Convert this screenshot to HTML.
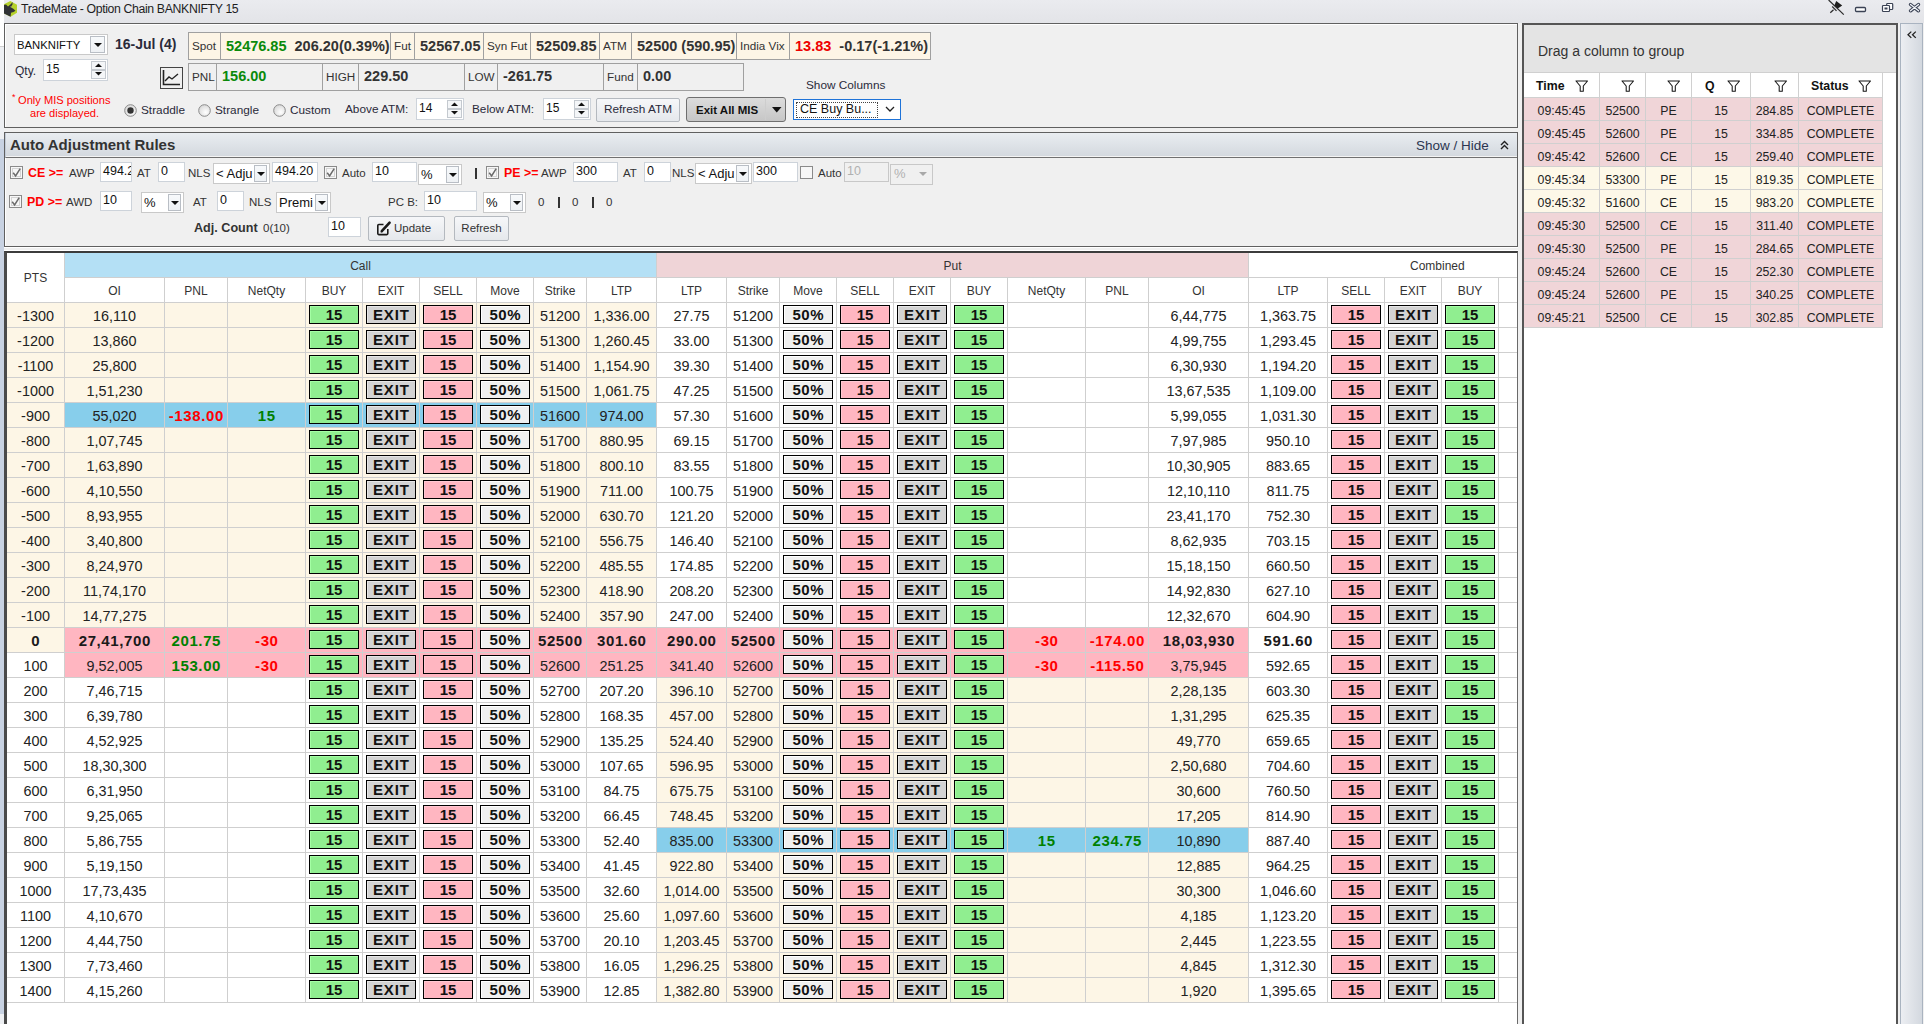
<!DOCTYPE html><html><head><meta charset="utf-8"><style>
*{box-sizing:border-box;margin:0;padding:0}
html,body{width:1924px;height:1024px;overflow:hidden;background:#f0f0f0;font-family:"Liberation Sans",sans-serif;color:#222}
body>div, .a{position:absolute}
div{position:absolute}
</style></head><body><div style="left:0px;top:0px;width:4px;height:1024px;background:#c8d2e2"></div>
<div style="left:0px;top:0px;width:4px;height:46px;background:#ffffff"></div>
<div style="left:0px;top:46px;width:4px;height:1px;background:#d0d0d0"></div>
<div style="left:0px;top:47px;width:4px;height:92px;background:#eef0f3"></div>
<div style="left:0px;top:1014px;width:4px;height:10px;background:#eef0f3"></div>
<div style="left:4px;top:0px;width:1920px;height:23px;background:linear-gradient(#eaebef,#e3e4e8)"></div>
<svg style="position:absolute;left:4px;top:1px" width="14" height="16" viewBox="0 0 14 16"><polygon points="6.3,0 13,3.8 13,11.8 6.6,15.8 0,12.5 0,3.2" fill="#b5d12c"/><path d="M0,4 L2,3.5 L4,5.5 L7,3 L8.5,1 L8.5,3.5 L6.5,6.2 L9,7.5 L11.5,9.8 L9.5,11 L7,11.8 L6.6,15.8 L0,12.5 Z" fill="#303236"/><path d="M6.5,5 L7.5,6.5" stroke="#777" stroke-width="1"/></svg>
<div style="left:21px;top:-0.5px;height:18px;line-height:18px;white-space:nowrap;text-align:left;font-size:12.3px;letter-spacing:-0.37px;color:#1e1e1e">TradeMate - Option Chain BANKNIFTY 15</div>
<svg style="position:absolute;left:1824px;top:0px" width="100" height="18" viewBox="0 0 100 18"><line x1="4.6" y1="0" x2="19.8" y2="14.6" stroke="#2a2a2a" stroke-width="1.2"/><path d="M12.2,1.1 L18.2,5.4 L13.8,8.6 L10.4,5.4 Z" fill="#1e1e1e"/><line x1="8.2" y1="6.5" x2="12.5" y2="10.8" stroke="#2a2a2a" stroke-width="1.2"/><line x1="6.3" y1="12.7" x2="9.5" y2="9.7" stroke="#2a2a2a" stroke-width="1.2"/><rect x="31.5" y="7.5" width="10" height="4" rx="1" fill="#fff" stroke="#3a4254" stroke-width="1.3"/><rect x="62.7" y="3.5" width="6" height="6" rx="0.8" fill="#fff" stroke="#3a4254" stroke-width="1.2"/><rect x="58.5" y="5.5" width="7" height="6" rx="0.8" fill="#fff" stroke="#3a4254" stroke-width="1.2"/><rect x="60.5" y="7.5" width="3" height="2" fill="#3a4254"/><path d="M86.5,4.5 L94.5,10.8 M94.5,4.5 L86.5,10.8" stroke="#3a4254" stroke-width="3.4" stroke-linecap="round"/><path d="M86.5,4.5 L94.5,10.8 M94.5,4.5 L86.5,10.8" stroke="#f4f6fb" stroke-width="1.3" stroke-linecap="round"/></svg>
<div style="left:4px;top:23px;width:1514px;height:105px;background:#f0f0f0;border:1px solid #606060;box-shadow:inset 1px 1px 0 #fff"></div>
<div style="left:14px;top:34px;width:94px;height:21px;background:#fff;border:1px solid #c9c9c9;"></div>
<div style="left:17px;top:36.5px;height:16px;line-height:16px;white-space:nowrap;text-align:left;font-size:11.3px;color:#111;">BANKNIFTY</div>
<div style="left:90px;top:36px;width:15px;height:17px;background:linear-gradient(#f7f9fb,#eef1f4);border:1px solid #b9bec5"></div>
<svg style="position:absolute;left:93.5px;top:42.5px" width="8" height="5"><path d="M0,0 L8,0 L4,4 Z" fill="#111"/></svg>
<div style="left:115px;top:35.0px;height:18px;line-height:18px;white-space:nowrap;text-align:left;font-size:14px;font-weight:bold;color:#2a2a3a">16-Jul (4)</div>
<div style="left:15px;top:62.0px;height:18px;line-height:18px;white-space:nowrap;text-align:left;font-size:12px;color:#2a2a3a">Qty.</div>
<div style="left:43px;top:59px;width:65px;height:22px;background:#fff;border:1px solid #cdd3da"></div>
<div style="left:46px;top:61.0px;height:16px;line-height:16px;white-space:nowrap;text-align:left;font-size:12px;color:#111">15</div>
<div style="left:91px;top:61px;width:15px;height:9px;background:#f4f6f8;border:1px solid #c4c9cf"></div>
<div style="left:91px;top:70px;width:15px;height:9px;background:#f4f6f8;border:1px solid #c4c9cf"></div>
<svg style="position:absolute;left:94px;top:63px" width="9" height="16"><path d="M1,4 L8,4 L4.5,0.5 Z" fill="#111"/><path d="M1,9 L8,9 L4.5,12.5 Z" fill="#111"/></svg>
<div style="left:12px;top:92.0px;height:10px;line-height:10px;white-space:nowrap;text-align:left;font-size:9px;color:#f00">*</div>
<div style="left:18px;top:93.0px;height:14px;line-height:14px;white-space:nowrap;text-align:left;font-size:11.1px;color:#f00">Only MIS positions</div>
<div style="left:30px;top:106.0px;height:14px;line-height:14px;white-space:nowrap;text-align:left;font-size:11.1px;color:#f00">are displayed.</div>
<div style="left:160px;top:67px;width:23px;height:22px;border:1px solid #444;background:#f0f0f0"></div>
<svg style="position:absolute;left:162px;top:69px" width="20" height="18"><path d="M1.5,1 L1.5,15.5 L18,15.5" stroke="#222" stroke-width="1.6" fill="none"/><path d="M3,12 L7,8 L10,10 L16,5" stroke="#222" stroke-width="1.4" fill="none"/></svg>
<div style="left:188px;top:32px;width:743px;height:28px;background:#fdf5e6;border:1px solid #a0a0a0"></div>
<div style="left:220px;top:32px;width:1px;height:28px;background:#a0a0a0"></div>
<div style="left:390px;top:32px;width:1px;height:28px;background:#a0a0a0"></div>
<div style="left:414px;top:32px;width:1px;height:28px;background:#a0a0a0"></div>
<div style="left:483px;top:32px;width:1px;height:28px;background:#a0a0a0"></div>
<div style="left:530px;top:32px;width:1px;height:28px;background:#a0a0a0"></div>
<div style="left:599px;top:32px;width:1px;height:28px;background:#a0a0a0"></div>
<div style="left:631px;top:32px;width:1px;height:28px;background:#a0a0a0"></div>
<div style="left:736px;top:32px;width:1px;height:28px;background:#a0a0a0"></div>
<div style="left:789px;top:32px;width:1px;height:28px;background:#a0a0a0"></div>
<div style="left:192px;top:37.0px;height:18px;line-height:18px;white-space:nowrap;text-align:left;font-size:11.7px;color:#333">Spot</div>
<div style="left:226px;top:37.0px;height:18px;line-height:18px;white-space:nowrap;text-align:left;font-size:14.5px;font-weight:bold;color:#333"><span style="color:#0a8a0a">52476.85</span>&nbsp; 206.20(0.39%)</div>
<div style="left:394px;top:37.0px;height:18px;line-height:18px;white-space:nowrap;text-align:left;font-size:11.7px;color:#333">Fut</div>
<div style="left:420px;top:37.0px;height:18px;line-height:18px;white-space:nowrap;text-align:left;font-size:14.5px;font-weight:bold;color:#333">52567.05</div>
<div style="left:487px;top:37.0px;height:18px;line-height:18px;white-space:nowrap;text-align:left;font-size:11.7px;color:#333">Syn Fut</div>
<div style="left:536px;top:37.0px;height:18px;line-height:18px;white-space:nowrap;text-align:left;font-size:14.5px;font-weight:bold;color:#333">52509.85</div>
<div style="left:603px;top:37.0px;height:18px;line-height:18px;white-space:nowrap;text-align:left;font-size:11.7px;color:#333">ATM</div>
<div style="left:637px;top:37.0px;height:18px;line-height:18px;white-space:nowrap;text-align:left;font-size:14.5px;font-weight:bold;color:#333">52500 (590.95)</div>
<div style="left:740px;top:37.0px;height:18px;line-height:18px;white-space:nowrap;text-align:left;font-size:11.7px;color:#333">India Vix</div>
<div style="left:795px;top:37.0px;height:18px;line-height:18px;white-space:nowrap;text-align:left;font-size:14.5px;font-weight:bold;color:#333"><span style="color:#e00">13.83</span>&nbsp; -0.17(-1.21%)</div>
<div style="left:188px;top:63px;width:556px;height:28px;background:#f0f0f0;border:1px solid #a0a0a0"></div>
<div style="left:216px;top:63px;width:1px;height:28px;background:#a0a0a0"></div>
<div style="left:322px;top:63px;width:1px;height:28px;background:#a0a0a0"></div>
<div style="left:358px;top:63px;width:1px;height:28px;background:#a0a0a0"></div>
<div style="left:464px;top:63px;width:1px;height:28px;background:#a0a0a0"></div>
<div style="left:497px;top:63px;width:1px;height:28px;background:#a0a0a0"></div>
<div style="left:603px;top:63px;width:1px;height:28px;background:#a0a0a0"></div>
<div style="left:637px;top:63px;width:1px;height:28px;background:#a0a0a0"></div>
<div style="left:192px;top:68.0px;height:18px;line-height:18px;white-space:nowrap;text-align:left;font-size:11.7px;color:#333">PNL</div>
<div style="left:222px;top:67.0px;height:18px;line-height:18px;white-space:nowrap;text-align:left;font-size:14.5px;font-weight:bold;color:#0a8a0a">156.00</div>
<div style="left:326px;top:68.0px;height:18px;line-height:18px;white-space:nowrap;text-align:left;font-size:11.7px;color:#333">HIGH</div>
<div style="left:364px;top:67.0px;height:18px;line-height:18px;white-space:nowrap;text-align:left;font-size:14.5px;font-weight:bold;color:#333">229.50</div>
<div style="left:468px;top:68.0px;height:18px;line-height:18px;white-space:nowrap;text-align:left;font-size:11.7px;color:#333">LOW</div>
<div style="left:503px;top:67.0px;height:18px;line-height:18px;white-space:nowrap;text-align:left;font-size:14.5px;font-weight:bold;color:#333">-261.75</div>
<div style="left:607px;top:68.0px;height:18px;line-height:18px;white-space:nowrap;text-align:left;font-size:11.7px;color:#333">Fund</div>
<div style="left:643px;top:67.0px;height:18px;line-height:18px;white-space:nowrap;text-align:left;font-size:14.5px;font-weight:bold;color:#333">0.00</div>
<svg style="position:absolute;left:123.5px;top:103.5px" width="13" height="13"><defs><radialGradient id="rg" cx="0.6" cy="0.65" r="0.6"><stop offset="0" stop-color="#ffffff"/><stop offset="1" stop-color="#dcdcdc"/></radialGradient></defs><circle cx="6.5" cy="6.5" r="5.8" fill="url(#rg)" stroke="#8a8a8a" stroke-width="1"/><circle cx="6.5" cy="6.5" r="3.2" fill="#333"/></svg>
<div style="left:141px;top:101.0px;height:18px;line-height:18px;white-space:nowrap;text-align:left;font-size:11.8px;color:#2a2a3a">Straddle</div>
<svg style="position:absolute;left:197.5px;top:103.5px" width="13" height="13"><defs><radialGradient id="rg" cx="0.6" cy="0.65" r="0.6"><stop offset="0" stop-color="#ffffff"/><stop offset="1" stop-color="#dcdcdc"/></radialGradient></defs><circle cx="6.5" cy="6.5" r="5.8" fill="url(#rg)" stroke="#8a8a8a" stroke-width="1"/></svg>
<div style="left:215px;top:101.0px;height:18px;line-height:18px;white-space:nowrap;text-align:left;font-size:11.8px;color:#2a2a3a">Strangle</div>
<svg style="position:absolute;left:272.5px;top:103.5px" width="13" height="13"><defs><radialGradient id="rg" cx="0.6" cy="0.65" r="0.6"><stop offset="0" stop-color="#ffffff"/><stop offset="1" stop-color="#dcdcdc"/></radialGradient></defs><circle cx="6.5" cy="6.5" r="5.8" fill="url(#rg)" stroke="#8a8a8a" stroke-width="1"/></svg>
<div style="left:290px;top:101.0px;height:18px;line-height:18px;white-space:nowrap;text-align:left;font-size:11.8px;color:#2a2a3a">Custom</div>
<div style="left:345px;top:100.0px;height:18px;line-height:18px;white-space:nowrap;text-align:left;font-size:11.8px;color:#2a2a3a">Above ATM:</div>
<div style="left:416px;top:98px;width:48px;height:22px;background:#fff;border:1px solid #cdd3da"></div>
<div style="left:419px;top:100.0px;height:16px;line-height:16px;white-space:nowrap;text-align:left;font-size:12px;color:#111">14</div>
<div style="left:447px;top:100px;width:15px;height:9px;background:#f4f6f8;border:1px solid #c4c9cf"></div>
<div style="left:447px;top:109px;width:15px;height:9px;background:#f4f6f8;border:1px solid #c4c9cf"></div>
<svg style="position:absolute;left:450px;top:102px" width="9" height="16"><path d="M1,4 L8,4 L4.5,0.5 Z" fill="#111"/><path d="M1,9 L8,9 L4.5,12.5 Z" fill="#111"/></svg>
<div style="left:472px;top:100.0px;height:18px;line-height:18px;white-space:nowrap;text-align:left;font-size:11.8px;color:#2a2a3a">Below ATM:</div>
<div style="left:543px;top:98px;width:48px;height:22px;background:#fff;border:1px solid #cdd3da"></div>
<div style="left:546px;top:100.0px;height:16px;line-height:16px;white-space:nowrap;text-align:left;font-size:12px;color:#111">15</div>
<div style="left:574px;top:100px;width:15px;height:9px;background:#f4f6f8;border:1px solid #c4c9cf"></div>
<div style="left:574px;top:109px;width:15px;height:9px;background:#f4f6f8;border:1px solid #c4c9cf"></div>
<svg style="position:absolute;left:577px;top:102px" width="9" height="16"><path d="M1,4 L8,4 L4.5,0.5 Z" fill="#111"/><path d="M1,9 L8,9 L4.5,12.5 Z" fill="#111"/></svg>
<div style="left:596px;top:98px;width:84px;height:24px;background:linear-gradient(#f6f7f9,#e5e8ec);border:1px solid #b4b9bf;border-radius:2px"></div>
<div style="left:596px;top:100.0px;height:18px;line-height:18px;width:84px;text-align:center;font-size:11.8px;color:#2a2a3a">Refresh ATM</div>
<div style="left:686px;top:97px;width:100px;height:25px;background:linear-gradient(#dcdcdc,#c6c6c6);border:1px solid #6f6f6f;border-radius:3px"></div>
<div style="left:765px;top:99px;width:1px;height:21px;background:#cdcdcd"></div>
<div style="left:696px;top:101.0px;height:18px;line-height:18px;white-space:nowrap;text-align:left;font-size:11.5px;font-weight:bold;color:#111">Exit All MIS</div>
<svg style="position:absolute;left:772px;top:107px" width="10" height="6"><path d="M0,0 L9.5,0 L4.75,5.5 Z" fill="#111"/></svg>
<div style="left:806px;top:76.0px;height:18px;line-height:18px;white-space:nowrap;text-align:left;font-size:11.8px;color:#2a2a3a">Show Columns</div>
<div style="left:793px;top:99px;width:108px;height:21px;background:#fff;border:1px solid #1e73d8"></div>
<div style="left:796px;top:102px;width:82px;height:16px;border:1px dotted #444"></div>
<div style="left:800px;top:100.0px;height:18px;line-height:18px;white-space:nowrap;text-align:left;font-size:12.5px;color:#111">CE Buy Bu...</div>
<svg style="position:absolute;left:885px;top:106px" width="10" height="7"><path d="M1,1 L5,5 L9,1" stroke="#222" stroke-width="1.3" fill="none"/></svg>
<div style="left:4px;top:132px;width:1514px;height:115px;background:#f0f0f0;border:1px solid #606060;box-shadow:inset 1px 1px 0 #fff"></div>
<div style="left:5px;top:133px;width:1512px;height:25px;background:linear-gradient(#e9edf1,#d3d8de);border-left:1px solid #c3ccd8;border-bottom:1px solid #707070;box-shadow:inset 0 -1px 0 #f4f4f4"></div>
<div style="left:10px;top:135.0px;height:20px;line-height:20px;white-space:nowrap;text-align:left;font-size:15px;font-weight:bold;color:#333">Auto Adjustment Rules</div>
<div style="left:1416px;top:137.0px;height:18px;line-height:18px;white-space:nowrap;text-align:left;font-size:13.5px;color:#2b3550">Show / Hide</div>
<svg style="position:absolute;left:1500px;top:140px" width="9" height="10"><path d="M1,5 L4.5,1.5 L8,5 M1,9 L4.5,5.5 L8,9" stroke="#222" stroke-width="1.4" fill="none"/></svg>
<svg style="position:absolute;left:10px;top:166px" width="13" height="13"><rect x="0.5" y="0.5" width="12" height="12" fill="#f7f7f7" stroke="#8a8a8a"/><rect x="2.5" y="2.5" width="8" height="8" fill="none" stroke="#d4d4d4"/><path d="M3.2,6.8 L5.6,10 L10.2,2.6" stroke="#6a6a6a" stroke-width="1.5" fill="none"/></svg>
<div style="left:28px;top:164.0px;height:18px;line-height:18px;white-space:nowrap;text-align:left;font-size:12.4px;font-weight:bold;color:#f00">CE &gt;=</div>
<div style="left:69px;top:164.0px;height:18px;line-height:18px;white-space:nowrap;text-align:left;font-size:11.5px;color:#333">AWP</div>
<div style="left:100px;top:162px;width:32px;height:20px;background:#fff;border:1px solid #cdd3da;overflow:hidden"><div style="left:2px;top:0.0px;line-height:16px;height:16px;font-size:12.5px;color:#111;white-space:nowrap">494.2</div></div>
<div style="left:137px;top:164.0px;height:18px;line-height:18px;white-space:nowrap;text-align:left;font-size:11.5px;color:#333">AT</div>
<div style="left:158px;top:162px;width:27px;height:20px;background:#fff;border:1px solid #cdd3da;overflow:hidden"><div style="left:2px;top:0.0px;line-height:16px;height:16px;font-size:12.5px;color:#111;white-space:nowrap">0</div></div>
<div style="left:188px;top:164.0px;height:18px;line-height:18px;white-space:nowrap;text-align:left;font-size:11.5px;color:#333">NLS</div>
<div style="left:213px;top:163px;width:57px;height:21px;background:#fff;border:1px solid #c9c9c9;"></div>
<div style="left:216px;top:165.5px;height:16px;line-height:16px;white-space:nowrap;text-align:left;font-size:13px;color:#111;width:38px;overflow:hidden">&lt; Adju</div>
<div style="left:254px;top:165px;width:13px;height:17px;background:linear-gradient(#f7f9fb,#eef1f4);border:1px solid #b9bec5"></div>
<svg style="position:absolute;left:256.5px;top:171.5px" width="8" height="5"><path d="M0,0 L8,0 L4,4 Z" fill="#111"/></svg>
<div style="left:272px;top:162px;width:46px;height:20px;background:#fff;border:1px solid #cdd3da;overflow:hidden"><div style="left:2px;top:0.0px;line-height:16px;height:16px;font-size:12.5px;color:#111;white-space:nowrap">494.20</div></div>
<svg style="position:absolute;left:324px;top:166px" width="13" height="13"><rect x="0.5" y="0.5" width="12" height="12" fill="#f7f7f7" stroke="#8a8a8a"/><rect x="2.5" y="2.5" width="8" height="8" fill="none" stroke="#d4d4d4"/><path d="M3.2,6.8 L5.6,10 L10.2,2.6" stroke="#6a6a6a" stroke-width="1.5" fill="none"/></svg>
<div style="left:342px;top:164.0px;height:18px;line-height:18px;white-space:nowrap;text-align:left;font-size:11.5px;color:#333">Auto</div>
<div style="left:372px;top:162px;width:45px;height:20px;background:#fff;border:1px solid #cdd3da;overflow:hidden"><div style="left:2px;top:0.0px;line-height:16px;height:16px;font-size:12.5px;color:#111;white-space:nowrap">10</div></div>
<div style="left:418px;top:164px;width:44px;height:21px;background:#fff;border:1px solid #c9c9c9;"></div>
<div style="left:421px;top:166.5px;height:16px;line-height:16px;white-space:nowrap;text-align:left;font-size:13px;color:#111;">%</div>
<div style="left:446px;top:166px;width:13px;height:17px;background:linear-gradient(#f7f9fb,#eef1f4);border:1px solid #b9bec5"></div>
<svg style="position:absolute;left:448.5px;top:172.5px" width="8" height="5"><path d="M0,0 L8,0 L4,4 Z" fill="#111"/></svg>
<div style="left:475px;top:168px;width:2px;height:11px;background:#333"></div>
<svg style="position:absolute;left:486px;top:166px" width="13" height="13"><rect x="0.5" y="0.5" width="12" height="12" fill="#f7f7f7" stroke="#8a8a8a"/><rect x="2.5" y="2.5" width="8" height="8" fill="none" stroke="#d4d4d4"/><path d="M3.2,6.8 L5.6,10 L10.2,2.6" stroke="#6a6a6a" stroke-width="1.5" fill="none"/></svg>
<div style="left:504px;top:164.0px;height:18px;line-height:18px;white-space:nowrap;text-align:left;font-size:12.4px;font-weight:bold;color:#f00">PE &gt;=</div>
<div style="left:541px;top:164.0px;height:18px;line-height:18px;white-space:nowrap;text-align:left;font-size:11.5px;color:#333">AWP</div>
<div style="left:573px;top:162px;width:45px;height:20px;background:#fff;border:1px solid #cdd3da;overflow:hidden"><div style="left:2px;top:0.0px;line-height:16px;height:16px;font-size:12.5px;color:#111;white-space:nowrap">300</div></div>
<div style="left:623px;top:164.0px;height:18px;line-height:18px;white-space:nowrap;text-align:left;font-size:11.5px;color:#333">AT</div>
<div style="left:644px;top:162px;width:27px;height:20px;background:#fff;border:1px solid #cdd3da;overflow:hidden"><div style="left:2px;top:0.0px;line-height:16px;height:16px;font-size:12.5px;color:#111;white-space:nowrap">0</div></div>
<div style="left:672px;top:164.0px;height:18px;line-height:18px;white-space:nowrap;text-align:left;font-size:11.5px;color:#333">NLS</div>
<div style="left:695px;top:163px;width:57px;height:21px;background:#fff;border:1px solid #c9c9c9;"></div>
<div style="left:698px;top:165.5px;height:16px;line-height:16px;white-space:nowrap;text-align:left;font-size:13px;color:#111;">&lt; Adju</div>
<div style="left:736px;top:165px;width:13px;height:17px;background:linear-gradient(#f7f9fb,#eef1f4);border:1px solid #b9bec5"></div>
<svg style="position:absolute;left:738.5px;top:171.5px" width="8" height="5"><path d="M0,0 L8,0 L4,4 Z" fill="#111"/></svg>
<div style="left:753px;top:162px;width:45px;height:20px;background:#fff;border:1px solid #cdd3da;overflow:hidden"><div style="left:2px;top:0.0px;line-height:16px;height:16px;font-size:12.5px;color:#111;white-space:nowrap">300</div></div>
<svg style="position:absolute;left:800px;top:166px" width="13" height="13"><rect x="0.5" y="0.5" width="12" height="12" fill="#f7f7f7" stroke="#8a8a8a"/></svg>
<div style="left:818px;top:164.0px;height:18px;line-height:18px;white-space:nowrap;text-align:left;font-size:11.5px;color:#333">Auto</div>
<div style="left:844px;top:162px;width:45px;height:20px;background:#f0f0f0;border:1px solid #c8c8c8;overflow:hidden"><div style="left:2px;top:0.0px;line-height:16px;height:16px;font-size:12.5px;color:#b0b0b0;white-space:nowrap">10</div></div>
<div style="left:890px;top:164px;width:43px;height:21px;background:#f0f0f0;border:1px solid #c8c8c8"></div>
<div style="left:894px;top:165.0px;height:18px;line-height:18px;white-space:nowrap;text-align:left;font-size:13px;color:#b0b0b0">%</div>
<svg style="position:absolute;left:919px;top:172px" width="8" height="5"><path d="M0,0 L8,0 L4,4 Z" fill="#a8a8a8"/></svg>
<svg style="position:absolute;left:9px;top:195px" width="13" height="13"><rect x="0.5" y="0.5" width="12" height="12" fill="#f7f7f7" stroke="#8a8a8a"/><rect x="2.5" y="2.5" width="8" height="8" fill="none" stroke="#d4d4d4"/><path d="M3.2,6.8 L5.6,10 L10.2,2.6" stroke="#6a6a6a" stroke-width="1.5" fill="none"/></svg>
<div style="left:27px;top:193.0px;height:18px;line-height:18px;white-space:nowrap;text-align:left;font-size:12.4px;font-weight:bold;color:#f00">PD &gt;=</div>
<div style="left:66px;top:193.0px;height:18px;line-height:18px;white-space:nowrap;text-align:left;font-size:11.5px;color:#333">AWD</div>
<div style="left:100px;top:191px;width:32px;height:20px;background:#fff;border:1px solid #cdd3da;overflow:hidden"><div style="left:2px;top:0.0px;line-height:16px;height:16px;font-size:12.5px;color:#111;white-space:nowrap">10</div></div>
<div style="left:141px;top:192px;width:43px;height:21px;background:#fff;border:1px solid #c9c9c9;"></div>
<div style="left:144px;top:194.5px;height:16px;line-height:16px;white-space:nowrap;text-align:left;font-size:13px;color:#111;">%</div>
<div style="left:168px;top:194px;width:13px;height:17px;background:linear-gradient(#f7f9fb,#eef1f4);border:1px solid #b9bec5"></div>
<svg style="position:absolute;left:170.5px;top:200.5px" width="8" height="5"><path d="M0,0 L8,0 L4,4 Z" fill="#111"/></svg>
<div style="left:193px;top:193.0px;height:18px;line-height:18px;white-space:nowrap;text-align:left;font-size:11.5px;color:#333">AT</div>
<div style="left:217px;top:191px;width:27px;height:20px;background:#fff;border:1px solid #cdd3da;overflow:hidden"><div style="left:2px;top:0.0px;line-height:16px;height:16px;font-size:12.5px;color:#111;white-space:nowrap">0</div></div>
<div style="left:249px;top:193.0px;height:18px;line-height:18px;white-space:nowrap;text-align:left;font-size:11.5px;color:#333">NLS</div>
<div style="left:276px;top:192px;width:55px;height:21px;background:#fff;border:1px solid #c9c9c9;"></div>
<div style="left:279px;top:194.5px;height:16px;line-height:16px;white-space:nowrap;text-align:left;font-size:13px;color:#111;">Premi</div>
<div style="left:315px;top:194px;width:13px;height:17px;background:linear-gradient(#f7f9fb,#eef1f4);border:1px solid #b9bec5"></div>
<svg style="position:absolute;left:317.5px;top:200.5px" width="8" height="5"><path d="M0,0 L8,0 L4,4 Z" fill="#111"/></svg>
<div style="left:388px;top:193.0px;height:18px;line-height:18px;white-space:nowrap;text-align:left;font-size:11.5px;color:#333">PC B:</div>
<div style="left:424px;top:191px;width:53px;height:20px;background:#fff;border:1px solid #cdd3da;overflow:hidden"><div style="left:2px;top:0.0px;line-height:16px;height:16px;font-size:12.5px;color:#111;white-space:nowrap">10</div></div>
<div style="left:483px;top:192px;width:43px;height:21px;background:#fff;border:1px solid #c9c9c9;"></div>
<div style="left:486px;top:194.5px;height:16px;line-height:16px;white-space:nowrap;text-align:left;font-size:13px;color:#111;">%</div>
<div style="left:510px;top:194px;width:13px;height:17px;background:linear-gradient(#f7f9fb,#eef1f4);border:1px solid #b9bec5"></div>
<svg style="position:absolute;left:512.5px;top:200.5px" width="8" height="5"><path d="M0,0 L8,0 L4,4 Z" fill="#111"/></svg>
<div style="left:538px;top:193.0px;height:18px;line-height:18px;white-space:nowrap;text-align:left;font-size:11.5px;color:#333">0</div>
<div style="left:558px;top:197px;width:2px;height:11px;background:#333"></div>
<div style="left:572px;top:193.0px;height:18px;line-height:18px;white-space:nowrap;text-align:left;font-size:11.5px;color:#333">0</div>
<div style="left:592px;top:197px;width:2px;height:11px;background:#333"></div>
<div style="left:606px;top:193.0px;height:18px;line-height:18px;white-space:nowrap;text-align:left;font-size:11.5px;color:#333">0</div>
<div style="left:194px;top:219.0px;height:18px;line-height:18px;white-space:nowrap;text-align:left;font-size:12.6px;font-weight:bold;color:#333">Adj. Count</div>
<div style="left:263px;top:219.0px;height:18px;line-height:18px;white-space:nowrap;text-align:left;font-size:11.5px;color:#333">0(10)</div>
<div style="left:328px;top:217px;width:33px;height:20px;background:#fff;border:1px solid #cdd3da;overflow:hidden"><div style="left:2px;top:0.0px;line-height:16px;height:16px;font-size:12.5px;color:#111;white-space:nowrap">10</div></div>
<div style="left:368px;top:216px;width:77px;height:25px;background:linear-gradient(#f6f7f9,#e5e8ec);border:1px solid #b4b9bf;border-radius:2px"></div>
<svg style="position:absolute;left:375px;top:219px" width="17" height="17"><path d="M8.5,5.5 H3.8 Q2.8,5.5 2.8,6.5 V14.6 Q2.8,15.6 3.8,15.6 H11.8 Q12.8,15.6 12.8,14.6 V10" fill="none" stroke="#1a1a1a" stroke-width="1.6"/><path d="M6.8,12.2 L14.6,3.6" stroke="#1a1a1a" stroke-width="2.6" stroke-linecap="round"/><path d="M5.6,13.6 L6.4,11.4 L7.9,12.8 Z" fill="#1a1a1a"/></svg>
<div style="left:394px;top:219.0px;height:18px;line-height:18px;white-space:nowrap;text-align:left;font-size:11.5px;color:#333">Update</div>
<div style="left:454px;top:216px;width:55px;height:25px;background:linear-gradient(#f6f7f9,#e5e8ec);border:1px solid #b4b9bf;border-radius:2px"></div>
<div style="left:454px;top:219.0px;height:18px;line-height:18px;width:55px;text-align:center;font-size:11.5px;color:#333">Refresh</div>
<div style="left:4px;top:247px;width:1514px;height:4px;background:#f0f0f0;border-top:1px solid #fff;border-bottom:1px solid #fff"></div>
<div style="left:4px;top:251px;width:1514px;height:773px;background:#fff;border-top:2px solid #3c3c3c;border-left:3px solid #4a4a4a;border-right:1px solid #6a6a6a"></div>
<div style="left:65px;top:253px;width:591px;height:24px;background:#b4e0f5"></div>
<div style="left:657px;top:253px;width:591px;height:24px;background:#efd4d7"></div>
<div style="left:65px;top:258.0px;height:16px;line-height:16px;width:591px;text-align:center;font-size:12px;color:#333">Call</div>
<div style="left:657px;top:258.0px;height:16px;line-height:16px;width:591px;text-align:center;font-size:12px;color:#333">Put</div>
<div style="left:1410px;top:258.0px;height:16px;line-height:16px;white-space:nowrap;text-align:left;font-size:12px;color:#333">Combined</div>
<div style="left:65px;top:277px;width:1452px;height:1px;background:#cfcfcf"></div>
<div style="left:7px;top:270.0px;height:16px;line-height:16px;width:57px;text-align:center;font-size:12px;color:#333">PTS</div>
<div style="left:65px;top:283.0px;height:16px;line-height:16px;width:99px;text-align:center;font-size:12px;color:#333">OI</div>
<div style="left:165px;top:283.0px;height:16px;line-height:16px;width:62px;text-align:center;font-size:12px;color:#333">PNL</div>
<div style="left:228px;top:283.0px;height:16px;line-height:16px;width:77px;text-align:center;font-size:12px;color:#333">NetQty</div>
<div style="left:306px;top:283.0px;height:16px;line-height:16px;width:56px;text-align:center;font-size:12px;color:#333">BUY</div>
<div style="left:363px;top:283.0px;height:16px;line-height:16px;width:56px;text-align:center;font-size:12px;color:#333">EXIT</div>
<div style="left:420px;top:283.0px;height:16px;line-height:16px;width:56px;text-align:center;font-size:12px;color:#333">SELL</div>
<div style="left:477px;top:283.0px;height:16px;line-height:16px;width:56px;text-align:center;font-size:12px;color:#333">Move</div>
<div style="left:534px;top:283.0px;height:16px;line-height:16px;width:52px;text-align:center;font-size:12px;color:#333">Strike</div>
<div style="left:587px;top:283.0px;height:16px;line-height:16px;width:69px;text-align:center;font-size:12px;color:#333">LTP</div>
<div style="left:657px;top:283.0px;height:16px;line-height:16px;width:69px;text-align:center;font-size:12px;color:#333">LTP</div>
<div style="left:727px;top:283.0px;height:16px;line-height:16px;width:52px;text-align:center;font-size:12px;color:#333">Strike</div>
<div style="left:780px;top:283.0px;height:16px;line-height:16px;width:56px;text-align:center;font-size:12px;color:#333">Move</div>
<div style="left:837px;top:283.0px;height:16px;line-height:16px;width:56px;text-align:center;font-size:12px;color:#333">SELL</div>
<div style="left:894px;top:283.0px;height:16px;line-height:16px;width:56px;text-align:center;font-size:12px;color:#333">EXIT</div>
<div style="left:951px;top:283.0px;height:16px;line-height:16px;width:56px;text-align:center;font-size:12px;color:#333">BUY</div>
<div style="left:1008px;top:283.0px;height:16px;line-height:16px;width:77px;text-align:center;font-size:12px;color:#333">NetQty</div>
<div style="left:1086px;top:283.0px;height:16px;line-height:16px;width:62px;text-align:center;font-size:12px;color:#333">PNL</div>
<div style="left:1149px;top:283.0px;height:16px;line-height:16px;width:99px;text-align:center;font-size:12px;color:#333">OI</div>
<div style="left:1249px;top:283.0px;height:16px;line-height:16px;width:78px;text-align:center;font-size:12px;color:#333">LTP</div>
<div style="left:1328px;top:283.0px;height:16px;line-height:16px;width:56px;text-align:center;font-size:12px;color:#333">SELL</div>
<div style="left:1385px;top:283.0px;height:16px;line-height:16px;width:56px;text-align:center;font-size:12px;color:#333">EXIT</div>
<div style="left:1442px;top:283.0px;height:16px;line-height:16px;width:56px;text-align:center;font-size:12px;color:#333">BUY</div>
<div style="left:1499px;top:283.0px;height:16px;line-height:16px;width:18px;text-align:center;font-size:12px;color:#333"></div>
<div style="left:7px;top:303px;width:57px;height:24px;background:#fdf6e6"></div>
<div style="left:65px;top:303px;width:591px;height:24px;background:#fdf6e6"></div>
<div style="left:7px;top:327px;width:1510px;height:1px;background:#cfcfcf"></div>
<div style="left:7px;top:305.5px;height:20px;line-height:20px;width:57px;text-align:center;font-size:14.4px;color:#222">-1300</div>
<div style="left:65px;top:305.5px;height:20px;line-height:20px;width:99px;text-align:center;font-size:14.4px;color:#222">16,110</div>
<div style="left:534px;top:305.5px;height:20px;line-height:20px;width:52px;text-align:center;font-size:14.4px;color:#222">51200</div>
<div style="left:587px;top:305.5px;height:20px;line-height:20px;width:69px;text-align:center;font-size:14.4px;color:#222">1,336.00</div>
<div style="left:657px;top:305.5px;height:20px;line-height:20px;width:69px;text-align:center;font-size:14.4px;color:#222">27.75</div>
<div style="left:727px;top:305.5px;height:20px;line-height:20px;width:52px;text-align:center;font-size:14.4px;color:#222">51200</div>
<div style="left:1149px;top:305.5px;height:20px;line-height:20px;width:99px;text-align:center;font-size:14.4px;color:#222">6,44,775</div>
<div style="left:1249px;top:305.5px;height:20px;line-height:20px;width:78px;text-align:center;font-size:14.4px;color:#222">1,363.75</div>
<div style="left:309px;top:305px;width:50px;height:19px;background:#90ee90;border:1px solid #000;box-shadow:inset 1px 1px 0 #a4ffa4"></div>
<div style="left:309px;top:304.5px;height:19px;line-height:19px;width:50px;text-align:center;font-size:15px;font-weight:bold;color:#111;">15</div>
<div style="left:366px;top:305px;width:50px;height:19px;background:#d3d3d3;border:1px solid #000;box-shadow:inset 1px 1px 0 #e6e6e6"></div>
<div style="left:366px;top:304.5px;height:19px;line-height:19px;width:50px;text-align:center;font-size:15px;font-weight:bold;color:#111;letter-spacing:0.9px;text-indent:0.9px;">EXIT</div>
<div style="left:423px;top:305px;width:50px;height:19px;background:#ffb6c1;border:1px solid #000;box-shadow:inset 1px 1px 0 #ffc8d2"></div>
<div style="left:423px;top:304.5px;height:19px;line-height:19px;width:50px;text-align:center;font-size:15px;font-weight:bold;color:#111;">15</div>
<div style="left:480px;top:305px;width:50px;height:19px;background:#f0f0f0;border:1px solid #000;box-shadow:inset 1px 1px 0 #ffffff"></div>
<div style="left:480px;top:304.5px;height:19px;line-height:19px;width:50px;text-align:center;font-size:15px;font-weight:bold;color:#111;letter-spacing:0.5px;text-indent:0.5px;">50%</div>
<div style="left:783px;top:305px;width:50px;height:19px;background:#f0f0f0;border:1px solid #000;box-shadow:inset 1px 1px 0 #ffffff"></div>
<div style="left:783px;top:304.5px;height:19px;line-height:19px;width:50px;text-align:center;font-size:15px;font-weight:bold;color:#111;letter-spacing:0.5px;text-indent:0.5px;">50%</div>
<div style="left:840px;top:305px;width:50px;height:19px;background:#ffb6c1;border:1px solid #000;box-shadow:inset 1px 1px 0 #ffc8d2"></div>
<div style="left:840px;top:304.5px;height:19px;line-height:19px;width:50px;text-align:center;font-size:15px;font-weight:bold;color:#111;">15</div>
<div style="left:897px;top:305px;width:50px;height:19px;background:#d3d3d3;border:1px solid #000;box-shadow:inset 1px 1px 0 #e6e6e6"></div>
<div style="left:897px;top:304.5px;height:19px;line-height:19px;width:50px;text-align:center;font-size:15px;font-weight:bold;color:#111;letter-spacing:0.9px;text-indent:0.9px;">EXIT</div>
<div style="left:954px;top:305px;width:50px;height:19px;background:#90ee90;border:1px solid #000;box-shadow:inset 1px 1px 0 #a4ffa4"></div>
<div style="left:954px;top:304.5px;height:19px;line-height:19px;width:50px;text-align:center;font-size:15px;font-weight:bold;color:#111;">15</div>
<div style="left:1331px;top:305px;width:50px;height:19px;background:#ffb6c1;border:1px solid #000;box-shadow:inset 1px 1px 0 #ffc8d2"></div>
<div style="left:1331px;top:304.5px;height:19px;line-height:19px;width:50px;text-align:center;font-size:15px;font-weight:bold;color:#111;">15</div>
<div style="left:1388px;top:305px;width:50px;height:19px;background:#d3d3d3;border:1px solid #000;box-shadow:inset 1px 1px 0 #e6e6e6"></div>
<div style="left:1388px;top:304.5px;height:19px;line-height:19px;width:50px;text-align:center;font-size:15px;font-weight:bold;color:#111;letter-spacing:0.9px;text-indent:0.9px;">EXIT</div>
<div style="left:1445px;top:305px;width:50px;height:19px;background:#90ee90;border:1px solid #000;box-shadow:inset 1px 1px 0 #a4ffa4"></div>
<div style="left:1445px;top:304.5px;height:19px;line-height:19px;width:50px;text-align:center;font-size:15px;font-weight:bold;color:#111;">15</div>
<div style="left:7px;top:328px;width:57px;height:24px;background:#fdf6e6"></div>
<div style="left:65px;top:328px;width:591px;height:24px;background:#fdf6e6"></div>
<div style="left:7px;top:352px;width:1510px;height:1px;background:#cfcfcf"></div>
<div style="left:7px;top:330.5px;height:20px;line-height:20px;width:57px;text-align:center;font-size:14.4px;color:#222">-1200</div>
<div style="left:65px;top:330.5px;height:20px;line-height:20px;width:99px;text-align:center;font-size:14.4px;color:#222">13,860</div>
<div style="left:534px;top:330.5px;height:20px;line-height:20px;width:52px;text-align:center;font-size:14.4px;color:#222">51300</div>
<div style="left:587px;top:330.5px;height:20px;line-height:20px;width:69px;text-align:center;font-size:14.4px;color:#222">1,260.45</div>
<div style="left:657px;top:330.5px;height:20px;line-height:20px;width:69px;text-align:center;font-size:14.4px;color:#222">33.00</div>
<div style="left:727px;top:330.5px;height:20px;line-height:20px;width:52px;text-align:center;font-size:14.4px;color:#222">51300</div>
<div style="left:1149px;top:330.5px;height:20px;line-height:20px;width:99px;text-align:center;font-size:14.4px;color:#222">4,99,755</div>
<div style="left:1249px;top:330.5px;height:20px;line-height:20px;width:78px;text-align:center;font-size:14.4px;color:#222">1,293.45</div>
<div style="left:309px;top:330px;width:50px;height:19px;background:#90ee90;border:1px solid #000;box-shadow:inset 1px 1px 0 #a4ffa4"></div>
<div style="left:309px;top:329.5px;height:19px;line-height:19px;width:50px;text-align:center;font-size:15px;font-weight:bold;color:#111;">15</div>
<div style="left:366px;top:330px;width:50px;height:19px;background:#d3d3d3;border:1px solid #000;box-shadow:inset 1px 1px 0 #e6e6e6"></div>
<div style="left:366px;top:329.5px;height:19px;line-height:19px;width:50px;text-align:center;font-size:15px;font-weight:bold;color:#111;letter-spacing:0.9px;text-indent:0.9px;">EXIT</div>
<div style="left:423px;top:330px;width:50px;height:19px;background:#ffb6c1;border:1px solid #000;box-shadow:inset 1px 1px 0 #ffc8d2"></div>
<div style="left:423px;top:329.5px;height:19px;line-height:19px;width:50px;text-align:center;font-size:15px;font-weight:bold;color:#111;">15</div>
<div style="left:480px;top:330px;width:50px;height:19px;background:#f0f0f0;border:1px solid #000;box-shadow:inset 1px 1px 0 #ffffff"></div>
<div style="left:480px;top:329.5px;height:19px;line-height:19px;width:50px;text-align:center;font-size:15px;font-weight:bold;color:#111;letter-spacing:0.5px;text-indent:0.5px;">50%</div>
<div style="left:783px;top:330px;width:50px;height:19px;background:#f0f0f0;border:1px solid #000;box-shadow:inset 1px 1px 0 #ffffff"></div>
<div style="left:783px;top:329.5px;height:19px;line-height:19px;width:50px;text-align:center;font-size:15px;font-weight:bold;color:#111;letter-spacing:0.5px;text-indent:0.5px;">50%</div>
<div style="left:840px;top:330px;width:50px;height:19px;background:#ffb6c1;border:1px solid #000;box-shadow:inset 1px 1px 0 #ffc8d2"></div>
<div style="left:840px;top:329.5px;height:19px;line-height:19px;width:50px;text-align:center;font-size:15px;font-weight:bold;color:#111;">15</div>
<div style="left:897px;top:330px;width:50px;height:19px;background:#d3d3d3;border:1px solid #000;box-shadow:inset 1px 1px 0 #e6e6e6"></div>
<div style="left:897px;top:329.5px;height:19px;line-height:19px;width:50px;text-align:center;font-size:15px;font-weight:bold;color:#111;letter-spacing:0.9px;text-indent:0.9px;">EXIT</div>
<div style="left:954px;top:330px;width:50px;height:19px;background:#90ee90;border:1px solid #000;box-shadow:inset 1px 1px 0 #a4ffa4"></div>
<div style="left:954px;top:329.5px;height:19px;line-height:19px;width:50px;text-align:center;font-size:15px;font-weight:bold;color:#111;">15</div>
<div style="left:1331px;top:330px;width:50px;height:19px;background:#ffb6c1;border:1px solid #000;box-shadow:inset 1px 1px 0 #ffc8d2"></div>
<div style="left:1331px;top:329.5px;height:19px;line-height:19px;width:50px;text-align:center;font-size:15px;font-weight:bold;color:#111;">15</div>
<div style="left:1388px;top:330px;width:50px;height:19px;background:#d3d3d3;border:1px solid #000;box-shadow:inset 1px 1px 0 #e6e6e6"></div>
<div style="left:1388px;top:329.5px;height:19px;line-height:19px;width:50px;text-align:center;font-size:15px;font-weight:bold;color:#111;letter-spacing:0.9px;text-indent:0.9px;">EXIT</div>
<div style="left:1445px;top:330px;width:50px;height:19px;background:#90ee90;border:1px solid #000;box-shadow:inset 1px 1px 0 #a4ffa4"></div>
<div style="left:1445px;top:329.5px;height:19px;line-height:19px;width:50px;text-align:center;font-size:15px;font-weight:bold;color:#111;">15</div>
<div style="left:7px;top:353px;width:57px;height:24px;background:#fdf6e6"></div>
<div style="left:65px;top:353px;width:591px;height:24px;background:#fdf6e6"></div>
<div style="left:7px;top:377px;width:1510px;height:1px;background:#cfcfcf"></div>
<div style="left:7px;top:355.5px;height:20px;line-height:20px;width:57px;text-align:center;font-size:14.4px;color:#222">-1100</div>
<div style="left:65px;top:355.5px;height:20px;line-height:20px;width:99px;text-align:center;font-size:14.4px;color:#222">25,800</div>
<div style="left:534px;top:355.5px;height:20px;line-height:20px;width:52px;text-align:center;font-size:14.4px;color:#222">51400</div>
<div style="left:587px;top:355.5px;height:20px;line-height:20px;width:69px;text-align:center;font-size:14.4px;color:#222">1,154.90</div>
<div style="left:657px;top:355.5px;height:20px;line-height:20px;width:69px;text-align:center;font-size:14.4px;color:#222">39.30</div>
<div style="left:727px;top:355.5px;height:20px;line-height:20px;width:52px;text-align:center;font-size:14.4px;color:#222">51400</div>
<div style="left:1149px;top:355.5px;height:20px;line-height:20px;width:99px;text-align:center;font-size:14.4px;color:#222">6,30,930</div>
<div style="left:1249px;top:355.5px;height:20px;line-height:20px;width:78px;text-align:center;font-size:14.4px;color:#222">1,194.20</div>
<div style="left:309px;top:355px;width:50px;height:19px;background:#90ee90;border:1px solid #000;box-shadow:inset 1px 1px 0 #a4ffa4"></div>
<div style="left:309px;top:354.5px;height:19px;line-height:19px;width:50px;text-align:center;font-size:15px;font-weight:bold;color:#111;">15</div>
<div style="left:366px;top:355px;width:50px;height:19px;background:#d3d3d3;border:1px solid #000;box-shadow:inset 1px 1px 0 #e6e6e6"></div>
<div style="left:366px;top:354.5px;height:19px;line-height:19px;width:50px;text-align:center;font-size:15px;font-weight:bold;color:#111;letter-spacing:0.9px;text-indent:0.9px;">EXIT</div>
<div style="left:423px;top:355px;width:50px;height:19px;background:#ffb6c1;border:1px solid #000;box-shadow:inset 1px 1px 0 #ffc8d2"></div>
<div style="left:423px;top:354.5px;height:19px;line-height:19px;width:50px;text-align:center;font-size:15px;font-weight:bold;color:#111;">15</div>
<div style="left:480px;top:355px;width:50px;height:19px;background:#f0f0f0;border:1px solid #000;box-shadow:inset 1px 1px 0 #ffffff"></div>
<div style="left:480px;top:354.5px;height:19px;line-height:19px;width:50px;text-align:center;font-size:15px;font-weight:bold;color:#111;letter-spacing:0.5px;text-indent:0.5px;">50%</div>
<div style="left:783px;top:355px;width:50px;height:19px;background:#f0f0f0;border:1px solid #000;box-shadow:inset 1px 1px 0 #ffffff"></div>
<div style="left:783px;top:354.5px;height:19px;line-height:19px;width:50px;text-align:center;font-size:15px;font-weight:bold;color:#111;letter-spacing:0.5px;text-indent:0.5px;">50%</div>
<div style="left:840px;top:355px;width:50px;height:19px;background:#ffb6c1;border:1px solid #000;box-shadow:inset 1px 1px 0 #ffc8d2"></div>
<div style="left:840px;top:354.5px;height:19px;line-height:19px;width:50px;text-align:center;font-size:15px;font-weight:bold;color:#111;">15</div>
<div style="left:897px;top:355px;width:50px;height:19px;background:#d3d3d3;border:1px solid #000;box-shadow:inset 1px 1px 0 #e6e6e6"></div>
<div style="left:897px;top:354.5px;height:19px;line-height:19px;width:50px;text-align:center;font-size:15px;font-weight:bold;color:#111;letter-spacing:0.9px;text-indent:0.9px;">EXIT</div>
<div style="left:954px;top:355px;width:50px;height:19px;background:#90ee90;border:1px solid #000;box-shadow:inset 1px 1px 0 #a4ffa4"></div>
<div style="left:954px;top:354.5px;height:19px;line-height:19px;width:50px;text-align:center;font-size:15px;font-weight:bold;color:#111;">15</div>
<div style="left:1331px;top:355px;width:50px;height:19px;background:#ffb6c1;border:1px solid #000;box-shadow:inset 1px 1px 0 #ffc8d2"></div>
<div style="left:1331px;top:354.5px;height:19px;line-height:19px;width:50px;text-align:center;font-size:15px;font-weight:bold;color:#111;">15</div>
<div style="left:1388px;top:355px;width:50px;height:19px;background:#d3d3d3;border:1px solid #000;box-shadow:inset 1px 1px 0 #e6e6e6"></div>
<div style="left:1388px;top:354.5px;height:19px;line-height:19px;width:50px;text-align:center;font-size:15px;font-weight:bold;color:#111;letter-spacing:0.9px;text-indent:0.9px;">EXIT</div>
<div style="left:1445px;top:355px;width:50px;height:19px;background:#90ee90;border:1px solid #000;box-shadow:inset 1px 1px 0 #a4ffa4"></div>
<div style="left:1445px;top:354.5px;height:19px;line-height:19px;width:50px;text-align:center;font-size:15px;font-weight:bold;color:#111;">15</div>
<div style="left:7px;top:378px;width:57px;height:24px;background:#fdf6e6"></div>
<div style="left:65px;top:378px;width:591px;height:24px;background:#fdf6e6"></div>
<div style="left:7px;top:402px;width:1510px;height:1px;background:#cfcfcf"></div>
<div style="left:7px;top:380.5px;height:20px;line-height:20px;width:57px;text-align:center;font-size:14.4px;color:#222">-1000</div>
<div style="left:65px;top:380.5px;height:20px;line-height:20px;width:99px;text-align:center;font-size:14.4px;color:#222">1,51,230</div>
<div style="left:534px;top:380.5px;height:20px;line-height:20px;width:52px;text-align:center;font-size:14.4px;color:#222">51500</div>
<div style="left:587px;top:380.5px;height:20px;line-height:20px;width:69px;text-align:center;font-size:14.4px;color:#222">1,061.75</div>
<div style="left:657px;top:380.5px;height:20px;line-height:20px;width:69px;text-align:center;font-size:14.4px;color:#222">47.25</div>
<div style="left:727px;top:380.5px;height:20px;line-height:20px;width:52px;text-align:center;font-size:14.4px;color:#222">51500</div>
<div style="left:1149px;top:380.5px;height:20px;line-height:20px;width:99px;text-align:center;font-size:14.4px;color:#222">13,67,535</div>
<div style="left:1249px;top:380.5px;height:20px;line-height:20px;width:78px;text-align:center;font-size:14.4px;color:#222">1,109.00</div>
<div style="left:309px;top:380px;width:50px;height:19px;background:#90ee90;border:1px solid #000;box-shadow:inset 1px 1px 0 #a4ffa4"></div>
<div style="left:309px;top:379.5px;height:19px;line-height:19px;width:50px;text-align:center;font-size:15px;font-weight:bold;color:#111;">15</div>
<div style="left:366px;top:380px;width:50px;height:19px;background:#d3d3d3;border:1px solid #000;box-shadow:inset 1px 1px 0 #e6e6e6"></div>
<div style="left:366px;top:379.5px;height:19px;line-height:19px;width:50px;text-align:center;font-size:15px;font-weight:bold;color:#111;letter-spacing:0.9px;text-indent:0.9px;">EXIT</div>
<div style="left:423px;top:380px;width:50px;height:19px;background:#ffb6c1;border:1px solid #000;box-shadow:inset 1px 1px 0 #ffc8d2"></div>
<div style="left:423px;top:379.5px;height:19px;line-height:19px;width:50px;text-align:center;font-size:15px;font-weight:bold;color:#111;">15</div>
<div style="left:480px;top:380px;width:50px;height:19px;background:#f0f0f0;border:1px solid #000;box-shadow:inset 1px 1px 0 #ffffff"></div>
<div style="left:480px;top:379.5px;height:19px;line-height:19px;width:50px;text-align:center;font-size:15px;font-weight:bold;color:#111;letter-spacing:0.5px;text-indent:0.5px;">50%</div>
<div style="left:783px;top:380px;width:50px;height:19px;background:#f0f0f0;border:1px solid #000;box-shadow:inset 1px 1px 0 #ffffff"></div>
<div style="left:783px;top:379.5px;height:19px;line-height:19px;width:50px;text-align:center;font-size:15px;font-weight:bold;color:#111;letter-spacing:0.5px;text-indent:0.5px;">50%</div>
<div style="left:840px;top:380px;width:50px;height:19px;background:#ffb6c1;border:1px solid #000;box-shadow:inset 1px 1px 0 #ffc8d2"></div>
<div style="left:840px;top:379.5px;height:19px;line-height:19px;width:50px;text-align:center;font-size:15px;font-weight:bold;color:#111;">15</div>
<div style="left:897px;top:380px;width:50px;height:19px;background:#d3d3d3;border:1px solid #000;box-shadow:inset 1px 1px 0 #e6e6e6"></div>
<div style="left:897px;top:379.5px;height:19px;line-height:19px;width:50px;text-align:center;font-size:15px;font-weight:bold;color:#111;letter-spacing:0.9px;text-indent:0.9px;">EXIT</div>
<div style="left:954px;top:380px;width:50px;height:19px;background:#90ee90;border:1px solid #000;box-shadow:inset 1px 1px 0 #a4ffa4"></div>
<div style="left:954px;top:379.5px;height:19px;line-height:19px;width:50px;text-align:center;font-size:15px;font-weight:bold;color:#111;">15</div>
<div style="left:1331px;top:380px;width:50px;height:19px;background:#ffb6c1;border:1px solid #000;box-shadow:inset 1px 1px 0 #ffc8d2"></div>
<div style="left:1331px;top:379.5px;height:19px;line-height:19px;width:50px;text-align:center;font-size:15px;font-weight:bold;color:#111;">15</div>
<div style="left:1388px;top:380px;width:50px;height:19px;background:#d3d3d3;border:1px solid #000;box-shadow:inset 1px 1px 0 #e6e6e6"></div>
<div style="left:1388px;top:379.5px;height:19px;line-height:19px;width:50px;text-align:center;font-size:15px;font-weight:bold;color:#111;letter-spacing:0.9px;text-indent:0.9px;">EXIT</div>
<div style="left:1445px;top:380px;width:50px;height:19px;background:#90ee90;border:1px solid #000;box-shadow:inset 1px 1px 0 #a4ffa4"></div>
<div style="left:1445px;top:379.5px;height:19px;line-height:19px;width:50px;text-align:center;font-size:15px;font-weight:bold;color:#111;">15</div>
<div style="left:7px;top:403px;width:57px;height:24px;background:#fdf6e6"></div>
<div style="left:65px;top:403px;width:591px;height:24px;background:#87ceeb"></div>
<div style="left:7px;top:427px;width:1510px;height:1px;background:#cfcfcf"></div>
<div style="left:7px;top:405.5px;height:20px;line-height:20px;width:57px;text-align:center;font-size:14.4px;color:#222">-900</div>
<div style="left:65px;top:405.5px;height:20px;line-height:20px;width:99px;text-align:center;font-size:14.4px;color:#222">55,020</div>
<div style="left:165px;top:406.0px;height:20px;line-height:20px;width:62px;text-align:center;font-size:15px;letter-spacing:0.6px;text-indent:0.6px;font-weight:bold;color:#f00">-138.00</div>
<div style="left:228px;top:406.0px;height:20px;line-height:20px;width:77px;text-align:center;font-size:15px;letter-spacing:0.6px;text-indent:0.6px;font-weight:bold;color:#008000">15</div>
<div style="left:534px;top:405.5px;height:20px;line-height:20px;width:52px;text-align:center;font-size:14.4px;color:#222">51600</div>
<div style="left:587px;top:405.5px;height:20px;line-height:20px;width:69px;text-align:center;font-size:14.4px;color:#222">974.00</div>
<div style="left:657px;top:405.5px;height:20px;line-height:20px;width:69px;text-align:center;font-size:14.4px;color:#222">57.30</div>
<div style="left:727px;top:405.5px;height:20px;line-height:20px;width:52px;text-align:center;font-size:14.4px;color:#222">51600</div>
<div style="left:1149px;top:405.5px;height:20px;line-height:20px;width:99px;text-align:center;font-size:14.4px;color:#222">5,99,055</div>
<div style="left:1249px;top:405.5px;height:20px;line-height:20px;width:78px;text-align:center;font-size:14.4px;color:#222">1,031.30</div>
<div style="left:309px;top:405px;width:50px;height:19px;background:#90ee90;border:1px solid #000;box-shadow:inset 1px 1px 0 #a4ffa4"></div>
<div style="left:309px;top:404.5px;height:19px;line-height:19px;width:50px;text-align:center;font-size:15px;font-weight:bold;color:#111;">15</div>
<div style="left:366px;top:405px;width:50px;height:19px;background:#d3d3d3;border:1px solid #000;box-shadow:inset 1px 1px 0 #e6e6e6"></div>
<div style="left:366px;top:404.5px;height:19px;line-height:19px;width:50px;text-align:center;font-size:15px;font-weight:bold;color:#111;letter-spacing:0.9px;text-indent:0.9px;">EXIT</div>
<div style="left:423px;top:405px;width:50px;height:19px;background:#ffb6c1;border:1px solid #000;box-shadow:inset 1px 1px 0 #ffc8d2"></div>
<div style="left:423px;top:404.5px;height:19px;line-height:19px;width:50px;text-align:center;font-size:15px;font-weight:bold;color:#111;">15</div>
<div style="left:480px;top:405px;width:50px;height:19px;background:#f0f0f0;border:1px solid #000;box-shadow:inset 1px 1px 0 #ffffff"></div>
<div style="left:480px;top:404.5px;height:19px;line-height:19px;width:50px;text-align:center;font-size:15px;font-weight:bold;color:#111;letter-spacing:0.5px;text-indent:0.5px;">50%</div>
<div style="left:783px;top:405px;width:50px;height:19px;background:#f0f0f0;border:1px solid #000;box-shadow:inset 1px 1px 0 #ffffff"></div>
<div style="left:783px;top:404.5px;height:19px;line-height:19px;width:50px;text-align:center;font-size:15px;font-weight:bold;color:#111;letter-spacing:0.5px;text-indent:0.5px;">50%</div>
<div style="left:840px;top:405px;width:50px;height:19px;background:#ffb6c1;border:1px solid #000;box-shadow:inset 1px 1px 0 #ffc8d2"></div>
<div style="left:840px;top:404.5px;height:19px;line-height:19px;width:50px;text-align:center;font-size:15px;font-weight:bold;color:#111;">15</div>
<div style="left:897px;top:405px;width:50px;height:19px;background:#d3d3d3;border:1px solid #000;box-shadow:inset 1px 1px 0 #e6e6e6"></div>
<div style="left:897px;top:404.5px;height:19px;line-height:19px;width:50px;text-align:center;font-size:15px;font-weight:bold;color:#111;letter-spacing:0.9px;text-indent:0.9px;">EXIT</div>
<div style="left:954px;top:405px;width:50px;height:19px;background:#90ee90;border:1px solid #000;box-shadow:inset 1px 1px 0 #a4ffa4"></div>
<div style="left:954px;top:404.5px;height:19px;line-height:19px;width:50px;text-align:center;font-size:15px;font-weight:bold;color:#111;">15</div>
<div style="left:1331px;top:405px;width:50px;height:19px;background:#ffb6c1;border:1px solid #000;box-shadow:inset 1px 1px 0 #ffc8d2"></div>
<div style="left:1331px;top:404.5px;height:19px;line-height:19px;width:50px;text-align:center;font-size:15px;font-weight:bold;color:#111;">15</div>
<div style="left:1388px;top:405px;width:50px;height:19px;background:#d3d3d3;border:1px solid #000;box-shadow:inset 1px 1px 0 #e6e6e6"></div>
<div style="left:1388px;top:404.5px;height:19px;line-height:19px;width:50px;text-align:center;font-size:15px;font-weight:bold;color:#111;letter-spacing:0.9px;text-indent:0.9px;">EXIT</div>
<div style="left:1445px;top:405px;width:50px;height:19px;background:#90ee90;border:1px solid #000;box-shadow:inset 1px 1px 0 #a4ffa4"></div>
<div style="left:1445px;top:404.5px;height:19px;line-height:19px;width:50px;text-align:center;font-size:15px;font-weight:bold;color:#111;">15</div>
<div style="left:7px;top:428px;width:57px;height:24px;background:#fdf6e6"></div>
<div style="left:65px;top:428px;width:591px;height:24px;background:#fdf6e6"></div>
<div style="left:7px;top:452px;width:1510px;height:1px;background:#cfcfcf"></div>
<div style="left:7px;top:430.5px;height:20px;line-height:20px;width:57px;text-align:center;font-size:14.4px;color:#222">-800</div>
<div style="left:65px;top:430.5px;height:20px;line-height:20px;width:99px;text-align:center;font-size:14.4px;color:#222">1,07,745</div>
<div style="left:534px;top:430.5px;height:20px;line-height:20px;width:52px;text-align:center;font-size:14.4px;color:#222">51700</div>
<div style="left:587px;top:430.5px;height:20px;line-height:20px;width:69px;text-align:center;font-size:14.4px;color:#222">880.95</div>
<div style="left:657px;top:430.5px;height:20px;line-height:20px;width:69px;text-align:center;font-size:14.4px;color:#222">69.15</div>
<div style="left:727px;top:430.5px;height:20px;line-height:20px;width:52px;text-align:center;font-size:14.4px;color:#222">51700</div>
<div style="left:1149px;top:430.5px;height:20px;line-height:20px;width:99px;text-align:center;font-size:14.4px;color:#222">7,97,985</div>
<div style="left:1249px;top:430.5px;height:20px;line-height:20px;width:78px;text-align:center;font-size:14.4px;color:#222">950.10</div>
<div style="left:309px;top:430px;width:50px;height:19px;background:#90ee90;border:1px solid #000;box-shadow:inset 1px 1px 0 #a4ffa4"></div>
<div style="left:309px;top:429.5px;height:19px;line-height:19px;width:50px;text-align:center;font-size:15px;font-weight:bold;color:#111;">15</div>
<div style="left:366px;top:430px;width:50px;height:19px;background:#d3d3d3;border:1px solid #000;box-shadow:inset 1px 1px 0 #e6e6e6"></div>
<div style="left:366px;top:429.5px;height:19px;line-height:19px;width:50px;text-align:center;font-size:15px;font-weight:bold;color:#111;letter-spacing:0.9px;text-indent:0.9px;">EXIT</div>
<div style="left:423px;top:430px;width:50px;height:19px;background:#ffb6c1;border:1px solid #000;box-shadow:inset 1px 1px 0 #ffc8d2"></div>
<div style="left:423px;top:429.5px;height:19px;line-height:19px;width:50px;text-align:center;font-size:15px;font-weight:bold;color:#111;">15</div>
<div style="left:480px;top:430px;width:50px;height:19px;background:#f0f0f0;border:1px solid #000;box-shadow:inset 1px 1px 0 #ffffff"></div>
<div style="left:480px;top:429.5px;height:19px;line-height:19px;width:50px;text-align:center;font-size:15px;font-weight:bold;color:#111;letter-spacing:0.5px;text-indent:0.5px;">50%</div>
<div style="left:783px;top:430px;width:50px;height:19px;background:#f0f0f0;border:1px solid #000;box-shadow:inset 1px 1px 0 #ffffff"></div>
<div style="left:783px;top:429.5px;height:19px;line-height:19px;width:50px;text-align:center;font-size:15px;font-weight:bold;color:#111;letter-spacing:0.5px;text-indent:0.5px;">50%</div>
<div style="left:840px;top:430px;width:50px;height:19px;background:#ffb6c1;border:1px solid #000;box-shadow:inset 1px 1px 0 #ffc8d2"></div>
<div style="left:840px;top:429.5px;height:19px;line-height:19px;width:50px;text-align:center;font-size:15px;font-weight:bold;color:#111;">15</div>
<div style="left:897px;top:430px;width:50px;height:19px;background:#d3d3d3;border:1px solid #000;box-shadow:inset 1px 1px 0 #e6e6e6"></div>
<div style="left:897px;top:429.5px;height:19px;line-height:19px;width:50px;text-align:center;font-size:15px;font-weight:bold;color:#111;letter-spacing:0.9px;text-indent:0.9px;">EXIT</div>
<div style="left:954px;top:430px;width:50px;height:19px;background:#90ee90;border:1px solid #000;box-shadow:inset 1px 1px 0 #a4ffa4"></div>
<div style="left:954px;top:429.5px;height:19px;line-height:19px;width:50px;text-align:center;font-size:15px;font-weight:bold;color:#111;">15</div>
<div style="left:1331px;top:430px;width:50px;height:19px;background:#ffb6c1;border:1px solid #000;box-shadow:inset 1px 1px 0 #ffc8d2"></div>
<div style="left:1331px;top:429.5px;height:19px;line-height:19px;width:50px;text-align:center;font-size:15px;font-weight:bold;color:#111;">15</div>
<div style="left:1388px;top:430px;width:50px;height:19px;background:#d3d3d3;border:1px solid #000;box-shadow:inset 1px 1px 0 #e6e6e6"></div>
<div style="left:1388px;top:429.5px;height:19px;line-height:19px;width:50px;text-align:center;font-size:15px;font-weight:bold;color:#111;letter-spacing:0.9px;text-indent:0.9px;">EXIT</div>
<div style="left:1445px;top:430px;width:50px;height:19px;background:#90ee90;border:1px solid #000;box-shadow:inset 1px 1px 0 #a4ffa4"></div>
<div style="left:1445px;top:429.5px;height:19px;line-height:19px;width:50px;text-align:center;font-size:15px;font-weight:bold;color:#111;">15</div>
<div style="left:7px;top:453px;width:57px;height:24px;background:#fdf6e6"></div>
<div style="left:65px;top:453px;width:591px;height:24px;background:#fdf6e6"></div>
<div style="left:7px;top:477px;width:1510px;height:1px;background:#cfcfcf"></div>
<div style="left:7px;top:455.5px;height:20px;line-height:20px;width:57px;text-align:center;font-size:14.4px;color:#222">-700</div>
<div style="left:65px;top:455.5px;height:20px;line-height:20px;width:99px;text-align:center;font-size:14.4px;color:#222">1,63,890</div>
<div style="left:534px;top:455.5px;height:20px;line-height:20px;width:52px;text-align:center;font-size:14.4px;color:#222">51800</div>
<div style="left:587px;top:455.5px;height:20px;line-height:20px;width:69px;text-align:center;font-size:14.4px;color:#222">800.10</div>
<div style="left:657px;top:455.5px;height:20px;line-height:20px;width:69px;text-align:center;font-size:14.4px;color:#222">83.55</div>
<div style="left:727px;top:455.5px;height:20px;line-height:20px;width:52px;text-align:center;font-size:14.4px;color:#222">51800</div>
<div style="left:1149px;top:455.5px;height:20px;line-height:20px;width:99px;text-align:center;font-size:14.4px;color:#222">10,30,905</div>
<div style="left:1249px;top:455.5px;height:20px;line-height:20px;width:78px;text-align:center;font-size:14.4px;color:#222">883.65</div>
<div style="left:309px;top:455px;width:50px;height:19px;background:#90ee90;border:1px solid #000;box-shadow:inset 1px 1px 0 #a4ffa4"></div>
<div style="left:309px;top:454.5px;height:19px;line-height:19px;width:50px;text-align:center;font-size:15px;font-weight:bold;color:#111;">15</div>
<div style="left:366px;top:455px;width:50px;height:19px;background:#d3d3d3;border:1px solid #000;box-shadow:inset 1px 1px 0 #e6e6e6"></div>
<div style="left:366px;top:454.5px;height:19px;line-height:19px;width:50px;text-align:center;font-size:15px;font-weight:bold;color:#111;letter-spacing:0.9px;text-indent:0.9px;">EXIT</div>
<div style="left:423px;top:455px;width:50px;height:19px;background:#ffb6c1;border:1px solid #000;box-shadow:inset 1px 1px 0 #ffc8d2"></div>
<div style="left:423px;top:454.5px;height:19px;line-height:19px;width:50px;text-align:center;font-size:15px;font-weight:bold;color:#111;">15</div>
<div style="left:480px;top:455px;width:50px;height:19px;background:#f0f0f0;border:1px solid #000;box-shadow:inset 1px 1px 0 #ffffff"></div>
<div style="left:480px;top:454.5px;height:19px;line-height:19px;width:50px;text-align:center;font-size:15px;font-weight:bold;color:#111;letter-spacing:0.5px;text-indent:0.5px;">50%</div>
<div style="left:783px;top:455px;width:50px;height:19px;background:#f0f0f0;border:1px solid #000;box-shadow:inset 1px 1px 0 #ffffff"></div>
<div style="left:783px;top:454.5px;height:19px;line-height:19px;width:50px;text-align:center;font-size:15px;font-weight:bold;color:#111;letter-spacing:0.5px;text-indent:0.5px;">50%</div>
<div style="left:840px;top:455px;width:50px;height:19px;background:#ffb6c1;border:1px solid #000;box-shadow:inset 1px 1px 0 #ffc8d2"></div>
<div style="left:840px;top:454.5px;height:19px;line-height:19px;width:50px;text-align:center;font-size:15px;font-weight:bold;color:#111;">15</div>
<div style="left:897px;top:455px;width:50px;height:19px;background:#d3d3d3;border:1px solid #000;box-shadow:inset 1px 1px 0 #e6e6e6"></div>
<div style="left:897px;top:454.5px;height:19px;line-height:19px;width:50px;text-align:center;font-size:15px;font-weight:bold;color:#111;letter-spacing:0.9px;text-indent:0.9px;">EXIT</div>
<div style="left:954px;top:455px;width:50px;height:19px;background:#90ee90;border:1px solid #000;box-shadow:inset 1px 1px 0 #a4ffa4"></div>
<div style="left:954px;top:454.5px;height:19px;line-height:19px;width:50px;text-align:center;font-size:15px;font-weight:bold;color:#111;">15</div>
<div style="left:1331px;top:455px;width:50px;height:19px;background:#ffb6c1;border:1px solid #000;box-shadow:inset 1px 1px 0 #ffc8d2"></div>
<div style="left:1331px;top:454.5px;height:19px;line-height:19px;width:50px;text-align:center;font-size:15px;font-weight:bold;color:#111;">15</div>
<div style="left:1388px;top:455px;width:50px;height:19px;background:#d3d3d3;border:1px solid #000;box-shadow:inset 1px 1px 0 #e6e6e6"></div>
<div style="left:1388px;top:454.5px;height:19px;line-height:19px;width:50px;text-align:center;font-size:15px;font-weight:bold;color:#111;letter-spacing:0.9px;text-indent:0.9px;">EXIT</div>
<div style="left:1445px;top:455px;width:50px;height:19px;background:#90ee90;border:1px solid #000;box-shadow:inset 1px 1px 0 #a4ffa4"></div>
<div style="left:1445px;top:454.5px;height:19px;line-height:19px;width:50px;text-align:center;font-size:15px;font-weight:bold;color:#111;">15</div>
<div style="left:7px;top:478px;width:57px;height:24px;background:#fdf6e6"></div>
<div style="left:65px;top:478px;width:591px;height:24px;background:#fdf6e6"></div>
<div style="left:7px;top:502px;width:1510px;height:1px;background:#cfcfcf"></div>
<div style="left:7px;top:480.5px;height:20px;line-height:20px;width:57px;text-align:center;font-size:14.4px;color:#222">-600</div>
<div style="left:65px;top:480.5px;height:20px;line-height:20px;width:99px;text-align:center;font-size:14.4px;color:#222">4,10,550</div>
<div style="left:534px;top:480.5px;height:20px;line-height:20px;width:52px;text-align:center;font-size:14.4px;color:#222">51900</div>
<div style="left:587px;top:480.5px;height:20px;line-height:20px;width:69px;text-align:center;font-size:14.4px;color:#222">711.00</div>
<div style="left:657px;top:480.5px;height:20px;line-height:20px;width:69px;text-align:center;font-size:14.4px;color:#222">100.75</div>
<div style="left:727px;top:480.5px;height:20px;line-height:20px;width:52px;text-align:center;font-size:14.4px;color:#222">51900</div>
<div style="left:1149px;top:480.5px;height:20px;line-height:20px;width:99px;text-align:center;font-size:14.4px;color:#222">12,10,110</div>
<div style="left:1249px;top:480.5px;height:20px;line-height:20px;width:78px;text-align:center;font-size:14.4px;color:#222">811.75</div>
<div style="left:309px;top:480px;width:50px;height:19px;background:#90ee90;border:1px solid #000;box-shadow:inset 1px 1px 0 #a4ffa4"></div>
<div style="left:309px;top:479.5px;height:19px;line-height:19px;width:50px;text-align:center;font-size:15px;font-weight:bold;color:#111;">15</div>
<div style="left:366px;top:480px;width:50px;height:19px;background:#d3d3d3;border:1px solid #000;box-shadow:inset 1px 1px 0 #e6e6e6"></div>
<div style="left:366px;top:479.5px;height:19px;line-height:19px;width:50px;text-align:center;font-size:15px;font-weight:bold;color:#111;letter-spacing:0.9px;text-indent:0.9px;">EXIT</div>
<div style="left:423px;top:480px;width:50px;height:19px;background:#ffb6c1;border:1px solid #000;box-shadow:inset 1px 1px 0 #ffc8d2"></div>
<div style="left:423px;top:479.5px;height:19px;line-height:19px;width:50px;text-align:center;font-size:15px;font-weight:bold;color:#111;">15</div>
<div style="left:480px;top:480px;width:50px;height:19px;background:#f0f0f0;border:1px solid #000;box-shadow:inset 1px 1px 0 #ffffff"></div>
<div style="left:480px;top:479.5px;height:19px;line-height:19px;width:50px;text-align:center;font-size:15px;font-weight:bold;color:#111;letter-spacing:0.5px;text-indent:0.5px;">50%</div>
<div style="left:783px;top:480px;width:50px;height:19px;background:#f0f0f0;border:1px solid #000;box-shadow:inset 1px 1px 0 #ffffff"></div>
<div style="left:783px;top:479.5px;height:19px;line-height:19px;width:50px;text-align:center;font-size:15px;font-weight:bold;color:#111;letter-spacing:0.5px;text-indent:0.5px;">50%</div>
<div style="left:840px;top:480px;width:50px;height:19px;background:#ffb6c1;border:1px solid #000;box-shadow:inset 1px 1px 0 #ffc8d2"></div>
<div style="left:840px;top:479.5px;height:19px;line-height:19px;width:50px;text-align:center;font-size:15px;font-weight:bold;color:#111;">15</div>
<div style="left:897px;top:480px;width:50px;height:19px;background:#d3d3d3;border:1px solid #000;box-shadow:inset 1px 1px 0 #e6e6e6"></div>
<div style="left:897px;top:479.5px;height:19px;line-height:19px;width:50px;text-align:center;font-size:15px;font-weight:bold;color:#111;letter-spacing:0.9px;text-indent:0.9px;">EXIT</div>
<div style="left:954px;top:480px;width:50px;height:19px;background:#90ee90;border:1px solid #000;box-shadow:inset 1px 1px 0 #a4ffa4"></div>
<div style="left:954px;top:479.5px;height:19px;line-height:19px;width:50px;text-align:center;font-size:15px;font-weight:bold;color:#111;">15</div>
<div style="left:1331px;top:480px;width:50px;height:19px;background:#ffb6c1;border:1px solid #000;box-shadow:inset 1px 1px 0 #ffc8d2"></div>
<div style="left:1331px;top:479.5px;height:19px;line-height:19px;width:50px;text-align:center;font-size:15px;font-weight:bold;color:#111;">15</div>
<div style="left:1388px;top:480px;width:50px;height:19px;background:#d3d3d3;border:1px solid #000;box-shadow:inset 1px 1px 0 #e6e6e6"></div>
<div style="left:1388px;top:479.5px;height:19px;line-height:19px;width:50px;text-align:center;font-size:15px;font-weight:bold;color:#111;letter-spacing:0.9px;text-indent:0.9px;">EXIT</div>
<div style="left:1445px;top:480px;width:50px;height:19px;background:#90ee90;border:1px solid #000;box-shadow:inset 1px 1px 0 #a4ffa4"></div>
<div style="left:1445px;top:479.5px;height:19px;line-height:19px;width:50px;text-align:center;font-size:15px;font-weight:bold;color:#111;">15</div>
<div style="left:7px;top:503px;width:57px;height:24px;background:#fdf6e6"></div>
<div style="left:65px;top:503px;width:591px;height:24px;background:#fdf6e6"></div>
<div style="left:7px;top:527px;width:1510px;height:1px;background:#cfcfcf"></div>
<div style="left:7px;top:505.5px;height:20px;line-height:20px;width:57px;text-align:center;font-size:14.4px;color:#222">-500</div>
<div style="left:65px;top:505.5px;height:20px;line-height:20px;width:99px;text-align:center;font-size:14.4px;color:#222">8,93,955</div>
<div style="left:534px;top:505.5px;height:20px;line-height:20px;width:52px;text-align:center;font-size:14.4px;color:#222">52000</div>
<div style="left:587px;top:505.5px;height:20px;line-height:20px;width:69px;text-align:center;font-size:14.4px;color:#222">630.70</div>
<div style="left:657px;top:505.5px;height:20px;line-height:20px;width:69px;text-align:center;font-size:14.4px;color:#222">121.20</div>
<div style="left:727px;top:505.5px;height:20px;line-height:20px;width:52px;text-align:center;font-size:14.4px;color:#222">52000</div>
<div style="left:1149px;top:505.5px;height:20px;line-height:20px;width:99px;text-align:center;font-size:14.4px;color:#222">23,41,170</div>
<div style="left:1249px;top:505.5px;height:20px;line-height:20px;width:78px;text-align:center;font-size:14.4px;color:#222">752.30</div>
<div style="left:309px;top:505px;width:50px;height:19px;background:#90ee90;border:1px solid #000;box-shadow:inset 1px 1px 0 #a4ffa4"></div>
<div style="left:309px;top:504.5px;height:19px;line-height:19px;width:50px;text-align:center;font-size:15px;font-weight:bold;color:#111;">15</div>
<div style="left:366px;top:505px;width:50px;height:19px;background:#d3d3d3;border:1px solid #000;box-shadow:inset 1px 1px 0 #e6e6e6"></div>
<div style="left:366px;top:504.5px;height:19px;line-height:19px;width:50px;text-align:center;font-size:15px;font-weight:bold;color:#111;letter-spacing:0.9px;text-indent:0.9px;">EXIT</div>
<div style="left:423px;top:505px;width:50px;height:19px;background:#ffb6c1;border:1px solid #000;box-shadow:inset 1px 1px 0 #ffc8d2"></div>
<div style="left:423px;top:504.5px;height:19px;line-height:19px;width:50px;text-align:center;font-size:15px;font-weight:bold;color:#111;">15</div>
<div style="left:480px;top:505px;width:50px;height:19px;background:#f0f0f0;border:1px solid #000;box-shadow:inset 1px 1px 0 #ffffff"></div>
<div style="left:480px;top:504.5px;height:19px;line-height:19px;width:50px;text-align:center;font-size:15px;font-weight:bold;color:#111;letter-spacing:0.5px;text-indent:0.5px;">50%</div>
<div style="left:783px;top:505px;width:50px;height:19px;background:#f0f0f0;border:1px solid #000;box-shadow:inset 1px 1px 0 #ffffff"></div>
<div style="left:783px;top:504.5px;height:19px;line-height:19px;width:50px;text-align:center;font-size:15px;font-weight:bold;color:#111;letter-spacing:0.5px;text-indent:0.5px;">50%</div>
<div style="left:840px;top:505px;width:50px;height:19px;background:#ffb6c1;border:1px solid #000;box-shadow:inset 1px 1px 0 #ffc8d2"></div>
<div style="left:840px;top:504.5px;height:19px;line-height:19px;width:50px;text-align:center;font-size:15px;font-weight:bold;color:#111;">15</div>
<div style="left:897px;top:505px;width:50px;height:19px;background:#d3d3d3;border:1px solid #000;box-shadow:inset 1px 1px 0 #e6e6e6"></div>
<div style="left:897px;top:504.5px;height:19px;line-height:19px;width:50px;text-align:center;font-size:15px;font-weight:bold;color:#111;letter-spacing:0.9px;text-indent:0.9px;">EXIT</div>
<div style="left:954px;top:505px;width:50px;height:19px;background:#90ee90;border:1px solid #000;box-shadow:inset 1px 1px 0 #a4ffa4"></div>
<div style="left:954px;top:504.5px;height:19px;line-height:19px;width:50px;text-align:center;font-size:15px;font-weight:bold;color:#111;">15</div>
<div style="left:1331px;top:505px;width:50px;height:19px;background:#ffb6c1;border:1px solid #000;box-shadow:inset 1px 1px 0 #ffc8d2"></div>
<div style="left:1331px;top:504.5px;height:19px;line-height:19px;width:50px;text-align:center;font-size:15px;font-weight:bold;color:#111;">15</div>
<div style="left:1388px;top:505px;width:50px;height:19px;background:#d3d3d3;border:1px solid #000;box-shadow:inset 1px 1px 0 #e6e6e6"></div>
<div style="left:1388px;top:504.5px;height:19px;line-height:19px;width:50px;text-align:center;font-size:15px;font-weight:bold;color:#111;letter-spacing:0.9px;text-indent:0.9px;">EXIT</div>
<div style="left:1445px;top:505px;width:50px;height:19px;background:#90ee90;border:1px solid #000;box-shadow:inset 1px 1px 0 #a4ffa4"></div>
<div style="left:1445px;top:504.5px;height:19px;line-height:19px;width:50px;text-align:center;font-size:15px;font-weight:bold;color:#111;">15</div>
<div style="left:7px;top:528px;width:57px;height:24px;background:#fdf6e6"></div>
<div style="left:65px;top:528px;width:591px;height:24px;background:#fdf6e6"></div>
<div style="left:7px;top:552px;width:1510px;height:1px;background:#cfcfcf"></div>
<div style="left:7px;top:530.5px;height:20px;line-height:20px;width:57px;text-align:center;font-size:14.4px;color:#222">-400</div>
<div style="left:65px;top:530.5px;height:20px;line-height:20px;width:99px;text-align:center;font-size:14.4px;color:#222">3,40,800</div>
<div style="left:534px;top:530.5px;height:20px;line-height:20px;width:52px;text-align:center;font-size:14.4px;color:#222">52100</div>
<div style="left:587px;top:530.5px;height:20px;line-height:20px;width:69px;text-align:center;font-size:14.4px;color:#222">556.75</div>
<div style="left:657px;top:530.5px;height:20px;line-height:20px;width:69px;text-align:center;font-size:14.4px;color:#222">146.40</div>
<div style="left:727px;top:530.5px;height:20px;line-height:20px;width:52px;text-align:center;font-size:14.4px;color:#222">52100</div>
<div style="left:1149px;top:530.5px;height:20px;line-height:20px;width:99px;text-align:center;font-size:14.4px;color:#222">8,62,935</div>
<div style="left:1249px;top:530.5px;height:20px;line-height:20px;width:78px;text-align:center;font-size:14.4px;color:#222">703.15</div>
<div style="left:309px;top:530px;width:50px;height:19px;background:#90ee90;border:1px solid #000;box-shadow:inset 1px 1px 0 #a4ffa4"></div>
<div style="left:309px;top:529.5px;height:19px;line-height:19px;width:50px;text-align:center;font-size:15px;font-weight:bold;color:#111;">15</div>
<div style="left:366px;top:530px;width:50px;height:19px;background:#d3d3d3;border:1px solid #000;box-shadow:inset 1px 1px 0 #e6e6e6"></div>
<div style="left:366px;top:529.5px;height:19px;line-height:19px;width:50px;text-align:center;font-size:15px;font-weight:bold;color:#111;letter-spacing:0.9px;text-indent:0.9px;">EXIT</div>
<div style="left:423px;top:530px;width:50px;height:19px;background:#ffb6c1;border:1px solid #000;box-shadow:inset 1px 1px 0 #ffc8d2"></div>
<div style="left:423px;top:529.5px;height:19px;line-height:19px;width:50px;text-align:center;font-size:15px;font-weight:bold;color:#111;">15</div>
<div style="left:480px;top:530px;width:50px;height:19px;background:#f0f0f0;border:1px solid #000;box-shadow:inset 1px 1px 0 #ffffff"></div>
<div style="left:480px;top:529.5px;height:19px;line-height:19px;width:50px;text-align:center;font-size:15px;font-weight:bold;color:#111;letter-spacing:0.5px;text-indent:0.5px;">50%</div>
<div style="left:783px;top:530px;width:50px;height:19px;background:#f0f0f0;border:1px solid #000;box-shadow:inset 1px 1px 0 #ffffff"></div>
<div style="left:783px;top:529.5px;height:19px;line-height:19px;width:50px;text-align:center;font-size:15px;font-weight:bold;color:#111;letter-spacing:0.5px;text-indent:0.5px;">50%</div>
<div style="left:840px;top:530px;width:50px;height:19px;background:#ffb6c1;border:1px solid #000;box-shadow:inset 1px 1px 0 #ffc8d2"></div>
<div style="left:840px;top:529.5px;height:19px;line-height:19px;width:50px;text-align:center;font-size:15px;font-weight:bold;color:#111;">15</div>
<div style="left:897px;top:530px;width:50px;height:19px;background:#d3d3d3;border:1px solid #000;box-shadow:inset 1px 1px 0 #e6e6e6"></div>
<div style="left:897px;top:529.5px;height:19px;line-height:19px;width:50px;text-align:center;font-size:15px;font-weight:bold;color:#111;letter-spacing:0.9px;text-indent:0.9px;">EXIT</div>
<div style="left:954px;top:530px;width:50px;height:19px;background:#90ee90;border:1px solid #000;box-shadow:inset 1px 1px 0 #a4ffa4"></div>
<div style="left:954px;top:529.5px;height:19px;line-height:19px;width:50px;text-align:center;font-size:15px;font-weight:bold;color:#111;">15</div>
<div style="left:1331px;top:530px;width:50px;height:19px;background:#ffb6c1;border:1px solid #000;box-shadow:inset 1px 1px 0 #ffc8d2"></div>
<div style="left:1331px;top:529.5px;height:19px;line-height:19px;width:50px;text-align:center;font-size:15px;font-weight:bold;color:#111;">15</div>
<div style="left:1388px;top:530px;width:50px;height:19px;background:#d3d3d3;border:1px solid #000;box-shadow:inset 1px 1px 0 #e6e6e6"></div>
<div style="left:1388px;top:529.5px;height:19px;line-height:19px;width:50px;text-align:center;font-size:15px;font-weight:bold;color:#111;letter-spacing:0.9px;text-indent:0.9px;">EXIT</div>
<div style="left:1445px;top:530px;width:50px;height:19px;background:#90ee90;border:1px solid #000;box-shadow:inset 1px 1px 0 #a4ffa4"></div>
<div style="left:1445px;top:529.5px;height:19px;line-height:19px;width:50px;text-align:center;font-size:15px;font-weight:bold;color:#111;">15</div>
<div style="left:7px;top:553px;width:57px;height:24px;background:#fdf6e6"></div>
<div style="left:65px;top:553px;width:591px;height:24px;background:#fdf6e6"></div>
<div style="left:7px;top:577px;width:1510px;height:1px;background:#cfcfcf"></div>
<div style="left:7px;top:555.5px;height:20px;line-height:20px;width:57px;text-align:center;font-size:14.4px;color:#222">-300</div>
<div style="left:65px;top:555.5px;height:20px;line-height:20px;width:99px;text-align:center;font-size:14.4px;color:#222">8,24,970</div>
<div style="left:534px;top:555.5px;height:20px;line-height:20px;width:52px;text-align:center;font-size:14.4px;color:#222">52200</div>
<div style="left:587px;top:555.5px;height:20px;line-height:20px;width:69px;text-align:center;font-size:14.4px;color:#222">485.55</div>
<div style="left:657px;top:555.5px;height:20px;line-height:20px;width:69px;text-align:center;font-size:14.4px;color:#222">174.85</div>
<div style="left:727px;top:555.5px;height:20px;line-height:20px;width:52px;text-align:center;font-size:14.4px;color:#222">52200</div>
<div style="left:1149px;top:555.5px;height:20px;line-height:20px;width:99px;text-align:center;font-size:14.4px;color:#222">15,18,150</div>
<div style="left:1249px;top:555.5px;height:20px;line-height:20px;width:78px;text-align:center;font-size:14.4px;color:#222">660.50</div>
<div style="left:309px;top:555px;width:50px;height:19px;background:#90ee90;border:1px solid #000;box-shadow:inset 1px 1px 0 #a4ffa4"></div>
<div style="left:309px;top:554.5px;height:19px;line-height:19px;width:50px;text-align:center;font-size:15px;font-weight:bold;color:#111;">15</div>
<div style="left:366px;top:555px;width:50px;height:19px;background:#d3d3d3;border:1px solid #000;box-shadow:inset 1px 1px 0 #e6e6e6"></div>
<div style="left:366px;top:554.5px;height:19px;line-height:19px;width:50px;text-align:center;font-size:15px;font-weight:bold;color:#111;letter-spacing:0.9px;text-indent:0.9px;">EXIT</div>
<div style="left:423px;top:555px;width:50px;height:19px;background:#ffb6c1;border:1px solid #000;box-shadow:inset 1px 1px 0 #ffc8d2"></div>
<div style="left:423px;top:554.5px;height:19px;line-height:19px;width:50px;text-align:center;font-size:15px;font-weight:bold;color:#111;">15</div>
<div style="left:480px;top:555px;width:50px;height:19px;background:#f0f0f0;border:1px solid #000;box-shadow:inset 1px 1px 0 #ffffff"></div>
<div style="left:480px;top:554.5px;height:19px;line-height:19px;width:50px;text-align:center;font-size:15px;font-weight:bold;color:#111;letter-spacing:0.5px;text-indent:0.5px;">50%</div>
<div style="left:783px;top:555px;width:50px;height:19px;background:#f0f0f0;border:1px solid #000;box-shadow:inset 1px 1px 0 #ffffff"></div>
<div style="left:783px;top:554.5px;height:19px;line-height:19px;width:50px;text-align:center;font-size:15px;font-weight:bold;color:#111;letter-spacing:0.5px;text-indent:0.5px;">50%</div>
<div style="left:840px;top:555px;width:50px;height:19px;background:#ffb6c1;border:1px solid #000;box-shadow:inset 1px 1px 0 #ffc8d2"></div>
<div style="left:840px;top:554.5px;height:19px;line-height:19px;width:50px;text-align:center;font-size:15px;font-weight:bold;color:#111;">15</div>
<div style="left:897px;top:555px;width:50px;height:19px;background:#d3d3d3;border:1px solid #000;box-shadow:inset 1px 1px 0 #e6e6e6"></div>
<div style="left:897px;top:554.5px;height:19px;line-height:19px;width:50px;text-align:center;font-size:15px;font-weight:bold;color:#111;letter-spacing:0.9px;text-indent:0.9px;">EXIT</div>
<div style="left:954px;top:555px;width:50px;height:19px;background:#90ee90;border:1px solid #000;box-shadow:inset 1px 1px 0 #a4ffa4"></div>
<div style="left:954px;top:554.5px;height:19px;line-height:19px;width:50px;text-align:center;font-size:15px;font-weight:bold;color:#111;">15</div>
<div style="left:1331px;top:555px;width:50px;height:19px;background:#ffb6c1;border:1px solid #000;box-shadow:inset 1px 1px 0 #ffc8d2"></div>
<div style="left:1331px;top:554.5px;height:19px;line-height:19px;width:50px;text-align:center;font-size:15px;font-weight:bold;color:#111;">15</div>
<div style="left:1388px;top:555px;width:50px;height:19px;background:#d3d3d3;border:1px solid #000;box-shadow:inset 1px 1px 0 #e6e6e6"></div>
<div style="left:1388px;top:554.5px;height:19px;line-height:19px;width:50px;text-align:center;font-size:15px;font-weight:bold;color:#111;letter-spacing:0.9px;text-indent:0.9px;">EXIT</div>
<div style="left:1445px;top:555px;width:50px;height:19px;background:#90ee90;border:1px solid #000;box-shadow:inset 1px 1px 0 #a4ffa4"></div>
<div style="left:1445px;top:554.5px;height:19px;line-height:19px;width:50px;text-align:center;font-size:15px;font-weight:bold;color:#111;">15</div>
<div style="left:7px;top:578px;width:57px;height:24px;background:#fdf6e6"></div>
<div style="left:65px;top:578px;width:591px;height:24px;background:#fdf6e6"></div>
<div style="left:7px;top:602px;width:1510px;height:1px;background:#cfcfcf"></div>
<div style="left:7px;top:580.5px;height:20px;line-height:20px;width:57px;text-align:center;font-size:14.4px;color:#222">-200</div>
<div style="left:65px;top:580.5px;height:20px;line-height:20px;width:99px;text-align:center;font-size:14.4px;color:#222">11,74,170</div>
<div style="left:534px;top:580.5px;height:20px;line-height:20px;width:52px;text-align:center;font-size:14.4px;color:#222">52300</div>
<div style="left:587px;top:580.5px;height:20px;line-height:20px;width:69px;text-align:center;font-size:14.4px;color:#222">418.90</div>
<div style="left:657px;top:580.5px;height:20px;line-height:20px;width:69px;text-align:center;font-size:14.4px;color:#222">208.20</div>
<div style="left:727px;top:580.5px;height:20px;line-height:20px;width:52px;text-align:center;font-size:14.4px;color:#222">52300</div>
<div style="left:1149px;top:580.5px;height:20px;line-height:20px;width:99px;text-align:center;font-size:14.4px;color:#222">14,92,830</div>
<div style="left:1249px;top:580.5px;height:20px;line-height:20px;width:78px;text-align:center;font-size:14.4px;color:#222">627.10</div>
<div style="left:309px;top:580px;width:50px;height:19px;background:#90ee90;border:1px solid #000;box-shadow:inset 1px 1px 0 #a4ffa4"></div>
<div style="left:309px;top:579.5px;height:19px;line-height:19px;width:50px;text-align:center;font-size:15px;font-weight:bold;color:#111;">15</div>
<div style="left:366px;top:580px;width:50px;height:19px;background:#d3d3d3;border:1px solid #000;box-shadow:inset 1px 1px 0 #e6e6e6"></div>
<div style="left:366px;top:579.5px;height:19px;line-height:19px;width:50px;text-align:center;font-size:15px;font-weight:bold;color:#111;letter-spacing:0.9px;text-indent:0.9px;">EXIT</div>
<div style="left:423px;top:580px;width:50px;height:19px;background:#ffb6c1;border:1px solid #000;box-shadow:inset 1px 1px 0 #ffc8d2"></div>
<div style="left:423px;top:579.5px;height:19px;line-height:19px;width:50px;text-align:center;font-size:15px;font-weight:bold;color:#111;">15</div>
<div style="left:480px;top:580px;width:50px;height:19px;background:#f0f0f0;border:1px solid #000;box-shadow:inset 1px 1px 0 #ffffff"></div>
<div style="left:480px;top:579.5px;height:19px;line-height:19px;width:50px;text-align:center;font-size:15px;font-weight:bold;color:#111;letter-spacing:0.5px;text-indent:0.5px;">50%</div>
<div style="left:783px;top:580px;width:50px;height:19px;background:#f0f0f0;border:1px solid #000;box-shadow:inset 1px 1px 0 #ffffff"></div>
<div style="left:783px;top:579.5px;height:19px;line-height:19px;width:50px;text-align:center;font-size:15px;font-weight:bold;color:#111;letter-spacing:0.5px;text-indent:0.5px;">50%</div>
<div style="left:840px;top:580px;width:50px;height:19px;background:#ffb6c1;border:1px solid #000;box-shadow:inset 1px 1px 0 #ffc8d2"></div>
<div style="left:840px;top:579.5px;height:19px;line-height:19px;width:50px;text-align:center;font-size:15px;font-weight:bold;color:#111;">15</div>
<div style="left:897px;top:580px;width:50px;height:19px;background:#d3d3d3;border:1px solid #000;box-shadow:inset 1px 1px 0 #e6e6e6"></div>
<div style="left:897px;top:579.5px;height:19px;line-height:19px;width:50px;text-align:center;font-size:15px;font-weight:bold;color:#111;letter-spacing:0.9px;text-indent:0.9px;">EXIT</div>
<div style="left:954px;top:580px;width:50px;height:19px;background:#90ee90;border:1px solid #000;box-shadow:inset 1px 1px 0 #a4ffa4"></div>
<div style="left:954px;top:579.5px;height:19px;line-height:19px;width:50px;text-align:center;font-size:15px;font-weight:bold;color:#111;">15</div>
<div style="left:1331px;top:580px;width:50px;height:19px;background:#ffb6c1;border:1px solid #000;box-shadow:inset 1px 1px 0 #ffc8d2"></div>
<div style="left:1331px;top:579.5px;height:19px;line-height:19px;width:50px;text-align:center;font-size:15px;font-weight:bold;color:#111;">15</div>
<div style="left:1388px;top:580px;width:50px;height:19px;background:#d3d3d3;border:1px solid #000;box-shadow:inset 1px 1px 0 #e6e6e6"></div>
<div style="left:1388px;top:579.5px;height:19px;line-height:19px;width:50px;text-align:center;font-size:15px;font-weight:bold;color:#111;letter-spacing:0.9px;text-indent:0.9px;">EXIT</div>
<div style="left:1445px;top:580px;width:50px;height:19px;background:#90ee90;border:1px solid #000;box-shadow:inset 1px 1px 0 #a4ffa4"></div>
<div style="left:1445px;top:579.5px;height:19px;line-height:19px;width:50px;text-align:center;font-size:15px;font-weight:bold;color:#111;">15</div>
<div style="left:7px;top:603px;width:57px;height:24px;background:#fdf6e6"></div>
<div style="left:65px;top:603px;width:591px;height:24px;background:#fdf6e6"></div>
<div style="left:7px;top:627px;width:1510px;height:1px;background:#cfcfcf"></div>
<div style="left:7px;top:605.5px;height:20px;line-height:20px;width:57px;text-align:center;font-size:14.4px;color:#222">-100</div>
<div style="left:65px;top:605.5px;height:20px;line-height:20px;width:99px;text-align:center;font-size:14.4px;color:#222">14,77,275</div>
<div style="left:534px;top:605.5px;height:20px;line-height:20px;width:52px;text-align:center;font-size:14.4px;color:#222">52400</div>
<div style="left:587px;top:605.5px;height:20px;line-height:20px;width:69px;text-align:center;font-size:14.4px;color:#222">357.90</div>
<div style="left:657px;top:605.5px;height:20px;line-height:20px;width:69px;text-align:center;font-size:14.4px;color:#222">247.00</div>
<div style="left:727px;top:605.5px;height:20px;line-height:20px;width:52px;text-align:center;font-size:14.4px;color:#222">52400</div>
<div style="left:1149px;top:605.5px;height:20px;line-height:20px;width:99px;text-align:center;font-size:14.4px;color:#222">12,32,670</div>
<div style="left:1249px;top:605.5px;height:20px;line-height:20px;width:78px;text-align:center;font-size:14.4px;color:#222">604.90</div>
<div style="left:309px;top:605px;width:50px;height:19px;background:#90ee90;border:1px solid #000;box-shadow:inset 1px 1px 0 #a4ffa4"></div>
<div style="left:309px;top:604.5px;height:19px;line-height:19px;width:50px;text-align:center;font-size:15px;font-weight:bold;color:#111;">15</div>
<div style="left:366px;top:605px;width:50px;height:19px;background:#d3d3d3;border:1px solid #000;box-shadow:inset 1px 1px 0 #e6e6e6"></div>
<div style="left:366px;top:604.5px;height:19px;line-height:19px;width:50px;text-align:center;font-size:15px;font-weight:bold;color:#111;letter-spacing:0.9px;text-indent:0.9px;">EXIT</div>
<div style="left:423px;top:605px;width:50px;height:19px;background:#ffb6c1;border:1px solid #000;box-shadow:inset 1px 1px 0 #ffc8d2"></div>
<div style="left:423px;top:604.5px;height:19px;line-height:19px;width:50px;text-align:center;font-size:15px;font-weight:bold;color:#111;">15</div>
<div style="left:480px;top:605px;width:50px;height:19px;background:#f0f0f0;border:1px solid #000;box-shadow:inset 1px 1px 0 #ffffff"></div>
<div style="left:480px;top:604.5px;height:19px;line-height:19px;width:50px;text-align:center;font-size:15px;font-weight:bold;color:#111;letter-spacing:0.5px;text-indent:0.5px;">50%</div>
<div style="left:783px;top:605px;width:50px;height:19px;background:#f0f0f0;border:1px solid #000;box-shadow:inset 1px 1px 0 #ffffff"></div>
<div style="left:783px;top:604.5px;height:19px;line-height:19px;width:50px;text-align:center;font-size:15px;font-weight:bold;color:#111;letter-spacing:0.5px;text-indent:0.5px;">50%</div>
<div style="left:840px;top:605px;width:50px;height:19px;background:#ffb6c1;border:1px solid #000;box-shadow:inset 1px 1px 0 #ffc8d2"></div>
<div style="left:840px;top:604.5px;height:19px;line-height:19px;width:50px;text-align:center;font-size:15px;font-weight:bold;color:#111;">15</div>
<div style="left:897px;top:605px;width:50px;height:19px;background:#d3d3d3;border:1px solid #000;box-shadow:inset 1px 1px 0 #e6e6e6"></div>
<div style="left:897px;top:604.5px;height:19px;line-height:19px;width:50px;text-align:center;font-size:15px;font-weight:bold;color:#111;letter-spacing:0.9px;text-indent:0.9px;">EXIT</div>
<div style="left:954px;top:605px;width:50px;height:19px;background:#90ee90;border:1px solid #000;box-shadow:inset 1px 1px 0 #a4ffa4"></div>
<div style="left:954px;top:604.5px;height:19px;line-height:19px;width:50px;text-align:center;font-size:15px;font-weight:bold;color:#111;">15</div>
<div style="left:1331px;top:605px;width:50px;height:19px;background:#ffb6c1;border:1px solid #000;box-shadow:inset 1px 1px 0 #ffc8d2"></div>
<div style="left:1331px;top:604.5px;height:19px;line-height:19px;width:50px;text-align:center;font-size:15px;font-weight:bold;color:#111;">15</div>
<div style="left:1388px;top:605px;width:50px;height:19px;background:#d3d3d3;border:1px solid #000;box-shadow:inset 1px 1px 0 #e6e6e6"></div>
<div style="left:1388px;top:604.5px;height:19px;line-height:19px;width:50px;text-align:center;font-size:15px;font-weight:bold;color:#111;letter-spacing:0.9px;text-indent:0.9px;">EXIT</div>
<div style="left:1445px;top:605px;width:50px;height:19px;background:#90ee90;border:1px solid #000;box-shadow:inset 1px 1px 0 #a4ffa4"></div>
<div style="left:1445px;top:604.5px;height:19px;line-height:19px;width:50px;text-align:center;font-size:15px;font-weight:bold;color:#111;">15</div>
<div style="left:7px;top:628px;width:57px;height:24px;background:#fdf6e6"></div>
<div style="left:65px;top:628px;width:591px;height:24px;background:#ffb6c1"></div>
<div style="left:657px;top:628px;width:591px;height:24px;background:#ffb6c1"></div>
<div style="left:7px;top:652px;width:1510px;height:1px;background:#cfcfcf"></div>
<div style="left:7px;top:630.5px;height:20px;line-height:20px;width:57px;text-align:center;font-size:15px;letter-spacing:0.6px;text-indent:0.6px;font-weight:bold;color:#1a1a1a">0</div>
<div style="left:65px;top:630.5px;height:20px;line-height:20px;width:99px;text-align:center;font-size:15px;letter-spacing:0.6px;text-indent:0.6px;font-weight:bold;color:#1a1a1a">27,41,700</div>
<div style="left:165px;top:631.0px;height:20px;line-height:20px;width:62px;text-align:center;font-size:15px;letter-spacing:0.6px;text-indent:0.6px;font-weight:bold;color:#008000">201.75</div>
<div style="left:228px;top:631.0px;height:20px;line-height:20px;width:77px;text-align:center;font-size:15px;letter-spacing:0.6px;text-indent:0.6px;font-weight:bold;color:#f00">-30</div>
<div style="left:534px;top:630.5px;height:20px;line-height:20px;width:52px;text-align:center;font-size:15px;letter-spacing:0.6px;text-indent:0.6px;font-weight:bold;color:#1a1a1a">52500</div>
<div style="left:587px;top:630.5px;height:20px;line-height:20px;width:69px;text-align:center;font-size:15px;letter-spacing:0.6px;text-indent:0.6px;font-weight:bold;color:#1a1a1a">301.60</div>
<div style="left:657px;top:630.5px;height:20px;line-height:20px;width:69px;text-align:center;font-size:15px;letter-spacing:0.6px;text-indent:0.6px;font-weight:bold;color:#1a1a1a">290.00</div>
<div style="left:727px;top:630.5px;height:20px;line-height:20px;width:52px;text-align:center;font-size:15px;letter-spacing:0.6px;text-indent:0.6px;font-weight:bold;color:#1a1a1a">52500</div>
<div style="left:1008px;top:631.0px;height:20px;line-height:20px;width:77px;text-align:center;font-size:15px;letter-spacing:0.6px;text-indent:0.6px;font-weight:bold;color:#f00">-30</div>
<div style="left:1086px;top:631.0px;height:20px;line-height:20px;width:62px;text-align:center;font-size:15px;letter-spacing:0.6px;text-indent:0.6px;font-weight:bold;color:#f00">-174.00</div>
<div style="left:1149px;top:630.5px;height:20px;line-height:20px;width:99px;text-align:center;font-size:15px;letter-spacing:0.6px;text-indent:0.6px;font-weight:bold;color:#1a1a1a">18,03,930</div>
<div style="left:1249px;top:630.5px;height:20px;line-height:20px;width:78px;text-align:center;font-size:15px;letter-spacing:0.6px;text-indent:0.6px;font-weight:bold;color:#1a1a1a">591.60</div>
<div style="left:309px;top:630px;width:50px;height:19px;background:#90ee90;border:1px solid #000;box-shadow:inset 1px 1px 0 #a4ffa4"></div>
<div style="left:309px;top:629.5px;height:19px;line-height:19px;width:50px;text-align:center;font-size:15px;font-weight:bold;color:#111;">15</div>
<div style="left:366px;top:630px;width:50px;height:19px;background:#d3d3d3;border:1px solid #000;box-shadow:inset 1px 1px 0 #e6e6e6"></div>
<div style="left:366px;top:629.5px;height:19px;line-height:19px;width:50px;text-align:center;font-size:15px;font-weight:bold;color:#111;letter-spacing:0.9px;text-indent:0.9px;">EXIT</div>
<div style="left:423px;top:630px;width:50px;height:19px;background:#ffb6c1;border:1px solid #000;box-shadow:inset 1px 1px 0 #ffc8d2"></div>
<div style="left:423px;top:629.5px;height:19px;line-height:19px;width:50px;text-align:center;font-size:15px;font-weight:bold;color:#111;">15</div>
<div style="left:480px;top:630px;width:50px;height:19px;background:#f0f0f0;border:1px solid #000;box-shadow:inset 1px 1px 0 #ffffff"></div>
<div style="left:480px;top:629.5px;height:19px;line-height:19px;width:50px;text-align:center;font-size:15px;font-weight:bold;color:#111;letter-spacing:0.5px;text-indent:0.5px;">50%</div>
<div style="left:783px;top:630px;width:50px;height:19px;background:#f0f0f0;border:1px solid #000;box-shadow:inset 1px 1px 0 #ffffff"></div>
<div style="left:783px;top:629.5px;height:19px;line-height:19px;width:50px;text-align:center;font-size:15px;font-weight:bold;color:#111;letter-spacing:0.5px;text-indent:0.5px;">50%</div>
<div style="left:840px;top:630px;width:50px;height:19px;background:#ffb6c1;border:1px solid #000;box-shadow:inset 1px 1px 0 #ffc8d2"></div>
<div style="left:840px;top:629.5px;height:19px;line-height:19px;width:50px;text-align:center;font-size:15px;font-weight:bold;color:#111;">15</div>
<div style="left:897px;top:630px;width:50px;height:19px;background:#d3d3d3;border:1px solid #000;box-shadow:inset 1px 1px 0 #e6e6e6"></div>
<div style="left:897px;top:629.5px;height:19px;line-height:19px;width:50px;text-align:center;font-size:15px;font-weight:bold;color:#111;letter-spacing:0.9px;text-indent:0.9px;">EXIT</div>
<div style="left:954px;top:630px;width:50px;height:19px;background:#90ee90;border:1px solid #000;box-shadow:inset 1px 1px 0 #a4ffa4"></div>
<div style="left:954px;top:629.5px;height:19px;line-height:19px;width:50px;text-align:center;font-size:15px;font-weight:bold;color:#111;">15</div>
<div style="left:1331px;top:630px;width:50px;height:19px;background:#ffb6c1;border:1px solid #000;box-shadow:inset 1px 1px 0 #ffc8d2"></div>
<div style="left:1331px;top:629.5px;height:19px;line-height:19px;width:50px;text-align:center;font-size:15px;font-weight:bold;color:#111;">15</div>
<div style="left:1388px;top:630px;width:50px;height:19px;background:#d3d3d3;border:1px solid #000;box-shadow:inset 1px 1px 0 #e6e6e6"></div>
<div style="left:1388px;top:629.5px;height:19px;line-height:19px;width:50px;text-align:center;font-size:15px;font-weight:bold;color:#111;letter-spacing:0.9px;text-indent:0.9px;">EXIT</div>
<div style="left:1445px;top:630px;width:50px;height:19px;background:#90ee90;border:1px solid #000;box-shadow:inset 1px 1px 0 #a4ffa4"></div>
<div style="left:1445px;top:629.5px;height:19px;line-height:19px;width:50px;text-align:center;font-size:15px;font-weight:bold;color:#111;">15</div>
<div style="left:65px;top:653px;width:591px;height:24px;background:#ffb6c1"></div>
<div style="left:657px;top:653px;width:591px;height:24px;background:#ffb6c1"></div>
<div style="left:7px;top:677px;width:1510px;height:1px;background:#cfcfcf"></div>
<div style="left:7px;top:655.5px;height:20px;line-height:20px;width:57px;text-align:center;font-size:14.4px;color:#222">100</div>
<div style="left:65px;top:655.5px;height:20px;line-height:20px;width:99px;text-align:center;font-size:14.4px;color:#222">9,52,005</div>
<div style="left:165px;top:656.0px;height:20px;line-height:20px;width:62px;text-align:center;font-size:15px;letter-spacing:0.6px;text-indent:0.6px;font-weight:bold;color:#008000">153.00</div>
<div style="left:228px;top:656.0px;height:20px;line-height:20px;width:77px;text-align:center;font-size:15px;letter-spacing:0.6px;text-indent:0.6px;font-weight:bold;color:#f00">-30</div>
<div style="left:534px;top:655.5px;height:20px;line-height:20px;width:52px;text-align:center;font-size:14.4px;color:#222">52600</div>
<div style="left:587px;top:655.5px;height:20px;line-height:20px;width:69px;text-align:center;font-size:14.4px;color:#222">251.25</div>
<div style="left:657px;top:655.5px;height:20px;line-height:20px;width:69px;text-align:center;font-size:14.4px;color:#222">341.40</div>
<div style="left:727px;top:655.5px;height:20px;line-height:20px;width:52px;text-align:center;font-size:14.4px;color:#222">52600</div>
<div style="left:1008px;top:656.0px;height:20px;line-height:20px;width:77px;text-align:center;font-size:15px;letter-spacing:0.6px;text-indent:0.6px;font-weight:bold;color:#f00">-30</div>
<div style="left:1086px;top:656.0px;height:20px;line-height:20px;width:62px;text-align:center;font-size:15px;letter-spacing:0.6px;text-indent:0.6px;font-weight:bold;color:#f00">-115.50</div>
<div style="left:1149px;top:655.5px;height:20px;line-height:20px;width:99px;text-align:center;font-size:14.4px;color:#222">3,75,945</div>
<div style="left:1249px;top:655.5px;height:20px;line-height:20px;width:78px;text-align:center;font-size:14.4px;color:#222">592.65</div>
<div style="left:309px;top:655px;width:50px;height:19px;background:#90ee90;border:1px solid #000;box-shadow:inset 1px 1px 0 #a4ffa4"></div>
<div style="left:309px;top:654.5px;height:19px;line-height:19px;width:50px;text-align:center;font-size:15px;font-weight:bold;color:#111;">15</div>
<div style="left:366px;top:655px;width:50px;height:19px;background:#d3d3d3;border:1px solid #000;box-shadow:inset 1px 1px 0 #e6e6e6"></div>
<div style="left:366px;top:654.5px;height:19px;line-height:19px;width:50px;text-align:center;font-size:15px;font-weight:bold;color:#111;letter-spacing:0.9px;text-indent:0.9px;">EXIT</div>
<div style="left:423px;top:655px;width:50px;height:19px;background:#ffb6c1;border:1px solid #000;box-shadow:inset 1px 1px 0 #ffc8d2"></div>
<div style="left:423px;top:654.5px;height:19px;line-height:19px;width:50px;text-align:center;font-size:15px;font-weight:bold;color:#111;">15</div>
<div style="left:480px;top:655px;width:50px;height:19px;background:#f0f0f0;border:1px solid #000;box-shadow:inset 1px 1px 0 #ffffff"></div>
<div style="left:480px;top:654.5px;height:19px;line-height:19px;width:50px;text-align:center;font-size:15px;font-weight:bold;color:#111;letter-spacing:0.5px;text-indent:0.5px;">50%</div>
<div style="left:783px;top:655px;width:50px;height:19px;background:#f0f0f0;border:1px solid #000;box-shadow:inset 1px 1px 0 #ffffff"></div>
<div style="left:783px;top:654.5px;height:19px;line-height:19px;width:50px;text-align:center;font-size:15px;font-weight:bold;color:#111;letter-spacing:0.5px;text-indent:0.5px;">50%</div>
<div style="left:840px;top:655px;width:50px;height:19px;background:#ffb6c1;border:1px solid #000;box-shadow:inset 1px 1px 0 #ffc8d2"></div>
<div style="left:840px;top:654.5px;height:19px;line-height:19px;width:50px;text-align:center;font-size:15px;font-weight:bold;color:#111;">15</div>
<div style="left:897px;top:655px;width:50px;height:19px;background:#d3d3d3;border:1px solid #000;box-shadow:inset 1px 1px 0 #e6e6e6"></div>
<div style="left:897px;top:654.5px;height:19px;line-height:19px;width:50px;text-align:center;font-size:15px;font-weight:bold;color:#111;letter-spacing:0.9px;text-indent:0.9px;">EXIT</div>
<div style="left:954px;top:655px;width:50px;height:19px;background:#90ee90;border:1px solid #000;box-shadow:inset 1px 1px 0 #a4ffa4"></div>
<div style="left:954px;top:654.5px;height:19px;line-height:19px;width:50px;text-align:center;font-size:15px;font-weight:bold;color:#111;">15</div>
<div style="left:1331px;top:655px;width:50px;height:19px;background:#ffb6c1;border:1px solid #000;box-shadow:inset 1px 1px 0 #ffc8d2"></div>
<div style="left:1331px;top:654.5px;height:19px;line-height:19px;width:50px;text-align:center;font-size:15px;font-weight:bold;color:#111;">15</div>
<div style="left:1388px;top:655px;width:50px;height:19px;background:#d3d3d3;border:1px solid #000;box-shadow:inset 1px 1px 0 #e6e6e6"></div>
<div style="left:1388px;top:654.5px;height:19px;line-height:19px;width:50px;text-align:center;font-size:15px;font-weight:bold;color:#111;letter-spacing:0.9px;text-indent:0.9px;">EXIT</div>
<div style="left:1445px;top:655px;width:50px;height:19px;background:#90ee90;border:1px solid #000;box-shadow:inset 1px 1px 0 #a4ffa4"></div>
<div style="left:1445px;top:654.5px;height:19px;line-height:19px;width:50px;text-align:center;font-size:15px;font-weight:bold;color:#111;">15</div>
<div style="left:657px;top:678px;width:591px;height:24px;background:#fdf6e6"></div>
<div style="left:7px;top:702px;width:1510px;height:1px;background:#cfcfcf"></div>
<div style="left:7px;top:680.5px;height:20px;line-height:20px;width:57px;text-align:center;font-size:14.4px;color:#222">200</div>
<div style="left:65px;top:680.5px;height:20px;line-height:20px;width:99px;text-align:center;font-size:14.4px;color:#222">7,46,715</div>
<div style="left:534px;top:680.5px;height:20px;line-height:20px;width:52px;text-align:center;font-size:14.4px;color:#222">52700</div>
<div style="left:587px;top:680.5px;height:20px;line-height:20px;width:69px;text-align:center;font-size:14.4px;color:#222">207.20</div>
<div style="left:657px;top:680.5px;height:20px;line-height:20px;width:69px;text-align:center;font-size:14.4px;color:#222">396.10</div>
<div style="left:727px;top:680.5px;height:20px;line-height:20px;width:52px;text-align:center;font-size:14.4px;color:#222">52700</div>
<div style="left:1149px;top:680.5px;height:20px;line-height:20px;width:99px;text-align:center;font-size:14.4px;color:#222">2,28,135</div>
<div style="left:1249px;top:680.5px;height:20px;line-height:20px;width:78px;text-align:center;font-size:14.4px;color:#222">603.30</div>
<div style="left:309px;top:680px;width:50px;height:19px;background:#90ee90;border:1px solid #000;box-shadow:inset 1px 1px 0 #a4ffa4"></div>
<div style="left:309px;top:679.5px;height:19px;line-height:19px;width:50px;text-align:center;font-size:15px;font-weight:bold;color:#111;">15</div>
<div style="left:366px;top:680px;width:50px;height:19px;background:#d3d3d3;border:1px solid #000;box-shadow:inset 1px 1px 0 #e6e6e6"></div>
<div style="left:366px;top:679.5px;height:19px;line-height:19px;width:50px;text-align:center;font-size:15px;font-weight:bold;color:#111;letter-spacing:0.9px;text-indent:0.9px;">EXIT</div>
<div style="left:423px;top:680px;width:50px;height:19px;background:#ffb6c1;border:1px solid #000;box-shadow:inset 1px 1px 0 #ffc8d2"></div>
<div style="left:423px;top:679.5px;height:19px;line-height:19px;width:50px;text-align:center;font-size:15px;font-weight:bold;color:#111;">15</div>
<div style="left:480px;top:680px;width:50px;height:19px;background:#f0f0f0;border:1px solid #000;box-shadow:inset 1px 1px 0 #ffffff"></div>
<div style="left:480px;top:679.5px;height:19px;line-height:19px;width:50px;text-align:center;font-size:15px;font-weight:bold;color:#111;letter-spacing:0.5px;text-indent:0.5px;">50%</div>
<div style="left:783px;top:680px;width:50px;height:19px;background:#f0f0f0;border:1px solid #000;box-shadow:inset 1px 1px 0 #ffffff"></div>
<div style="left:783px;top:679.5px;height:19px;line-height:19px;width:50px;text-align:center;font-size:15px;font-weight:bold;color:#111;letter-spacing:0.5px;text-indent:0.5px;">50%</div>
<div style="left:840px;top:680px;width:50px;height:19px;background:#ffb6c1;border:1px solid #000;box-shadow:inset 1px 1px 0 #ffc8d2"></div>
<div style="left:840px;top:679.5px;height:19px;line-height:19px;width:50px;text-align:center;font-size:15px;font-weight:bold;color:#111;">15</div>
<div style="left:897px;top:680px;width:50px;height:19px;background:#d3d3d3;border:1px solid #000;box-shadow:inset 1px 1px 0 #e6e6e6"></div>
<div style="left:897px;top:679.5px;height:19px;line-height:19px;width:50px;text-align:center;font-size:15px;font-weight:bold;color:#111;letter-spacing:0.9px;text-indent:0.9px;">EXIT</div>
<div style="left:954px;top:680px;width:50px;height:19px;background:#90ee90;border:1px solid #000;box-shadow:inset 1px 1px 0 #a4ffa4"></div>
<div style="left:954px;top:679.5px;height:19px;line-height:19px;width:50px;text-align:center;font-size:15px;font-weight:bold;color:#111;">15</div>
<div style="left:1331px;top:680px;width:50px;height:19px;background:#ffb6c1;border:1px solid #000;box-shadow:inset 1px 1px 0 #ffc8d2"></div>
<div style="left:1331px;top:679.5px;height:19px;line-height:19px;width:50px;text-align:center;font-size:15px;font-weight:bold;color:#111;">15</div>
<div style="left:1388px;top:680px;width:50px;height:19px;background:#d3d3d3;border:1px solid #000;box-shadow:inset 1px 1px 0 #e6e6e6"></div>
<div style="left:1388px;top:679.5px;height:19px;line-height:19px;width:50px;text-align:center;font-size:15px;font-weight:bold;color:#111;letter-spacing:0.9px;text-indent:0.9px;">EXIT</div>
<div style="left:1445px;top:680px;width:50px;height:19px;background:#90ee90;border:1px solid #000;box-shadow:inset 1px 1px 0 #a4ffa4"></div>
<div style="left:1445px;top:679.5px;height:19px;line-height:19px;width:50px;text-align:center;font-size:15px;font-weight:bold;color:#111;">15</div>
<div style="left:657px;top:703px;width:591px;height:24px;background:#fdf6e6"></div>
<div style="left:7px;top:727px;width:1510px;height:1px;background:#cfcfcf"></div>
<div style="left:7px;top:705.5px;height:20px;line-height:20px;width:57px;text-align:center;font-size:14.4px;color:#222">300</div>
<div style="left:65px;top:705.5px;height:20px;line-height:20px;width:99px;text-align:center;font-size:14.4px;color:#222">6,39,780</div>
<div style="left:534px;top:705.5px;height:20px;line-height:20px;width:52px;text-align:center;font-size:14.4px;color:#222">52800</div>
<div style="left:587px;top:705.5px;height:20px;line-height:20px;width:69px;text-align:center;font-size:14.4px;color:#222">168.35</div>
<div style="left:657px;top:705.5px;height:20px;line-height:20px;width:69px;text-align:center;font-size:14.4px;color:#222">457.00</div>
<div style="left:727px;top:705.5px;height:20px;line-height:20px;width:52px;text-align:center;font-size:14.4px;color:#222">52800</div>
<div style="left:1149px;top:705.5px;height:20px;line-height:20px;width:99px;text-align:center;font-size:14.4px;color:#222">1,31,295</div>
<div style="left:1249px;top:705.5px;height:20px;line-height:20px;width:78px;text-align:center;font-size:14.4px;color:#222">625.35</div>
<div style="left:309px;top:705px;width:50px;height:19px;background:#90ee90;border:1px solid #000;box-shadow:inset 1px 1px 0 #a4ffa4"></div>
<div style="left:309px;top:704.5px;height:19px;line-height:19px;width:50px;text-align:center;font-size:15px;font-weight:bold;color:#111;">15</div>
<div style="left:366px;top:705px;width:50px;height:19px;background:#d3d3d3;border:1px solid #000;box-shadow:inset 1px 1px 0 #e6e6e6"></div>
<div style="left:366px;top:704.5px;height:19px;line-height:19px;width:50px;text-align:center;font-size:15px;font-weight:bold;color:#111;letter-spacing:0.9px;text-indent:0.9px;">EXIT</div>
<div style="left:423px;top:705px;width:50px;height:19px;background:#ffb6c1;border:1px solid #000;box-shadow:inset 1px 1px 0 #ffc8d2"></div>
<div style="left:423px;top:704.5px;height:19px;line-height:19px;width:50px;text-align:center;font-size:15px;font-weight:bold;color:#111;">15</div>
<div style="left:480px;top:705px;width:50px;height:19px;background:#f0f0f0;border:1px solid #000;box-shadow:inset 1px 1px 0 #ffffff"></div>
<div style="left:480px;top:704.5px;height:19px;line-height:19px;width:50px;text-align:center;font-size:15px;font-weight:bold;color:#111;letter-spacing:0.5px;text-indent:0.5px;">50%</div>
<div style="left:783px;top:705px;width:50px;height:19px;background:#f0f0f0;border:1px solid #000;box-shadow:inset 1px 1px 0 #ffffff"></div>
<div style="left:783px;top:704.5px;height:19px;line-height:19px;width:50px;text-align:center;font-size:15px;font-weight:bold;color:#111;letter-spacing:0.5px;text-indent:0.5px;">50%</div>
<div style="left:840px;top:705px;width:50px;height:19px;background:#ffb6c1;border:1px solid #000;box-shadow:inset 1px 1px 0 #ffc8d2"></div>
<div style="left:840px;top:704.5px;height:19px;line-height:19px;width:50px;text-align:center;font-size:15px;font-weight:bold;color:#111;">15</div>
<div style="left:897px;top:705px;width:50px;height:19px;background:#d3d3d3;border:1px solid #000;box-shadow:inset 1px 1px 0 #e6e6e6"></div>
<div style="left:897px;top:704.5px;height:19px;line-height:19px;width:50px;text-align:center;font-size:15px;font-weight:bold;color:#111;letter-spacing:0.9px;text-indent:0.9px;">EXIT</div>
<div style="left:954px;top:705px;width:50px;height:19px;background:#90ee90;border:1px solid #000;box-shadow:inset 1px 1px 0 #a4ffa4"></div>
<div style="left:954px;top:704.5px;height:19px;line-height:19px;width:50px;text-align:center;font-size:15px;font-weight:bold;color:#111;">15</div>
<div style="left:1331px;top:705px;width:50px;height:19px;background:#ffb6c1;border:1px solid #000;box-shadow:inset 1px 1px 0 #ffc8d2"></div>
<div style="left:1331px;top:704.5px;height:19px;line-height:19px;width:50px;text-align:center;font-size:15px;font-weight:bold;color:#111;">15</div>
<div style="left:1388px;top:705px;width:50px;height:19px;background:#d3d3d3;border:1px solid #000;box-shadow:inset 1px 1px 0 #e6e6e6"></div>
<div style="left:1388px;top:704.5px;height:19px;line-height:19px;width:50px;text-align:center;font-size:15px;font-weight:bold;color:#111;letter-spacing:0.9px;text-indent:0.9px;">EXIT</div>
<div style="left:1445px;top:705px;width:50px;height:19px;background:#90ee90;border:1px solid #000;box-shadow:inset 1px 1px 0 #a4ffa4"></div>
<div style="left:1445px;top:704.5px;height:19px;line-height:19px;width:50px;text-align:center;font-size:15px;font-weight:bold;color:#111;">15</div>
<div style="left:657px;top:728px;width:591px;height:24px;background:#fdf6e6"></div>
<div style="left:7px;top:752px;width:1510px;height:1px;background:#cfcfcf"></div>
<div style="left:7px;top:730.5px;height:20px;line-height:20px;width:57px;text-align:center;font-size:14.4px;color:#222">400</div>
<div style="left:65px;top:730.5px;height:20px;line-height:20px;width:99px;text-align:center;font-size:14.4px;color:#222">4,52,925</div>
<div style="left:534px;top:730.5px;height:20px;line-height:20px;width:52px;text-align:center;font-size:14.4px;color:#222">52900</div>
<div style="left:587px;top:730.5px;height:20px;line-height:20px;width:69px;text-align:center;font-size:14.4px;color:#222">135.25</div>
<div style="left:657px;top:730.5px;height:20px;line-height:20px;width:69px;text-align:center;font-size:14.4px;color:#222">524.40</div>
<div style="left:727px;top:730.5px;height:20px;line-height:20px;width:52px;text-align:center;font-size:14.4px;color:#222">52900</div>
<div style="left:1149px;top:730.5px;height:20px;line-height:20px;width:99px;text-align:center;font-size:14.4px;color:#222">49,770</div>
<div style="left:1249px;top:730.5px;height:20px;line-height:20px;width:78px;text-align:center;font-size:14.4px;color:#222">659.65</div>
<div style="left:309px;top:730px;width:50px;height:19px;background:#90ee90;border:1px solid #000;box-shadow:inset 1px 1px 0 #a4ffa4"></div>
<div style="left:309px;top:729.5px;height:19px;line-height:19px;width:50px;text-align:center;font-size:15px;font-weight:bold;color:#111;">15</div>
<div style="left:366px;top:730px;width:50px;height:19px;background:#d3d3d3;border:1px solid #000;box-shadow:inset 1px 1px 0 #e6e6e6"></div>
<div style="left:366px;top:729.5px;height:19px;line-height:19px;width:50px;text-align:center;font-size:15px;font-weight:bold;color:#111;letter-spacing:0.9px;text-indent:0.9px;">EXIT</div>
<div style="left:423px;top:730px;width:50px;height:19px;background:#ffb6c1;border:1px solid #000;box-shadow:inset 1px 1px 0 #ffc8d2"></div>
<div style="left:423px;top:729.5px;height:19px;line-height:19px;width:50px;text-align:center;font-size:15px;font-weight:bold;color:#111;">15</div>
<div style="left:480px;top:730px;width:50px;height:19px;background:#f0f0f0;border:1px solid #000;box-shadow:inset 1px 1px 0 #ffffff"></div>
<div style="left:480px;top:729.5px;height:19px;line-height:19px;width:50px;text-align:center;font-size:15px;font-weight:bold;color:#111;letter-spacing:0.5px;text-indent:0.5px;">50%</div>
<div style="left:783px;top:730px;width:50px;height:19px;background:#f0f0f0;border:1px solid #000;box-shadow:inset 1px 1px 0 #ffffff"></div>
<div style="left:783px;top:729.5px;height:19px;line-height:19px;width:50px;text-align:center;font-size:15px;font-weight:bold;color:#111;letter-spacing:0.5px;text-indent:0.5px;">50%</div>
<div style="left:840px;top:730px;width:50px;height:19px;background:#ffb6c1;border:1px solid #000;box-shadow:inset 1px 1px 0 #ffc8d2"></div>
<div style="left:840px;top:729.5px;height:19px;line-height:19px;width:50px;text-align:center;font-size:15px;font-weight:bold;color:#111;">15</div>
<div style="left:897px;top:730px;width:50px;height:19px;background:#d3d3d3;border:1px solid #000;box-shadow:inset 1px 1px 0 #e6e6e6"></div>
<div style="left:897px;top:729.5px;height:19px;line-height:19px;width:50px;text-align:center;font-size:15px;font-weight:bold;color:#111;letter-spacing:0.9px;text-indent:0.9px;">EXIT</div>
<div style="left:954px;top:730px;width:50px;height:19px;background:#90ee90;border:1px solid #000;box-shadow:inset 1px 1px 0 #a4ffa4"></div>
<div style="left:954px;top:729.5px;height:19px;line-height:19px;width:50px;text-align:center;font-size:15px;font-weight:bold;color:#111;">15</div>
<div style="left:1331px;top:730px;width:50px;height:19px;background:#ffb6c1;border:1px solid #000;box-shadow:inset 1px 1px 0 #ffc8d2"></div>
<div style="left:1331px;top:729.5px;height:19px;line-height:19px;width:50px;text-align:center;font-size:15px;font-weight:bold;color:#111;">15</div>
<div style="left:1388px;top:730px;width:50px;height:19px;background:#d3d3d3;border:1px solid #000;box-shadow:inset 1px 1px 0 #e6e6e6"></div>
<div style="left:1388px;top:729.5px;height:19px;line-height:19px;width:50px;text-align:center;font-size:15px;font-weight:bold;color:#111;letter-spacing:0.9px;text-indent:0.9px;">EXIT</div>
<div style="left:1445px;top:730px;width:50px;height:19px;background:#90ee90;border:1px solid #000;box-shadow:inset 1px 1px 0 #a4ffa4"></div>
<div style="left:1445px;top:729.5px;height:19px;line-height:19px;width:50px;text-align:center;font-size:15px;font-weight:bold;color:#111;">15</div>
<div style="left:657px;top:753px;width:591px;height:24px;background:#fdf6e6"></div>
<div style="left:7px;top:777px;width:1510px;height:1px;background:#cfcfcf"></div>
<div style="left:7px;top:755.5px;height:20px;line-height:20px;width:57px;text-align:center;font-size:14.4px;color:#222">500</div>
<div style="left:65px;top:755.5px;height:20px;line-height:20px;width:99px;text-align:center;font-size:14.4px;color:#222">18,30,300</div>
<div style="left:534px;top:755.5px;height:20px;line-height:20px;width:52px;text-align:center;font-size:14.4px;color:#222">53000</div>
<div style="left:587px;top:755.5px;height:20px;line-height:20px;width:69px;text-align:center;font-size:14.4px;color:#222">107.65</div>
<div style="left:657px;top:755.5px;height:20px;line-height:20px;width:69px;text-align:center;font-size:14.4px;color:#222">596.95</div>
<div style="left:727px;top:755.5px;height:20px;line-height:20px;width:52px;text-align:center;font-size:14.4px;color:#222">53000</div>
<div style="left:1149px;top:755.5px;height:20px;line-height:20px;width:99px;text-align:center;font-size:14.4px;color:#222">2,50,680</div>
<div style="left:1249px;top:755.5px;height:20px;line-height:20px;width:78px;text-align:center;font-size:14.4px;color:#222">704.60</div>
<div style="left:309px;top:755px;width:50px;height:19px;background:#90ee90;border:1px solid #000;box-shadow:inset 1px 1px 0 #a4ffa4"></div>
<div style="left:309px;top:754.5px;height:19px;line-height:19px;width:50px;text-align:center;font-size:15px;font-weight:bold;color:#111;">15</div>
<div style="left:366px;top:755px;width:50px;height:19px;background:#d3d3d3;border:1px solid #000;box-shadow:inset 1px 1px 0 #e6e6e6"></div>
<div style="left:366px;top:754.5px;height:19px;line-height:19px;width:50px;text-align:center;font-size:15px;font-weight:bold;color:#111;letter-spacing:0.9px;text-indent:0.9px;">EXIT</div>
<div style="left:423px;top:755px;width:50px;height:19px;background:#ffb6c1;border:1px solid #000;box-shadow:inset 1px 1px 0 #ffc8d2"></div>
<div style="left:423px;top:754.5px;height:19px;line-height:19px;width:50px;text-align:center;font-size:15px;font-weight:bold;color:#111;">15</div>
<div style="left:480px;top:755px;width:50px;height:19px;background:#f0f0f0;border:1px solid #000;box-shadow:inset 1px 1px 0 #ffffff"></div>
<div style="left:480px;top:754.5px;height:19px;line-height:19px;width:50px;text-align:center;font-size:15px;font-weight:bold;color:#111;letter-spacing:0.5px;text-indent:0.5px;">50%</div>
<div style="left:783px;top:755px;width:50px;height:19px;background:#f0f0f0;border:1px solid #000;box-shadow:inset 1px 1px 0 #ffffff"></div>
<div style="left:783px;top:754.5px;height:19px;line-height:19px;width:50px;text-align:center;font-size:15px;font-weight:bold;color:#111;letter-spacing:0.5px;text-indent:0.5px;">50%</div>
<div style="left:840px;top:755px;width:50px;height:19px;background:#ffb6c1;border:1px solid #000;box-shadow:inset 1px 1px 0 #ffc8d2"></div>
<div style="left:840px;top:754.5px;height:19px;line-height:19px;width:50px;text-align:center;font-size:15px;font-weight:bold;color:#111;">15</div>
<div style="left:897px;top:755px;width:50px;height:19px;background:#d3d3d3;border:1px solid #000;box-shadow:inset 1px 1px 0 #e6e6e6"></div>
<div style="left:897px;top:754.5px;height:19px;line-height:19px;width:50px;text-align:center;font-size:15px;font-weight:bold;color:#111;letter-spacing:0.9px;text-indent:0.9px;">EXIT</div>
<div style="left:954px;top:755px;width:50px;height:19px;background:#90ee90;border:1px solid #000;box-shadow:inset 1px 1px 0 #a4ffa4"></div>
<div style="left:954px;top:754.5px;height:19px;line-height:19px;width:50px;text-align:center;font-size:15px;font-weight:bold;color:#111;">15</div>
<div style="left:1331px;top:755px;width:50px;height:19px;background:#ffb6c1;border:1px solid #000;box-shadow:inset 1px 1px 0 #ffc8d2"></div>
<div style="left:1331px;top:754.5px;height:19px;line-height:19px;width:50px;text-align:center;font-size:15px;font-weight:bold;color:#111;">15</div>
<div style="left:1388px;top:755px;width:50px;height:19px;background:#d3d3d3;border:1px solid #000;box-shadow:inset 1px 1px 0 #e6e6e6"></div>
<div style="left:1388px;top:754.5px;height:19px;line-height:19px;width:50px;text-align:center;font-size:15px;font-weight:bold;color:#111;letter-spacing:0.9px;text-indent:0.9px;">EXIT</div>
<div style="left:1445px;top:755px;width:50px;height:19px;background:#90ee90;border:1px solid #000;box-shadow:inset 1px 1px 0 #a4ffa4"></div>
<div style="left:1445px;top:754.5px;height:19px;line-height:19px;width:50px;text-align:center;font-size:15px;font-weight:bold;color:#111;">15</div>
<div style="left:657px;top:778px;width:591px;height:24px;background:#fdf6e6"></div>
<div style="left:7px;top:802px;width:1510px;height:1px;background:#cfcfcf"></div>
<div style="left:7px;top:780.5px;height:20px;line-height:20px;width:57px;text-align:center;font-size:14.4px;color:#222">600</div>
<div style="left:65px;top:780.5px;height:20px;line-height:20px;width:99px;text-align:center;font-size:14.4px;color:#222">6,31,950</div>
<div style="left:534px;top:780.5px;height:20px;line-height:20px;width:52px;text-align:center;font-size:14.4px;color:#222">53100</div>
<div style="left:587px;top:780.5px;height:20px;line-height:20px;width:69px;text-align:center;font-size:14.4px;color:#222">84.75</div>
<div style="left:657px;top:780.5px;height:20px;line-height:20px;width:69px;text-align:center;font-size:14.4px;color:#222">675.75</div>
<div style="left:727px;top:780.5px;height:20px;line-height:20px;width:52px;text-align:center;font-size:14.4px;color:#222">53100</div>
<div style="left:1149px;top:780.5px;height:20px;line-height:20px;width:99px;text-align:center;font-size:14.4px;color:#222">30,600</div>
<div style="left:1249px;top:780.5px;height:20px;line-height:20px;width:78px;text-align:center;font-size:14.4px;color:#222">760.50</div>
<div style="left:309px;top:780px;width:50px;height:19px;background:#90ee90;border:1px solid #000;box-shadow:inset 1px 1px 0 #a4ffa4"></div>
<div style="left:309px;top:779.5px;height:19px;line-height:19px;width:50px;text-align:center;font-size:15px;font-weight:bold;color:#111;">15</div>
<div style="left:366px;top:780px;width:50px;height:19px;background:#d3d3d3;border:1px solid #000;box-shadow:inset 1px 1px 0 #e6e6e6"></div>
<div style="left:366px;top:779.5px;height:19px;line-height:19px;width:50px;text-align:center;font-size:15px;font-weight:bold;color:#111;letter-spacing:0.9px;text-indent:0.9px;">EXIT</div>
<div style="left:423px;top:780px;width:50px;height:19px;background:#ffb6c1;border:1px solid #000;box-shadow:inset 1px 1px 0 #ffc8d2"></div>
<div style="left:423px;top:779.5px;height:19px;line-height:19px;width:50px;text-align:center;font-size:15px;font-weight:bold;color:#111;">15</div>
<div style="left:480px;top:780px;width:50px;height:19px;background:#f0f0f0;border:1px solid #000;box-shadow:inset 1px 1px 0 #ffffff"></div>
<div style="left:480px;top:779.5px;height:19px;line-height:19px;width:50px;text-align:center;font-size:15px;font-weight:bold;color:#111;letter-spacing:0.5px;text-indent:0.5px;">50%</div>
<div style="left:783px;top:780px;width:50px;height:19px;background:#f0f0f0;border:1px solid #000;box-shadow:inset 1px 1px 0 #ffffff"></div>
<div style="left:783px;top:779.5px;height:19px;line-height:19px;width:50px;text-align:center;font-size:15px;font-weight:bold;color:#111;letter-spacing:0.5px;text-indent:0.5px;">50%</div>
<div style="left:840px;top:780px;width:50px;height:19px;background:#ffb6c1;border:1px solid #000;box-shadow:inset 1px 1px 0 #ffc8d2"></div>
<div style="left:840px;top:779.5px;height:19px;line-height:19px;width:50px;text-align:center;font-size:15px;font-weight:bold;color:#111;">15</div>
<div style="left:897px;top:780px;width:50px;height:19px;background:#d3d3d3;border:1px solid #000;box-shadow:inset 1px 1px 0 #e6e6e6"></div>
<div style="left:897px;top:779.5px;height:19px;line-height:19px;width:50px;text-align:center;font-size:15px;font-weight:bold;color:#111;letter-spacing:0.9px;text-indent:0.9px;">EXIT</div>
<div style="left:954px;top:780px;width:50px;height:19px;background:#90ee90;border:1px solid #000;box-shadow:inset 1px 1px 0 #a4ffa4"></div>
<div style="left:954px;top:779.5px;height:19px;line-height:19px;width:50px;text-align:center;font-size:15px;font-weight:bold;color:#111;">15</div>
<div style="left:1331px;top:780px;width:50px;height:19px;background:#ffb6c1;border:1px solid #000;box-shadow:inset 1px 1px 0 #ffc8d2"></div>
<div style="left:1331px;top:779.5px;height:19px;line-height:19px;width:50px;text-align:center;font-size:15px;font-weight:bold;color:#111;">15</div>
<div style="left:1388px;top:780px;width:50px;height:19px;background:#d3d3d3;border:1px solid #000;box-shadow:inset 1px 1px 0 #e6e6e6"></div>
<div style="left:1388px;top:779.5px;height:19px;line-height:19px;width:50px;text-align:center;font-size:15px;font-weight:bold;color:#111;letter-spacing:0.9px;text-indent:0.9px;">EXIT</div>
<div style="left:1445px;top:780px;width:50px;height:19px;background:#90ee90;border:1px solid #000;box-shadow:inset 1px 1px 0 #a4ffa4"></div>
<div style="left:1445px;top:779.5px;height:19px;line-height:19px;width:50px;text-align:center;font-size:15px;font-weight:bold;color:#111;">15</div>
<div style="left:657px;top:803px;width:591px;height:24px;background:#fdf6e6"></div>
<div style="left:7px;top:827px;width:1510px;height:1px;background:#cfcfcf"></div>
<div style="left:7px;top:805.5px;height:20px;line-height:20px;width:57px;text-align:center;font-size:14.4px;color:#222">700</div>
<div style="left:65px;top:805.5px;height:20px;line-height:20px;width:99px;text-align:center;font-size:14.4px;color:#222">9,25,065</div>
<div style="left:534px;top:805.5px;height:20px;line-height:20px;width:52px;text-align:center;font-size:14.4px;color:#222">53200</div>
<div style="left:587px;top:805.5px;height:20px;line-height:20px;width:69px;text-align:center;font-size:14.4px;color:#222">66.45</div>
<div style="left:657px;top:805.5px;height:20px;line-height:20px;width:69px;text-align:center;font-size:14.4px;color:#222">748.45</div>
<div style="left:727px;top:805.5px;height:20px;line-height:20px;width:52px;text-align:center;font-size:14.4px;color:#222">53200</div>
<div style="left:1149px;top:805.5px;height:20px;line-height:20px;width:99px;text-align:center;font-size:14.4px;color:#222">17,205</div>
<div style="left:1249px;top:805.5px;height:20px;line-height:20px;width:78px;text-align:center;font-size:14.4px;color:#222">814.90</div>
<div style="left:309px;top:805px;width:50px;height:19px;background:#90ee90;border:1px solid #000;box-shadow:inset 1px 1px 0 #a4ffa4"></div>
<div style="left:309px;top:804.5px;height:19px;line-height:19px;width:50px;text-align:center;font-size:15px;font-weight:bold;color:#111;">15</div>
<div style="left:366px;top:805px;width:50px;height:19px;background:#d3d3d3;border:1px solid #000;box-shadow:inset 1px 1px 0 #e6e6e6"></div>
<div style="left:366px;top:804.5px;height:19px;line-height:19px;width:50px;text-align:center;font-size:15px;font-weight:bold;color:#111;letter-spacing:0.9px;text-indent:0.9px;">EXIT</div>
<div style="left:423px;top:805px;width:50px;height:19px;background:#ffb6c1;border:1px solid #000;box-shadow:inset 1px 1px 0 #ffc8d2"></div>
<div style="left:423px;top:804.5px;height:19px;line-height:19px;width:50px;text-align:center;font-size:15px;font-weight:bold;color:#111;">15</div>
<div style="left:480px;top:805px;width:50px;height:19px;background:#f0f0f0;border:1px solid #000;box-shadow:inset 1px 1px 0 #ffffff"></div>
<div style="left:480px;top:804.5px;height:19px;line-height:19px;width:50px;text-align:center;font-size:15px;font-weight:bold;color:#111;letter-spacing:0.5px;text-indent:0.5px;">50%</div>
<div style="left:783px;top:805px;width:50px;height:19px;background:#f0f0f0;border:1px solid #000;box-shadow:inset 1px 1px 0 #ffffff"></div>
<div style="left:783px;top:804.5px;height:19px;line-height:19px;width:50px;text-align:center;font-size:15px;font-weight:bold;color:#111;letter-spacing:0.5px;text-indent:0.5px;">50%</div>
<div style="left:840px;top:805px;width:50px;height:19px;background:#ffb6c1;border:1px solid #000;box-shadow:inset 1px 1px 0 #ffc8d2"></div>
<div style="left:840px;top:804.5px;height:19px;line-height:19px;width:50px;text-align:center;font-size:15px;font-weight:bold;color:#111;">15</div>
<div style="left:897px;top:805px;width:50px;height:19px;background:#d3d3d3;border:1px solid #000;box-shadow:inset 1px 1px 0 #e6e6e6"></div>
<div style="left:897px;top:804.5px;height:19px;line-height:19px;width:50px;text-align:center;font-size:15px;font-weight:bold;color:#111;letter-spacing:0.9px;text-indent:0.9px;">EXIT</div>
<div style="left:954px;top:805px;width:50px;height:19px;background:#90ee90;border:1px solid #000;box-shadow:inset 1px 1px 0 #a4ffa4"></div>
<div style="left:954px;top:804.5px;height:19px;line-height:19px;width:50px;text-align:center;font-size:15px;font-weight:bold;color:#111;">15</div>
<div style="left:1331px;top:805px;width:50px;height:19px;background:#ffb6c1;border:1px solid #000;box-shadow:inset 1px 1px 0 #ffc8d2"></div>
<div style="left:1331px;top:804.5px;height:19px;line-height:19px;width:50px;text-align:center;font-size:15px;font-weight:bold;color:#111;">15</div>
<div style="left:1388px;top:805px;width:50px;height:19px;background:#d3d3d3;border:1px solid #000;box-shadow:inset 1px 1px 0 #e6e6e6"></div>
<div style="left:1388px;top:804.5px;height:19px;line-height:19px;width:50px;text-align:center;font-size:15px;font-weight:bold;color:#111;letter-spacing:0.9px;text-indent:0.9px;">EXIT</div>
<div style="left:1445px;top:805px;width:50px;height:19px;background:#90ee90;border:1px solid #000;box-shadow:inset 1px 1px 0 #a4ffa4"></div>
<div style="left:1445px;top:804.5px;height:19px;line-height:19px;width:50px;text-align:center;font-size:15px;font-weight:bold;color:#111;">15</div>
<div style="left:657px;top:828px;width:591px;height:24px;background:#87ceeb"></div>
<div style="left:7px;top:852px;width:1510px;height:1px;background:#cfcfcf"></div>
<div style="left:7px;top:830.5px;height:20px;line-height:20px;width:57px;text-align:center;font-size:14.4px;color:#222">800</div>
<div style="left:65px;top:830.5px;height:20px;line-height:20px;width:99px;text-align:center;font-size:14.4px;color:#222">5,86,755</div>
<div style="left:534px;top:830.5px;height:20px;line-height:20px;width:52px;text-align:center;font-size:14.4px;color:#222">53300</div>
<div style="left:587px;top:830.5px;height:20px;line-height:20px;width:69px;text-align:center;font-size:14.4px;color:#222">52.40</div>
<div style="left:657px;top:830.5px;height:20px;line-height:20px;width:69px;text-align:center;font-size:14.4px;color:#222">835.00</div>
<div style="left:727px;top:830.5px;height:20px;line-height:20px;width:52px;text-align:center;font-size:14.4px;color:#222">53300</div>
<div style="left:1008px;top:831.0px;height:20px;line-height:20px;width:77px;text-align:center;font-size:15px;letter-spacing:0.6px;text-indent:0.6px;font-weight:bold;color:#008000">15</div>
<div style="left:1086px;top:831.0px;height:20px;line-height:20px;width:62px;text-align:center;font-size:15px;letter-spacing:0.6px;text-indent:0.6px;font-weight:bold;color:#008000">234.75</div>
<div style="left:1149px;top:830.5px;height:20px;line-height:20px;width:99px;text-align:center;font-size:14.4px;color:#222">10,890</div>
<div style="left:1249px;top:830.5px;height:20px;line-height:20px;width:78px;text-align:center;font-size:14.4px;color:#222">887.40</div>
<div style="left:309px;top:830px;width:50px;height:19px;background:#90ee90;border:1px solid #000;box-shadow:inset 1px 1px 0 #a4ffa4"></div>
<div style="left:309px;top:829.5px;height:19px;line-height:19px;width:50px;text-align:center;font-size:15px;font-weight:bold;color:#111;">15</div>
<div style="left:366px;top:830px;width:50px;height:19px;background:#d3d3d3;border:1px solid #000;box-shadow:inset 1px 1px 0 #e6e6e6"></div>
<div style="left:366px;top:829.5px;height:19px;line-height:19px;width:50px;text-align:center;font-size:15px;font-weight:bold;color:#111;letter-spacing:0.9px;text-indent:0.9px;">EXIT</div>
<div style="left:423px;top:830px;width:50px;height:19px;background:#ffb6c1;border:1px solid #000;box-shadow:inset 1px 1px 0 #ffc8d2"></div>
<div style="left:423px;top:829.5px;height:19px;line-height:19px;width:50px;text-align:center;font-size:15px;font-weight:bold;color:#111;">15</div>
<div style="left:480px;top:830px;width:50px;height:19px;background:#f0f0f0;border:1px solid #000;box-shadow:inset 1px 1px 0 #ffffff"></div>
<div style="left:480px;top:829.5px;height:19px;line-height:19px;width:50px;text-align:center;font-size:15px;font-weight:bold;color:#111;letter-spacing:0.5px;text-indent:0.5px;">50%</div>
<div style="left:783px;top:830px;width:50px;height:19px;background:#f0f0f0;border:1px solid #000;box-shadow:inset 1px 1px 0 #ffffff"></div>
<div style="left:783px;top:829.5px;height:19px;line-height:19px;width:50px;text-align:center;font-size:15px;font-weight:bold;color:#111;letter-spacing:0.5px;text-indent:0.5px;">50%</div>
<div style="left:840px;top:830px;width:50px;height:19px;background:#ffb6c1;border:1px solid #000;box-shadow:inset 1px 1px 0 #ffc8d2"></div>
<div style="left:840px;top:829.5px;height:19px;line-height:19px;width:50px;text-align:center;font-size:15px;font-weight:bold;color:#111;">15</div>
<div style="left:897px;top:830px;width:50px;height:19px;background:#d3d3d3;border:1px solid #000;box-shadow:inset 1px 1px 0 #e6e6e6"></div>
<div style="left:897px;top:829.5px;height:19px;line-height:19px;width:50px;text-align:center;font-size:15px;font-weight:bold;color:#111;letter-spacing:0.9px;text-indent:0.9px;">EXIT</div>
<div style="left:954px;top:830px;width:50px;height:19px;background:#90ee90;border:1px solid #000;box-shadow:inset 1px 1px 0 #a4ffa4"></div>
<div style="left:954px;top:829.5px;height:19px;line-height:19px;width:50px;text-align:center;font-size:15px;font-weight:bold;color:#111;">15</div>
<div style="left:1331px;top:830px;width:50px;height:19px;background:#ffb6c1;border:1px solid #000;box-shadow:inset 1px 1px 0 #ffc8d2"></div>
<div style="left:1331px;top:829.5px;height:19px;line-height:19px;width:50px;text-align:center;font-size:15px;font-weight:bold;color:#111;">15</div>
<div style="left:1388px;top:830px;width:50px;height:19px;background:#d3d3d3;border:1px solid #000;box-shadow:inset 1px 1px 0 #e6e6e6"></div>
<div style="left:1388px;top:829.5px;height:19px;line-height:19px;width:50px;text-align:center;font-size:15px;font-weight:bold;color:#111;letter-spacing:0.9px;text-indent:0.9px;">EXIT</div>
<div style="left:1445px;top:830px;width:50px;height:19px;background:#90ee90;border:1px solid #000;box-shadow:inset 1px 1px 0 #a4ffa4"></div>
<div style="left:1445px;top:829.5px;height:19px;line-height:19px;width:50px;text-align:center;font-size:15px;font-weight:bold;color:#111;">15</div>
<div style="left:657px;top:853px;width:591px;height:24px;background:#fdf6e6"></div>
<div style="left:7px;top:877px;width:1510px;height:1px;background:#cfcfcf"></div>
<div style="left:7px;top:855.5px;height:20px;line-height:20px;width:57px;text-align:center;font-size:14.4px;color:#222">900</div>
<div style="left:65px;top:855.5px;height:20px;line-height:20px;width:99px;text-align:center;font-size:14.4px;color:#222">5,19,150</div>
<div style="left:534px;top:855.5px;height:20px;line-height:20px;width:52px;text-align:center;font-size:14.4px;color:#222">53400</div>
<div style="left:587px;top:855.5px;height:20px;line-height:20px;width:69px;text-align:center;font-size:14.4px;color:#222">41.45</div>
<div style="left:657px;top:855.5px;height:20px;line-height:20px;width:69px;text-align:center;font-size:14.4px;color:#222">922.80</div>
<div style="left:727px;top:855.5px;height:20px;line-height:20px;width:52px;text-align:center;font-size:14.4px;color:#222">53400</div>
<div style="left:1149px;top:855.5px;height:20px;line-height:20px;width:99px;text-align:center;font-size:14.4px;color:#222">12,885</div>
<div style="left:1249px;top:855.5px;height:20px;line-height:20px;width:78px;text-align:center;font-size:14.4px;color:#222">964.25</div>
<div style="left:309px;top:855px;width:50px;height:19px;background:#90ee90;border:1px solid #000;box-shadow:inset 1px 1px 0 #a4ffa4"></div>
<div style="left:309px;top:854.5px;height:19px;line-height:19px;width:50px;text-align:center;font-size:15px;font-weight:bold;color:#111;">15</div>
<div style="left:366px;top:855px;width:50px;height:19px;background:#d3d3d3;border:1px solid #000;box-shadow:inset 1px 1px 0 #e6e6e6"></div>
<div style="left:366px;top:854.5px;height:19px;line-height:19px;width:50px;text-align:center;font-size:15px;font-weight:bold;color:#111;letter-spacing:0.9px;text-indent:0.9px;">EXIT</div>
<div style="left:423px;top:855px;width:50px;height:19px;background:#ffb6c1;border:1px solid #000;box-shadow:inset 1px 1px 0 #ffc8d2"></div>
<div style="left:423px;top:854.5px;height:19px;line-height:19px;width:50px;text-align:center;font-size:15px;font-weight:bold;color:#111;">15</div>
<div style="left:480px;top:855px;width:50px;height:19px;background:#f0f0f0;border:1px solid #000;box-shadow:inset 1px 1px 0 #ffffff"></div>
<div style="left:480px;top:854.5px;height:19px;line-height:19px;width:50px;text-align:center;font-size:15px;font-weight:bold;color:#111;letter-spacing:0.5px;text-indent:0.5px;">50%</div>
<div style="left:783px;top:855px;width:50px;height:19px;background:#f0f0f0;border:1px solid #000;box-shadow:inset 1px 1px 0 #ffffff"></div>
<div style="left:783px;top:854.5px;height:19px;line-height:19px;width:50px;text-align:center;font-size:15px;font-weight:bold;color:#111;letter-spacing:0.5px;text-indent:0.5px;">50%</div>
<div style="left:840px;top:855px;width:50px;height:19px;background:#ffb6c1;border:1px solid #000;box-shadow:inset 1px 1px 0 #ffc8d2"></div>
<div style="left:840px;top:854.5px;height:19px;line-height:19px;width:50px;text-align:center;font-size:15px;font-weight:bold;color:#111;">15</div>
<div style="left:897px;top:855px;width:50px;height:19px;background:#d3d3d3;border:1px solid #000;box-shadow:inset 1px 1px 0 #e6e6e6"></div>
<div style="left:897px;top:854.5px;height:19px;line-height:19px;width:50px;text-align:center;font-size:15px;font-weight:bold;color:#111;letter-spacing:0.9px;text-indent:0.9px;">EXIT</div>
<div style="left:954px;top:855px;width:50px;height:19px;background:#90ee90;border:1px solid #000;box-shadow:inset 1px 1px 0 #a4ffa4"></div>
<div style="left:954px;top:854.5px;height:19px;line-height:19px;width:50px;text-align:center;font-size:15px;font-weight:bold;color:#111;">15</div>
<div style="left:1331px;top:855px;width:50px;height:19px;background:#ffb6c1;border:1px solid #000;box-shadow:inset 1px 1px 0 #ffc8d2"></div>
<div style="left:1331px;top:854.5px;height:19px;line-height:19px;width:50px;text-align:center;font-size:15px;font-weight:bold;color:#111;">15</div>
<div style="left:1388px;top:855px;width:50px;height:19px;background:#d3d3d3;border:1px solid #000;box-shadow:inset 1px 1px 0 #e6e6e6"></div>
<div style="left:1388px;top:854.5px;height:19px;line-height:19px;width:50px;text-align:center;font-size:15px;font-weight:bold;color:#111;letter-spacing:0.9px;text-indent:0.9px;">EXIT</div>
<div style="left:1445px;top:855px;width:50px;height:19px;background:#90ee90;border:1px solid #000;box-shadow:inset 1px 1px 0 #a4ffa4"></div>
<div style="left:1445px;top:854.5px;height:19px;line-height:19px;width:50px;text-align:center;font-size:15px;font-weight:bold;color:#111;">15</div>
<div style="left:657px;top:878px;width:591px;height:24px;background:#fdf6e6"></div>
<div style="left:7px;top:902px;width:1510px;height:1px;background:#cfcfcf"></div>
<div style="left:7px;top:880.5px;height:20px;line-height:20px;width:57px;text-align:center;font-size:14.4px;color:#222">1000</div>
<div style="left:65px;top:880.5px;height:20px;line-height:20px;width:99px;text-align:center;font-size:14.4px;color:#222">17,73,435</div>
<div style="left:534px;top:880.5px;height:20px;line-height:20px;width:52px;text-align:center;font-size:14.4px;color:#222">53500</div>
<div style="left:587px;top:880.5px;height:20px;line-height:20px;width:69px;text-align:center;font-size:14.4px;color:#222">32.60</div>
<div style="left:657px;top:880.5px;height:20px;line-height:20px;width:69px;text-align:center;font-size:14.4px;color:#222">1,014.00</div>
<div style="left:727px;top:880.5px;height:20px;line-height:20px;width:52px;text-align:center;font-size:14.4px;color:#222">53500</div>
<div style="left:1149px;top:880.5px;height:20px;line-height:20px;width:99px;text-align:center;font-size:14.4px;color:#222">30,300</div>
<div style="left:1249px;top:880.5px;height:20px;line-height:20px;width:78px;text-align:center;font-size:14.4px;color:#222">1,046.60</div>
<div style="left:309px;top:880px;width:50px;height:19px;background:#90ee90;border:1px solid #000;box-shadow:inset 1px 1px 0 #a4ffa4"></div>
<div style="left:309px;top:879.5px;height:19px;line-height:19px;width:50px;text-align:center;font-size:15px;font-weight:bold;color:#111;">15</div>
<div style="left:366px;top:880px;width:50px;height:19px;background:#d3d3d3;border:1px solid #000;box-shadow:inset 1px 1px 0 #e6e6e6"></div>
<div style="left:366px;top:879.5px;height:19px;line-height:19px;width:50px;text-align:center;font-size:15px;font-weight:bold;color:#111;letter-spacing:0.9px;text-indent:0.9px;">EXIT</div>
<div style="left:423px;top:880px;width:50px;height:19px;background:#ffb6c1;border:1px solid #000;box-shadow:inset 1px 1px 0 #ffc8d2"></div>
<div style="left:423px;top:879.5px;height:19px;line-height:19px;width:50px;text-align:center;font-size:15px;font-weight:bold;color:#111;">15</div>
<div style="left:480px;top:880px;width:50px;height:19px;background:#f0f0f0;border:1px solid #000;box-shadow:inset 1px 1px 0 #ffffff"></div>
<div style="left:480px;top:879.5px;height:19px;line-height:19px;width:50px;text-align:center;font-size:15px;font-weight:bold;color:#111;letter-spacing:0.5px;text-indent:0.5px;">50%</div>
<div style="left:783px;top:880px;width:50px;height:19px;background:#f0f0f0;border:1px solid #000;box-shadow:inset 1px 1px 0 #ffffff"></div>
<div style="left:783px;top:879.5px;height:19px;line-height:19px;width:50px;text-align:center;font-size:15px;font-weight:bold;color:#111;letter-spacing:0.5px;text-indent:0.5px;">50%</div>
<div style="left:840px;top:880px;width:50px;height:19px;background:#ffb6c1;border:1px solid #000;box-shadow:inset 1px 1px 0 #ffc8d2"></div>
<div style="left:840px;top:879.5px;height:19px;line-height:19px;width:50px;text-align:center;font-size:15px;font-weight:bold;color:#111;">15</div>
<div style="left:897px;top:880px;width:50px;height:19px;background:#d3d3d3;border:1px solid #000;box-shadow:inset 1px 1px 0 #e6e6e6"></div>
<div style="left:897px;top:879.5px;height:19px;line-height:19px;width:50px;text-align:center;font-size:15px;font-weight:bold;color:#111;letter-spacing:0.9px;text-indent:0.9px;">EXIT</div>
<div style="left:954px;top:880px;width:50px;height:19px;background:#90ee90;border:1px solid #000;box-shadow:inset 1px 1px 0 #a4ffa4"></div>
<div style="left:954px;top:879.5px;height:19px;line-height:19px;width:50px;text-align:center;font-size:15px;font-weight:bold;color:#111;">15</div>
<div style="left:1331px;top:880px;width:50px;height:19px;background:#ffb6c1;border:1px solid #000;box-shadow:inset 1px 1px 0 #ffc8d2"></div>
<div style="left:1331px;top:879.5px;height:19px;line-height:19px;width:50px;text-align:center;font-size:15px;font-weight:bold;color:#111;">15</div>
<div style="left:1388px;top:880px;width:50px;height:19px;background:#d3d3d3;border:1px solid #000;box-shadow:inset 1px 1px 0 #e6e6e6"></div>
<div style="left:1388px;top:879.5px;height:19px;line-height:19px;width:50px;text-align:center;font-size:15px;font-weight:bold;color:#111;letter-spacing:0.9px;text-indent:0.9px;">EXIT</div>
<div style="left:1445px;top:880px;width:50px;height:19px;background:#90ee90;border:1px solid #000;box-shadow:inset 1px 1px 0 #a4ffa4"></div>
<div style="left:1445px;top:879.5px;height:19px;line-height:19px;width:50px;text-align:center;font-size:15px;font-weight:bold;color:#111;">15</div>
<div style="left:657px;top:903px;width:591px;height:24px;background:#fdf6e6"></div>
<div style="left:7px;top:927px;width:1510px;height:1px;background:#cfcfcf"></div>
<div style="left:7px;top:905.5px;height:20px;line-height:20px;width:57px;text-align:center;font-size:14.4px;color:#222">1100</div>
<div style="left:65px;top:905.5px;height:20px;line-height:20px;width:99px;text-align:center;font-size:14.4px;color:#222">4,10,670</div>
<div style="left:534px;top:905.5px;height:20px;line-height:20px;width:52px;text-align:center;font-size:14.4px;color:#222">53600</div>
<div style="left:587px;top:905.5px;height:20px;line-height:20px;width:69px;text-align:center;font-size:14.4px;color:#222">25.60</div>
<div style="left:657px;top:905.5px;height:20px;line-height:20px;width:69px;text-align:center;font-size:14.4px;color:#222">1,097.60</div>
<div style="left:727px;top:905.5px;height:20px;line-height:20px;width:52px;text-align:center;font-size:14.4px;color:#222">53600</div>
<div style="left:1149px;top:905.5px;height:20px;line-height:20px;width:99px;text-align:center;font-size:14.4px;color:#222">4,185</div>
<div style="left:1249px;top:905.5px;height:20px;line-height:20px;width:78px;text-align:center;font-size:14.4px;color:#222">1,123.20</div>
<div style="left:309px;top:905px;width:50px;height:19px;background:#90ee90;border:1px solid #000;box-shadow:inset 1px 1px 0 #a4ffa4"></div>
<div style="left:309px;top:904.5px;height:19px;line-height:19px;width:50px;text-align:center;font-size:15px;font-weight:bold;color:#111;">15</div>
<div style="left:366px;top:905px;width:50px;height:19px;background:#d3d3d3;border:1px solid #000;box-shadow:inset 1px 1px 0 #e6e6e6"></div>
<div style="left:366px;top:904.5px;height:19px;line-height:19px;width:50px;text-align:center;font-size:15px;font-weight:bold;color:#111;letter-spacing:0.9px;text-indent:0.9px;">EXIT</div>
<div style="left:423px;top:905px;width:50px;height:19px;background:#ffb6c1;border:1px solid #000;box-shadow:inset 1px 1px 0 #ffc8d2"></div>
<div style="left:423px;top:904.5px;height:19px;line-height:19px;width:50px;text-align:center;font-size:15px;font-weight:bold;color:#111;">15</div>
<div style="left:480px;top:905px;width:50px;height:19px;background:#f0f0f0;border:1px solid #000;box-shadow:inset 1px 1px 0 #ffffff"></div>
<div style="left:480px;top:904.5px;height:19px;line-height:19px;width:50px;text-align:center;font-size:15px;font-weight:bold;color:#111;letter-spacing:0.5px;text-indent:0.5px;">50%</div>
<div style="left:783px;top:905px;width:50px;height:19px;background:#f0f0f0;border:1px solid #000;box-shadow:inset 1px 1px 0 #ffffff"></div>
<div style="left:783px;top:904.5px;height:19px;line-height:19px;width:50px;text-align:center;font-size:15px;font-weight:bold;color:#111;letter-spacing:0.5px;text-indent:0.5px;">50%</div>
<div style="left:840px;top:905px;width:50px;height:19px;background:#ffb6c1;border:1px solid #000;box-shadow:inset 1px 1px 0 #ffc8d2"></div>
<div style="left:840px;top:904.5px;height:19px;line-height:19px;width:50px;text-align:center;font-size:15px;font-weight:bold;color:#111;">15</div>
<div style="left:897px;top:905px;width:50px;height:19px;background:#d3d3d3;border:1px solid #000;box-shadow:inset 1px 1px 0 #e6e6e6"></div>
<div style="left:897px;top:904.5px;height:19px;line-height:19px;width:50px;text-align:center;font-size:15px;font-weight:bold;color:#111;letter-spacing:0.9px;text-indent:0.9px;">EXIT</div>
<div style="left:954px;top:905px;width:50px;height:19px;background:#90ee90;border:1px solid #000;box-shadow:inset 1px 1px 0 #a4ffa4"></div>
<div style="left:954px;top:904.5px;height:19px;line-height:19px;width:50px;text-align:center;font-size:15px;font-weight:bold;color:#111;">15</div>
<div style="left:1331px;top:905px;width:50px;height:19px;background:#ffb6c1;border:1px solid #000;box-shadow:inset 1px 1px 0 #ffc8d2"></div>
<div style="left:1331px;top:904.5px;height:19px;line-height:19px;width:50px;text-align:center;font-size:15px;font-weight:bold;color:#111;">15</div>
<div style="left:1388px;top:905px;width:50px;height:19px;background:#d3d3d3;border:1px solid #000;box-shadow:inset 1px 1px 0 #e6e6e6"></div>
<div style="left:1388px;top:904.5px;height:19px;line-height:19px;width:50px;text-align:center;font-size:15px;font-weight:bold;color:#111;letter-spacing:0.9px;text-indent:0.9px;">EXIT</div>
<div style="left:1445px;top:905px;width:50px;height:19px;background:#90ee90;border:1px solid #000;box-shadow:inset 1px 1px 0 #a4ffa4"></div>
<div style="left:1445px;top:904.5px;height:19px;line-height:19px;width:50px;text-align:center;font-size:15px;font-weight:bold;color:#111;">15</div>
<div style="left:657px;top:928px;width:591px;height:24px;background:#fdf6e6"></div>
<div style="left:7px;top:952px;width:1510px;height:1px;background:#cfcfcf"></div>
<div style="left:7px;top:930.5px;height:20px;line-height:20px;width:57px;text-align:center;font-size:14.4px;color:#222">1200</div>
<div style="left:65px;top:930.5px;height:20px;line-height:20px;width:99px;text-align:center;font-size:14.4px;color:#222">4,44,750</div>
<div style="left:534px;top:930.5px;height:20px;line-height:20px;width:52px;text-align:center;font-size:14.4px;color:#222">53700</div>
<div style="left:587px;top:930.5px;height:20px;line-height:20px;width:69px;text-align:center;font-size:14.4px;color:#222">20.10</div>
<div style="left:657px;top:930.5px;height:20px;line-height:20px;width:69px;text-align:center;font-size:14.4px;color:#222">1,203.45</div>
<div style="left:727px;top:930.5px;height:20px;line-height:20px;width:52px;text-align:center;font-size:14.4px;color:#222">53700</div>
<div style="left:1149px;top:930.5px;height:20px;line-height:20px;width:99px;text-align:center;font-size:14.4px;color:#222">2,445</div>
<div style="left:1249px;top:930.5px;height:20px;line-height:20px;width:78px;text-align:center;font-size:14.4px;color:#222">1,223.55</div>
<div style="left:309px;top:930px;width:50px;height:19px;background:#90ee90;border:1px solid #000;box-shadow:inset 1px 1px 0 #a4ffa4"></div>
<div style="left:309px;top:929.5px;height:19px;line-height:19px;width:50px;text-align:center;font-size:15px;font-weight:bold;color:#111;">15</div>
<div style="left:366px;top:930px;width:50px;height:19px;background:#d3d3d3;border:1px solid #000;box-shadow:inset 1px 1px 0 #e6e6e6"></div>
<div style="left:366px;top:929.5px;height:19px;line-height:19px;width:50px;text-align:center;font-size:15px;font-weight:bold;color:#111;letter-spacing:0.9px;text-indent:0.9px;">EXIT</div>
<div style="left:423px;top:930px;width:50px;height:19px;background:#ffb6c1;border:1px solid #000;box-shadow:inset 1px 1px 0 #ffc8d2"></div>
<div style="left:423px;top:929.5px;height:19px;line-height:19px;width:50px;text-align:center;font-size:15px;font-weight:bold;color:#111;">15</div>
<div style="left:480px;top:930px;width:50px;height:19px;background:#f0f0f0;border:1px solid #000;box-shadow:inset 1px 1px 0 #ffffff"></div>
<div style="left:480px;top:929.5px;height:19px;line-height:19px;width:50px;text-align:center;font-size:15px;font-weight:bold;color:#111;letter-spacing:0.5px;text-indent:0.5px;">50%</div>
<div style="left:783px;top:930px;width:50px;height:19px;background:#f0f0f0;border:1px solid #000;box-shadow:inset 1px 1px 0 #ffffff"></div>
<div style="left:783px;top:929.5px;height:19px;line-height:19px;width:50px;text-align:center;font-size:15px;font-weight:bold;color:#111;letter-spacing:0.5px;text-indent:0.5px;">50%</div>
<div style="left:840px;top:930px;width:50px;height:19px;background:#ffb6c1;border:1px solid #000;box-shadow:inset 1px 1px 0 #ffc8d2"></div>
<div style="left:840px;top:929.5px;height:19px;line-height:19px;width:50px;text-align:center;font-size:15px;font-weight:bold;color:#111;">15</div>
<div style="left:897px;top:930px;width:50px;height:19px;background:#d3d3d3;border:1px solid #000;box-shadow:inset 1px 1px 0 #e6e6e6"></div>
<div style="left:897px;top:929.5px;height:19px;line-height:19px;width:50px;text-align:center;font-size:15px;font-weight:bold;color:#111;letter-spacing:0.9px;text-indent:0.9px;">EXIT</div>
<div style="left:954px;top:930px;width:50px;height:19px;background:#90ee90;border:1px solid #000;box-shadow:inset 1px 1px 0 #a4ffa4"></div>
<div style="left:954px;top:929.5px;height:19px;line-height:19px;width:50px;text-align:center;font-size:15px;font-weight:bold;color:#111;">15</div>
<div style="left:1331px;top:930px;width:50px;height:19px;background:#ffb6c1;border:1px solid #000;box-shadow:inset 1px 1px 0 #ffc8d2"></div>
<div style="left:1331px;top:929.5px;height:19px;line-height:19px;width:50px;text-align:center;font-size:15px;font-weight:bold;color:#111;">15</div>
<div style="left:1388px;top:930px;width:50px;height:19px;background:#d3d3d3;border:1px solid #000;box-shadow:inset 1px 1px 0 #e6e6e6"></div>
<div style="left:1388px;top:929.5px;height:19px;line-height:19px;width:50px;text-align:center;font-size:15px;font-weight:bold;color:#111;letter-spacing:0.9px;text-indent:0.9px;">EXIT</div>
<div style="left:1445px;top:930px;width:50px;height:19px;background:#90ee90;border:1px solid #000;box-shadow:inset 1px 1px 0 #a4ffa4"></div>
<div style="left:1445px;top:929.5px;height:19px;line-height:19px;width:50px;text-align:center;font-size:15px;font-weight:bold;color:#111;">15</div>
<div style="left:657px;top:953px;width:591px;height:24px;background:#fdf6e6"></div>
<div style="left:7px;top:977px;width:1510px;height:1px;background:#cfcfcf"></div>
<div style="left:7px;top:955.5px;height:20px;line-height:20px;width:57px;text-align:center;font-size:14.4px;color:#222">1300</div>
<div style="left:65px;top:955.5px;height:20px;line-height:20px;width:99px;text-align:center;font-size:14.4px;color:#222">7,73,460</div>
<div style="left:534px;top:955.5px;height:20px;line-height:20px;width:52px;text-align:center;font-size:14.4px;color:#222">53800</div>
<div style="left:587px;top:955.5px;height:20px;line-height:20px;width:69px;text-align:center;font-size:14.4px;color:#222">16.05</div>
<div style="left:657px;top:955.5px;height:20px;line-height:20px;width:69px;text-align:center;font-size:14.4px;color:#222">1,296.25</div>
<div style="left:727px;top:955.5px;height:20px;line-height:20px;width:52px;text-align:center;font-size:14.4px;color:#222">53800</div>
<div style="left:1149px;top:955.5px;height:20px;line-height:20px;width:99px;text-align:center;font-size:14.4px;color:#222">4,845</div>
<div style="left:1249px;top:955.5px;height:20px;line-height:20px;width:78px;text-align:center;font-size:14.4px;color:#222">1,312.30</div>
<div style="left:309px;top:955px;width:50px;height:19px;background:#90ee90;border:1px solid #000;box-shadow:inset 1px 1px 0 #a4ffa4"></div>
<div style="left:309px;top:954.5px;height:19px;line-height:19px;width:50px;text-align:center;font-size:15px;font-weight:bold;color:#111;">15</div>
<div style="left:366px;top:955px;width:50px;height:19px;background:#d3d3d3;border:1px solid #000;box-shadow:inset 1px 1px 0 #e6e6e6"></div>
<div style="left:366px;top:954.5px;height:19px;line-height:19px;width:50px;text-align:center;font-size:15px;font-weight:bold;color:#111;letter-spacing:0.9px;text-indent:0.9px;">EXIT</div>
<div style="left:423px;top:955px;width:50px;height:19px;background:#ffb6c1;border:1px solid #000;box-shadow:inset 1px 1px 0 #ffc8d2"></div>
<div style="left:423px;top:954.5px;height:19px;line-height:19px;width:50px;text-align:center;font-size:15px;font-weight:bold;color:#111;">15</div>
<div style="left:480px;top:955px;width:50px;height:19px;background:#f0f0f0;border:1px solid #000;box-shadow:inset 1px 1px 0 #ffffff"></div>
<div style="left:480px;top:954.5px;height:19px;line-height:19px;width:50px;text-align:center;font-size:15px;font-weight:bold;color:#111;letter-spacing:0.5px;text-indent:0.5px;">50%</div>
<div style="left:783px;top:955px;width:50px;height:19px;background:#f0f0f0;border:1px solid #000;box-shadow:inset 1px 1px 0 #ffffff"></div>
<div style="left:783px;top:954.5px;height:19px;line-height:19px;width:50px;text-align:center;font-size:15px;font-weight:bold;color:#111;letter-spacing:0.5px;text-indent:0.5px;">50%</div>
<div style="left:840px;top:955px;width:50px;height:19px;background:#ffb6c1;border:1px solid #000;box-shadow:inset 1px 1px 0 #ffc8d2"></div>
<div style="left:840px;top:954.5px;height:19px;line-height:19px;width:50px;text-align:center;font-size:15px;font-weight:bold;color:#111;">15</div>
<div style="left:897px;top:955px;width:50px;height:19px;background:#d3d3d3;border:1px solid #000;box-shadow:inset 1px 1px 0 #e6e6e6"></div>
<div style="left:897px;top:954.5px;height:19px;line-height:19px;width:50px;text-align:center;font-size:15px;font-weight:bold;color:#111;letter-spacing:0.9px;text-indent:0.9px;">EXIT</div>
<div style="left:954px;top:955px;width:50px;height:19px;background:#90ee90;border:1px solid #000;box-shadow:inset 1px 1px 0 #a4ffa4"></div>
<div style="left:954px;top:954.5px;height:19px;line-height:19px;width:50px;text-align:center;font-size:15px;font-weight:bold;color:#111;">15</div>
<div style="left:1331px;top:955px;width:50px;height:19px;background:#ffb6c1;border:1px solid #000;box-shadow:inset 1px 1px 0 #ffc8d2"></div>
<div style="left:1331px;top:954.5px;height:19px;line-height:19px;width:50px;text-align:center;font-size:15px;font-weight:bold;color:#111;">15</div>
<div style="left:1388px;top:955px;width:50px;height:19px;background:#d3d3d3;border:1px solid #000;box-shadow:inset 1px 1px 0 #e6e6e6"></div>
<div style="left:1388px;top:954.5px;height:19px;line-height:19px;width:50px;text-align:center;font-size:15px;font-weight:bold;color:#111;letter-spacing:0.9px;text-indent:0.9px;">EXIT</div>
<div style="left:1445px;top:955px;width:50px;height:19px;background:#90ee90;border:1px solid #000;box-shadow:inset 1px 1px 0 #a4ffa4"></div>
<div style="left:1445px;top:954.5px;height:19px;line-height:19px;width:50px;text-align:center;font-size:15px;font-weight:bold;color:#111;">15</div>
<div style="left:657px;top:978px;width:591px;height:24px;background:#fdf6e6"></div>
<div style="left:7px;top:1002px;width:1510px;height:1px;background:#cfcfcf"></div>
<div style="left:7px;top:980.5px;height:20px;line-height:20px;width:57px;text-align:center;font-size:14.4px;color:#222">1400</div>
<div style="left:65px;top:980.5px;height:20px;line-height:20px;width:99px;text-align:center;font-size:14.4px;color:#222">4,15,260</div>
<div style="left:534px;top:980.5px;height:20px;line-height:20px;width:52px;text-align:center;font-size:14.4px;color:#222">53900</div>
<div style="left:587px;top:980.5px;height:20px;line-height:20px;width:69px;text-align:center;font-size:14.4px;color:#222">12.85</div>
<div style="left:657px;top:980.5px;height:20px;line-height:20px;width:69px;text-align:center;font-size:14.4px;color:#222">1,382.80</div>
<div style="left:727px;top:980.5px;height:20px;line-height:20px;width:52px;text-align:center;font-size:14.4px;color:#222">53900</div>
<div style="left:1149px;top:980.5px;height:20px;line-height:20px;width:99px;text-align:center;font-size:14.4px;color:#222">1,920</div>
<div style="left:1249px;top:980.5px;height:20px;line-height:20px;width:78px;text-align:center;font-size:14.4px;color:#222">1,395.65</div>
<div style="left:309px;top:980px;width:50px;height:19px;background:#90ee90;border:1px solid #000;box-shadow:inset 1px 1px 0 #a4ffa4"></div>
<div style="left:309px;top:979.5px;height:19px;line-height:19px;width:50px;text-align:center;font-size:15px;font-weight:bold;color:#111;">15</div>
<div style="left:366px;top:980px;width:50px;height:19px;background:#d3d3d3;border:1px solid #000;box-shadow:inset 1px 1px 0 #e6e6e6"></div>
<div style="left:366px;top:979.5px;height:19px;line-height:19px;width:50px;text-align:center;font-size:15px;font-weight:bold;color:#111;letter-spacing:0.9px;text-indent:0.9px;">EXIT</div>
<div style="left:423px;top:980px;width:50px;height:19px;background:#ffb6c1;border:1px solid #000;box-shadow:inset 1px 1px 0 #ffc8d2"></div>
<div style="left:423px;top:979.5px;height:19px;line-height:19px;width:50px;text-align:center;font-size:15px;font-weight:bold;color:#111;">15</div>
<div style="left:480px;top:980px;width:50px;height:19px;background:#f0f0f0;border:1px solid #000;box-shadow:inset 1px 1px 0 #ffffff"></div>
<div style="left:480px;top:979.5px;height:19px;line-height:19px;width:50px;text-align:center;font-size:15px;font-weight:bold;color:#111;letter-spacing:0.5px;text-indent:0.5px;">50%</div>
<div style="left:783px;top:980px;width:50px;height:19px;background:#f0f0f0;border:1px solid #000;box-shadow:inset 1px 1px 0 #ffffff"></div>
<div style="left:783px;top:979.5px;height:19px;line-height:19px;width:50px;text-align:center;font-size:15px;font-weight:bold;color:#111;letter-spacing:0.5px;text-indent:0.5px;">50%</div>
<div style="left:840px;top:980px;width:50px;height:19px;background:#ffb6c1;border:1px solid #000;box-shadow:inset 1px 1px 0 #ffc8d2"></div>
<div style="left:840px;top:979.5px;height:19px;line-height:19px;width:50px;text-align:center;font-size:15px;font-weight:bold;color:#111;">15</div>
<div style="left:897px;top:980px;width:50px;height:19px;background:#d3d3d3;border:1px solid #000;box-shadow:inset 1px 1px 0 #e6e6e6"></div>
<div style="left:897px;top:979.5px;height:19px;line-height:19px;width:50px;text-align:center;font-size:15px;font-weight:bold;color:#111;letter-spacing:0.9px;text-indent:0.9px;">EXIT</div>
<div style="left:954px;top:980px;width:50px;height:19px;background:#90ee90;border:1px solid #000;box-shadow:inset 1px 1px 0 #a4ffa4"></div>
<div style="left:954px;top:979.5px;height:19px;line-height:19px;width:50px;text-align:center;font-size:15px;font-weight:bold;color:#111;">15</div>
<div style="left:1331px;top:980px;width:50px;height:19px;background:#ffb6c1;border:1px solid #000;box-shadow:inset 1px 1px 0 #ffc8d2"></div>
<div style="left:1331px;top:979.5px;height:19px;line-height:19px;width:50px;text-align:center;font-size:15px;font-weight:bold;color:#111;">15</div>
<div style="left:1388px;top:980px;width:50px;height:19px;background:#d3d3d3;border:1px solid #000;box-shadow:inset 1px 1px 0 #e6e6e6"></div>
<div style="left:1388px;top:979.5px;height:19px;line-height:19px;width:50px;text-align:center;font-size:15px;font-weight:bold;color:#111;letter-spacing:0.9px;text-indent:0.9px;">EXIT</div>
<div style="left:1445px;top:980px;width:50px;height:19px;background:#90ee90;border:1px solid #000;box-shadow:inset 1px 1px 0 #a4ffa4"></div>
<div style="left:1445px;top:979.5px;height:19px;line-height:19px;width:50px;text-align:center;font-size:15px;font-weight:bold;color:#111;">15</div>
<div style="left:64px;top:253px;width:1px;height:750px;background:#cfcfcf"></div>
<div style="left:164px;top:278px;width:1px;height:725px;background:#cfcfcf"></div>
<div style="left:227px;top:278px;width:1px;height:725px;background:#cfcfcf"></div>
<div style="left:305px;top:278px;width:1px;height:725px;background:#cfcfcf"></div>
<div style="left:362px;top:278px;width:1px;height:725px;background:#cfcfcf"></div>
<div style="left:419px;top:278px;width:1px;height:725px;background:#cfcfcf"></div>
<div style="left:476px;top:278px;width:1px;height:725px;background:#cfcfcf"></div>
<div style="left:533px;top:278px;width:1px;height:725px;background:#cfcfcf"></div>
<div style="left:586px;top:278px;width:1px;height:725px;background:#cfcfcf"></div>
<div style="left:656px;top:253px;width:1px;height:750px;background:#cfcfcf"></div>
<div style="left:726px;top:278px;width:1px;height:725px;background:#cfcfcf"></div>
<div style="left:779px;top:278px;width:1px;height:725px;background:#cfcfcf"></div>
<div style="left:836px;top:278px;width:1px;height:725px;background:#cfcfcf"></div>
<div style="left:893px;top:278px;width:1px;height:725px;background:#cfcfcf"></div>
<div style="left:950px;top:278px;width:1px;height:725px;background:#cfcfcf"></div>
<div style="left:1007px;top:278px;width:1px;height:725px;background:#cfcfcf"></div>
<div style="left:1085px;top:278px;width:1px;height:725px;background:#cfcfcf"></div>
<div style="left:1148px;top:278px;width:1px;height:725px;background:#cfcfcf"></div>
<div style="left:1248px;top:253px;width:1px;height:750px;background:#cfcfcf"></div>
<div style="left:1327px;top:278px;width:1px;height:725px;background:#cfcfcf"></div>
<div style="left:1384px;top:278px;width:1px;height:725px;background:#cfcfcf"></div>
<div style="left:1441px;top:278px;width:1px;height:725px;background:#cfcfcf"></div>
<div style="left:1498px;top:278px;width:1px;height:725px;background:#cfcfcf"></div>
<div style="left:7px;top:302px;width:1510px;height:1px;background:#cfcfcf"></div>
<div style="left:1522px;top:23px;width:376px;height:1001px;background:#fff;border:2px solid #555;border-bottom:none"></div>
<div style="left:1524px;top:25px;width:372px;height:48px;background:#e4e4e4;border-bottom:1px solid #d0d0d0"></div>
<div style="left:1538px;top:42.0px;height:18px;line-height:18px;white-space:nowrap;text-align:left;font-size:14px;color:#333">Drag a column to group</div>
<div style="left:1536px;top:78.0px;height:16px;line-height:16px;white-space:nowrap;text-align:left;font-size:12.3px;font-weight:bold;color:#111">Time</div>
<div style="left:1705px;top:78.0px;height:16px;line-height:16px;white-space:nowrap;text-align:left;font-size:12.3px;font-weight:bold;color:#111">Q</div>
<div style="left:1811px;top:78.0px;height:16px;line-height:16px;white-space:nowrap;text-align:left;font-size:12.3px;font-weight:bold;color:#111">Status</div>
<svg style="position:absolute;left:1575px;top:80px" width="14" height="13"><path d="M1,1 L12.5,1 L8.3,6 L8.3,11.3 L5.2,11.3 L5.2,6 Z" fill="none" stroke="#151515" stroke-width="1.05" stroke-linejoin="round"/></svg>
<svg style="position:absolute;left:1621px;top:80px" width="14" height="13"><path d="M1,1 L12.5,1 L8.3,6 L8.3,11.3 L5.2,11.3 L5.2,6 Z" fill="none" stroke="#151515" stroke-width="1.05" stroke-linejoin="round"/></svg>
<svg style="position:absolute;left:1667px;top:80px" width="14" height="13"><path d="M1,1 L12.5,1 L8.3,6 L8.3,11.3 L5.2,11.3 L5.2,6 Z" fill="none" stroke="#151515" stroke-width="1.05" stroke-linejoin="round"/></svg>
<svg style="position:absolute;left:1727px;top:80px" width="14" height="13"><path d="M1,1 L12.5,1 L8.3,6 L8.3,11.3 L5.2,11.3 L5.2,6 Z" fill="none" stroke="#151515" stroke-width="1.05" stroke-linejoin="round"/></svg>
<svg style="position:absolute;left:1774px;top:80px" width="14" height="13"><path d="M1,1 L12.5,1 L8.3,6 L8.3,11.3 L5.2,11.3 L5.2,6 Z" fill="none" stroke="#151515" stroke-width="1.05" stroke-linejoin="round"/></svg>
<svg style="position:absolute;left:1858px;top:80px" width="14" height="13"><path d="M1,1 L12.5,1 L8.3,6 L8.3,11.3 L5.2,11.3 L5.2,6 Z" fill="none" stroke="#151515" stroke-width="1.05" stroke-linejoin="round"/></svg>
<div style="left:1599px;top:73px;width:1px;height:255px;background:#d0d0d0"></div>
<div style="left:1645px;top:73px;width:1px;height:255px;background:#d0d0d0"></div>
<div style="left:1691px;top:73px;width:1px;height:255px;background:#d0d0d0"></div>
<div style="left:1750px;top:73px;width:1px;height:255px;background:#d0d0d0"></div>
<div style="left:1798px;top:73px;width:1px;height:255px;background:#d0d0d0"></div>
<div style="left:1882px;top:73px;width:1px;height:255px;background:#d0d0d0"></div>
<div style="left:1524px;top:97px;width:359px;height:1px;background:#d0d0d0"></div>
<div style="left:1524px;top:98px;width:358px;height:22px;background:#f0d5d8"></div>
<div style="left:1524px;top:120px;width:359px;height:1px;background:#d0d0d0"></div>
<div style="left:1524px;top:102.0px;height:18px;line-height:18px;width:75px;text-align:center;font-size:12.3px;color:#222">09:45:45</div>
<div style="left:1600px;top:102.0px;height:18px;line-height:18px;width:45px;text-align:center;font-size:12.3px;color:#222">52500</div>
<div style="left:1646px;top:102.0px;height:18px;line-height:18px;width:45px;text-align:center;font-size:12.3px;color:#222">PE</div>
<div style="left:1692px;top:102.0px;height:18px;line-height:18px;width:58px;text-align:center;font-size:12.3px;color:#222">15</div>
<div style="left:1751px;top:102.0px;height:18px;line-height:18px;width:47px;text-align:center;font-size:12.3px;color:#222">284.85</div>
<div style="left:1799px;top:102.0px;height:18px;line-height:18px;width:83px;text-align:center;font-size:12.3px;color:#222">COMPLETE</div>
<div style="left:1524px;top:121px;width:358px;height:22px;background:#f0d5d8"></div>
<div style="left:1524px;top:143px;width:359px;height:1px;background:#d0d0d0"></div>
<div style="left:1524px;top:125.0px;height:18px;line-height:18px;width:75px;text-align:center;font-size:12.3px;color:#222">09:45:45</div>
<div style="left:1600px;top:125.0px;height:18px;line-height:18px;width:45px;text-align:center;font-size:12.3px;color:#222">52600</div>
<div style="left:1646px;top:125.0px;height:18px;line-height:18px;width:45px;text-align:center;font-size:12.3px;color:#222">PE</div>
<div style="left:1692px;top:125.0px;height:18px;line-height:18px;width:58px;text-align:center;font-size:12.3px;color:#222">15</div>
<div style="left:1751px;top:125.0px;height:18px;line-height:18px;width:47px;text-align:center;font-size:12.3px;color:#222">334.85</div>
<div style="left:1799px;top:125.0px;height:18px;line-height:18px;width:83px;text-align:center;font-size:12.3px;color:#222">COMPLETE</div>
<div style="left:1524px;top:144px;width:358px;height:22px;background:#f0d5d8"></div>
<div style="left:1524px;top:166px;width:359px;height:1px;background:#d0d0d0"></div>
<div style="left:1524px;top:148.0px;height:18px;line-height:18px;width:75px;text-align:center;font-size:12.3px;color:#222">09:45:42</div>
<div style="left:1600px;top:148.0px;height:18px;line-height:18px;width:45px;text-align:center;font-size:12.3px;color:#222">52600</div>
<div style="left:1646px;top:148.0px;height:18px;line-height:18px;width:45px;text-align:center;font-size:12.3px;color:#222">CE</div>
<div style="left:1692px;top:148.0px;height:18px;line-height:18px;width:58px;text-align:center;font-size:12.3px;color:#222">15</div>
<div style="left:1751px;top:148.0px;height:18px;line-height:18px;width:47px;text-align:center;font-size:12.3px;color:#222">259.40</div>
<div style="left:1799px;top:148.0px;height:18px;line-height:18px;width:83px;text-align:center;font-size:12.3px;color:#222">COMPLETE</div>
<div style="left:1524px;top:167px;width:358px;height:22px;background:#fdf8e8"></div>
<div style="left:1524px;top:189px;width:359px;height:1px;background:#d0d0d0"></div>
<div style="left:1524px;top:171.0px;height:18px;line-height:18px;width:75px;text-align:center;font-size:12.3px;color:#222">09:45:34</div>
<div style="left:1600px;top:171.0px;height:18px;line-height:18px;width:45px;text-align:center;font-size:12.3px;color:#222">53300</div>
<div style="left:1646px;top:171.0px;height:18px;line-height:18px;width:45px;text-align:center;font-size:12.3px;color:#222">PE</div>
<div style="left:1692px;top:171.0px;height:18px;line-height:18px;width:58px;text-align:center;font-size:12.3px;color:#222">15</div>
<div style="left:1751px;top:171.0px;height:18px;line-height:18px;width:47px;text-align:center;font-size:12.3px;color:#222">819.35</div>
<div style="left:1799px;top:171.0px;height:18px;line-height:18px;width:83px;text-align:center;font-size:12.3px;color:#222">COMPLETE</div>
<div style="left:1524px;top:190px;width:358px;height:22px;background:#fdf8e8"></div>
<div style="left:1524px;top:212px;width:359px;height:1px;background:#d0d0d0"></div>
<div style="left:1524px;top:194.0px;height:18px;line-height:18px;width:75px;text-align:center;font-size:12.3px;color:#222">09:45:32</div>
<div style="left:1600px;top:194.0px;height:18px;line-height:18px;width:45px;text-align:center;font-size:12.3px;color:#222">51600</div>
<div style="left:1646px;top:194.0px;height:18px;line-height:18px;width:45px;text-align:center;font-size:12.3px;color:#222">CE</div>
<div style="left:1692px;top:194.0px;height:18px;line-height:18px;width:58px;text-align:center;font-size:12.3px;color:#222">15</div>
<div style="left:1751px;top:194.0px;height:18px;line-height:18px;width:47px;text-align:center;font-size:12.3px;color:#222">983.20</div>
<div style="left:1799px;top:194.0px;height:18px;line-height:18px;width:83px;text-align:center;font-size:12.3px;color:#222">COMPLETE</div>
<div style="left:1524px;top:213px;width:358px;height:22px;background:#f0d5d8"></div>
<div style="left:1524px;top:235px;width:359px;height:1px;background:#d0d0d0"></div>
<div style="left:1524px;top:217.0px;height:18px;line-height:18px;width:75px;text-align:center;font-size:12.3px;color:#222">09:45:30</div>
<div style="left:1600px;top:217.0px;height:18px;line-height:18px;width:45px;text-align:center;font-size:12.3px;color:#222">52500</div>
<div style="left:1646px;top:217.0px;height:18px;line-height:18px;width:45px;text-align:center;font-size:12.3px;color:#222">CE</div>
<div style="left:1692px;top:217.0px;height:18px;line-height:18px;width:58px;text-align:center;font-size:12.3px;color:#222">15</div>
<div style="left:1751px;top:217.0px;height:18px;line-height:18px;width:47px;text-align:center;font-size:12.3px;color:#222">311.40</div>
<div style="left:1799px;top:217.0px;height:18px;line-height:18px;width:83px;text-align:center;font-size:12.3px;color:#222">COMPLETE</div>
<div style="left:1524px;top:236px;width:358px;height:22px;background:#f0d5d8"></div>
<div style="left:1524px;top:258px;width:359px;height:1px;background:#d0d0d0"></div>
<div style="left:1524px;top:240.0px;height:18px;line-height:18px;width:75px;text-align:center;font-size:12.3px;color:#222">09:45:30</div>
<div style="left:1600px;top:240.0px;height:18px;line-height:18px;width:45px;text-align:center;font-size:12.3px;color:#222">52500</div>
<div style="left:1646px;top:240.0px;height:18px;line-height:18px;width:45px;text-align:center;font-size:12.3px;color:#222">PE</div>
<div style="left:1692px;top:240.0px;height:18px;line-height:18px;width:58px;text-align:center;font-size:12.3px;color:#222">15</div>
<div style="left:1751px;top:240.0px;height:18px;line-height:18px;width:47px;text-align:center;font-size:12.3px;color:#222">284.65</div>
<div style="left:1799px;top:240.0px;height:18px;line-height:18px;width:83px;text-align:center;font-size:12.3px;color:#222">COMPLETE</div>
<div style="left:1524px;top:259px;width:358px;height:22px;background:#f0d5d8"></div>
<div style="left:1524px;top:281px;width:359px;height:1px;background:#d0d0d0"></div>
<div style="left:1524px;top:263.0px;height:18px;line-height:18px;width:75px;text-align:center;font-size:12.3px;color:#222">09:45:24</div>
<div style="left:1600px;top:263.0px;height:18px;line-height:18px;width:45px;text-align:center;font-size:12.3px;color:#222">52600</div>
<div style="left:1646px;top:263.0px;height:18px;line-height:18px;width:45px;text-align:center;font-size:12.3px;color:#222">CE</div>
<div style="left:1692px;top:263.0px;height:18px;line-height:18px;width:58px;text-align:center;font-size:12.3px;color:#222">15</div>
<div style="left:1751px;top:263.0px;height:18px;line-height:18px;width:47px;text-align:center;font-size:12.3px;color:#222">252.30</div>
<div style="left:1799px;top:263.0px;height:18px;line-height:18px;width:83px;text-align:center;font-size:12.3px;color:#222">COMPLETE</div>
<div style="left:1524px;top:282px;width:358px;height:22px;background:#f0d5d8"></div>
<div style="left:1524px;top:304px;width:359px;height:1px;background:#d0d0d0"></div>
<div style="left:1524px;top:286.0px;height:18px;line-height:18px;width:75px;text-align:center;font-size:12.3px;color:#222">09:45:24</div>
<div style="left:1600px;top:286.0px;height:18px;line-height:18px;width:45px;text-align:center;font-size:12.3px;color:#222">52600</div>
<div style="left:1646px;top:286.0px;height:18px;line-height:18px;width:45px;text-align:center;font-size:12.3px;color:#222">PE</div>
<div style="left:1692px;top:286.0px;height:18px;line-height:18px;width:58px;text-align:center;font-size:12.3px;color:#222">15</div>
<div style="left:1751px;top:286.0px;height:18px;line-height:18px;width:47px;text-align:center;font-size:12.3px;color:#222">340.25</div>
<div style="left:1799px;top:286.0px;height:18px;line-height:18px;width:83px;text-align:center;font-size:12.3px;color:#222">COMPLETE</div>
<div style="left:1524px;top:305px;width:358px;height:22px;background:#f0d5d8"></div>
<div style="left:1524px;top:327px;width:359px;height:1px;background:#d0d0d0"></div>
<div style="left:1524px;top:309.0px;height:18px;line-height:18px;width:75px;text-align:center;font-size:12.3px;color:#222">09:45:21</div>
<div style="left:1600px;top:309.0px;height:18px;line-height:18px;width:45px;text-align:center;font-size:12.3px;color:#222">52500</div>
<div style="left:1646px;top:309.0px;height:18px;line-height:18px;width:45px;text-align:center;font-size:12.3px;color:#222">CE</div>
<div style="left:1692px;top:309.0px;height:18px;line-height:18px;width:58px;text-align:center;font-size:12.3px;color:#222">15</div>
<div style="left:1751px;top:309.0px;height:18px;line-height:18px;width:47px;text-align:center;font-size:12.3px;color:#222">302.85</div>
<div style="left:1799px;top:309.0px;height:18px;line-height:18px;width:83px;text-align:center;font-size:12.3px;color:#222">COMPLETE</div>
<div style="left:1599px;top:98px;width:1px;height:230px;background:#d0d0d0"></div>
<div style="left:1645px;top:98px;width:1px;height:230px;background:#d0d0d0"></div>
<div style="left:1691px;top:98px;width:1px;height:230px;background:#d0d0d0"></div>
<div style="left:1750px;top:98px;width:1px;height:230px;background:#d0d0d0"></div>
<div style="left:1798px;top:98px;width:1px;height:230px;background:#d0d0d0"></div>
<div style="left:1882px;top:98px;width:1px;height:230px;background:#d0d0d0"></div>
<div style="left:1900px;top:23px;width:23px;height:1001px;background:linear-gradient(90deg,#eceef2,#d3d8df);border:1px solid #a9b3c0;border-bottom:none"></div>
<svg style="position:absolute;left:1907px;top:31px" width="10" height="8"><path d="M4.3,0.6 L1,3.7 L4.3,6.9 M8.8,0.6 L5.5,3.7 L8.8,6.9" stroke="#222" stroke-width="1.3" fill="none"/></svg></body></html>
